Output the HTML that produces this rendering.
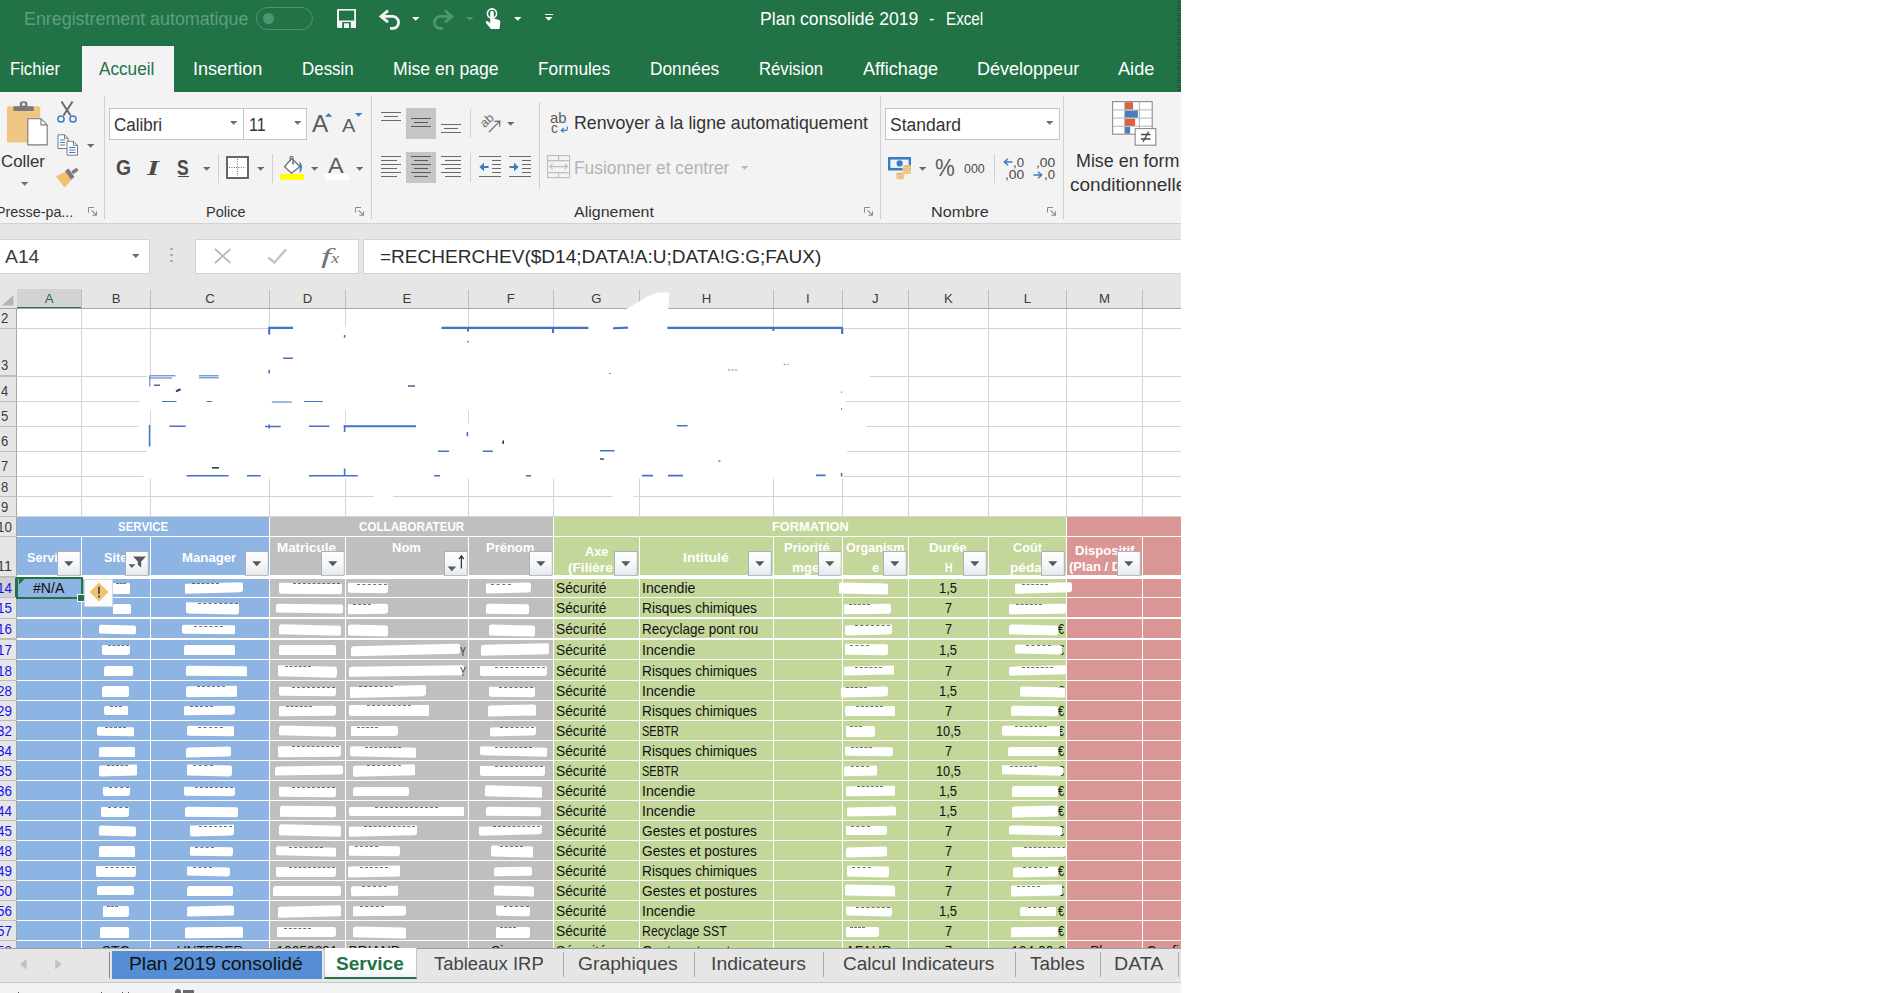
<!DOCTYPE html>
<html><head><meta charset="utf-8"><title>Plan consolidé 2019 - Excel</title>
<style>
html,body{margin:0;padding:0;background:#fff;}
body{width:1886px;height:993px;overflow:hidden;position:relative;font-family:"Liberation Sans", sans-serif;}
#app{position:absolute;left:0;top:0;width:1181px;height:993px;overflow:hidden;background:#e6e6e6;}
#app div,#app span,#app svg{box-sizing:border-box;}
</style></head><body><div id="app">
<div style="position:absolute;left:0px;top:0px;width:1181px;height:92px;background:#217346;"></div>
<svg style="position:absolute;left:1176.5px;top:0" width="4" height="92"><defs><pattern id="dp" width="4" height="12" patternUnits="userSpaceOnUse"><rect x="0.4" y="1" width="1" height="1" fill="#14306e"/><rect x="2.4" y="1" width="1" height="1" fill="#5a2a2a"/><rect x="1.4" y="2" width="1" height="1" fill="#0a8a0a"/><rect x="0.4" y="3" width="1" height="1" fill="#5a2a2a"/><rect x="2.4" y="3" width="1" height="1" fill="#14306e"/><rect x="2.4" y="5" width="1" height="1" fill="#5a2a2a"/><rect x="1.4" y="6" width="1" height="1" fill="#111"/><rect x="0.4" y="8" width="1" height="1" fill="#14306e"/><rect x="2.4" y="8" width="1" height="1" fill="#14306e"/><rect x="0.4" y="10" width="1" height="1" fill="#5a2a2a"/><rect x="2.4" y="10" width="1" height="1" fill="#5a2a2a"/></pattern></defs><rect width="4" height="92" fill="url(#dp)"/></svg>
<div style="position:absolute;left:82px;top:46px;width:92px;height:47px;background:#f3f3f3;"></div>
<span style="position:absolute;left:24.48px;top:11.09px;white-space:nowrap;line-height:1;font-family:'Liberation Sans', sans-serif;font-size:17.5px;font-weight:normal;font-style:normal;color:#5e9e7f;transform-origin:0 0;transform:scaleX(1.0205);">Enregistrement automatique</span>
<div style="position:absolute;left:256px;top:6.5px;width:57px;height:23.5px;border:1px solid #4f9470;border-radius:12px"></div>
<div style="position:absolute;left:262.5px;top:13px;width:11px;height:11px;border-radius:6px;background:#4f9470"></div>
<svg style="position:absolute;left:337px;top:8.8px;" width="19.4" height="19" viewBox="0 0 19.4 19"><rect x="0" y="0" width="19.4" height="19" rx="1.2" fill="#f4f4f4"/><rect x="2" y="1.6" width="15.2" height="9.9" fill="#217346"/><rect x="5.2" y="13" width="8.6" height="6" fill="#217346"/><rect x="7" y="14.3" width="5" height="4.7" fill="#f4f4f4"/></svg>
<svg style="position:absolute;left:378px;top:9px;" width="24" height="21" viewBox="0 0 24 21"><path d="M10 1.6 L3 7.4 L10 13.2" fill="none" stroke="#f4f4f4" stroke-width="2.8"/><path d="M3.6 7.4 H14.6 a6 6 0 0 1 0 12 H12" fill="none" stroke="#f4f4f4" stroke-width="2.8"/></svg>
<svg style="position:absolute;left:412px;top:17.2px;" width="7.4" height="3.8" viewBox="0 0 7.4 3.8"><path d="M0 0H7.4L3.7 3.8Z" fill="#fff"/></svg>
<svg style="position:absolute;left:431px;top:9px;" width="24" height="21" viewBox="0 0 24 21"><path d="M14 1.6 L21 7.4 L14 13.2" fill="none" stroke="#4e966f" stroke-width="2.8"/><path d="M20.4 7.4 H9.4 a6 6 0 0 0 0 12 H12" fill="none" stroke="#4e966f" stroke-width="2.8"/></svg>
<svg style="position:absolute;left:466px;top:17.2px;" width="7.4" height="3.8" viewBox="0 0 7.4 3.8"><path d="M0 0H7.4L3.7 3.8Z" fill="#4e936f"/></svg>
<svg style="position:absolute;left:484px;top:7px;" width="18" height="23" viewBox="0 0 18 23"><circle cx="8" cy="6.5" r="4.6" fill="none" stroke="#fff" stroke-width="1.6"/><path d="M6.2 5.5 a1.8 1.8 0 0 1 3.6 0 V11.5 L15 13 q1.5 .6 1.3 2.2 L15.5 22 H7 L2 16 q-.8-1.4 .6-2 q1-.3 1.8.5 L6.2 16.5 Z" fill="#fff"/></svg>
<svg style="position:absolute;left:514px;top:17.2px;" width="7.4" height="3.8" viewBox="0 0 7.4 3.8"><path d="M0 0H7.4L3.7 3.8Z" fill="#fff"/></svg>
<div style="position:absolute;left:545px;top:13.8px;width:7.6px;height:1.4px;background:#fff;"></div>
<svg style="position:absolute;left:545px;top:17.2px;" width="7.6" height="3.8" viewBox="0 0 7.6 3.8"><path d="M0 0H7.6L3.8 3.8Z" fill="#fff"/></svg>
<span style="position:absolute;left:759.97px;top:10.63px;white-space:nowrap;line-height:1;font-family:'Liberation Sans', sans-serif;font-size:17.8px;font-weight:normal;font-style:normal;color:#fff;transform-origin:0 0;transform:scaleX(0.9888);">Plan consolidé 2019</span>
<span style="position:absolute;left:929.47px;top:10.63px;white-space:nowrap;line-height:1;font-family:'Liberation Sans', sans-serif;font-size:17.8px;font-weight:normal;font-style:normal;color:#fff;transform-origin:0 0;transform:scaleX(0.9044);">-</span>
<span style="position:absolute;left:946.27px;top:10.63px;white-space:nowrap;line-height:1;font-family:'Liberation Sans', sans-serif;font-size:17.8px;font-weight:normal;font-style:normal;color:#fff;transform-origin:0 0;transform:scaleX(0.8545);">Excel</span>
<span style="position:absolute;left:10.27px;top:60.83px;white-space:nowrap;line-height:1;font-family:'Liberation Sans', sans-serif;font-size:17.8px;font-weight:normal;font-style:normal;color:#fff;transform-origin:0 0;transform:scaleX(0.9362);">Fichier</span>
<span style="position:absolute;left:99.47px;top:60.83px;white-space:nowrap;line-height:1;font-family:'Liberation Sans', sans-serif;font-size:17.8px;font-weight:normal;font-style:normal;color:#217346;transform-origin:0 0;transform:scaleX(0.9656);">Accueil</span>
<span style="position:absolute;left:193.47px;top:60.83px;white-space:nowrap;line-height:1;font-family:'Liberation Sans', sans-serif;font-size:17.8px;font-weight:normal;font-style:normal;color:#fff;transform-origin:0 0;transform:scaleX(1.0169);">Insertion</span>
<span style="position:absolute;left:302.07px;top:60.83px;white-space:nowrap;line-height:1;font-family:'Liberation Sans', sans-serif;font-size:17.8px;font-weight:normal;font-style:normal;color:#fff;transform-origin:0 0;transform:scaleX(0.9521);">Dessin</span>
<span style="position:absolute;left:393.17px;top:60.83px;white-space:nowrap;line-height:1;font-family:'Liberation Sans', sans-serif;font-size:17.8px;font-weight:normal;font-style:normal;color:#fff;transform-origin:0 0;transform:scaleX(0.9896);">Mise en page</span>
<span style="position:absolute;left:538.17px;top:60.83px;white-space:nowrap;line-height:1;font-family:'Liberation Sans', sans-serif;font-size:17.8px;font-weight:normal;font-style:normal;color:#fff;transform-origin:0 0;transform:scaleX(0.9736);">Formules</span>
<span style="position:absolute;left:650.17px;top:60.83px;white-space:nowrap;line-height:1;font-family:'Liberation Sans', sans-serif;font-size:17.8px;font-weight:normal;font-style:normal;color:#fff;transform-origin:0 0;transform:scaleX(0.9715);">Données</span>
<span style="position:absolute;left:759.37px;top:60.83px;white-space:nowrap;line-height:1;font-family:'Liberation Sans', sans-serif;font-size:17.8px;font-weight:normal;font-style:normal;color:#fff;transform-origin:0 0;transform:scaleX(0.9377);">Révision</span>
<span style="position:absolute;left:862.77px;top:60.83px;white-space:nowrap;line-height:1;font-family:'Liberation Sans', sans-serif;font-size:17.8px;font-weight:normal;font-style:normal;color:#fff;transform-origin:0 0;transform:scaleX(1.0166);">Affichage</span>
<span style="position:absolute;left:976.97px;top:60.83px;white-space:nowrap;line-height:1;font-family:'Liberation Sans', sans-serif;font-size:17.8px;font-weight:normal;font-style:normal;color:#fff;transform-origin:0 0;transform:scaleX(1.0132);">Développeur</span>
<span style="position:absolute;left:1117.67px;top:60.83px;white-space:nowrap;line-height:1;font-family:'Liberation Sans', sans-serif;font-size:17.8px;font-weight:normal;font-style:normal;color:#fff;transform-origin:0 0;transform:scaleX(1.0214);">Aide</span>
<div style="position:absolute;left:0px;top:92px;width:1181px;height:131px;background:#f3f3f3;"></div>
<div style="position:absolute;left:0px;top:222.5px;width:1181px;height:1.2px;background:#d2d2d2;"></div>
<div style="position:absolute;left:103.80000000000001px;top:96.3px;width:1.2px;height:122.5px;background:#d0d0d0;"></div>
<div style="position:absolute;left:370.9px;top:96.3px;width:1.2px;height:122.5px;background:#d0d0d0;"></div>
<div style="position:absolute;left:879.8px;top:96.3px;width:1.2px;height:122.5px;background:#d0d0d0;"></div>
<div style="position:absolute;left:1062.8000000000002px;top:96.3px;width:1.2px;height:122.5px;background:#d0d0d0;"></div>
<div style="position:absolute;left:217.8px;top:154px;width:1.1px;height:29px;background:#d0d0d0;"></div>
<div style="position:absolute;left:271.8px;top:154px;width:1.1px;height:29px;background:#d0d0d0;"></div>
<div style="position:absolute;left:469.9px;top:109px;width:1.1px;height:29px;background:#d0d0d0;"></div>
<div style="position:absolute;left:469.9px;top:153.4px;width:1.1px;height:28.5px;background:#d0d0d0;"></div>
<div style="position:absolute;left:538.8px;top:102.4px;width:1.1px;height:86.5px;background:#d0d0d0;"></div>
<div style="position:absolute;left:993.9px;top:154px;width:1.1px;height:28.5px;background:#d0d0d0;"></div>
<svg style="position:absolute;left:6px;top:100px;" width="43" height="47" viewBox="0 0 43 47"><rect x="1" y="6.2" width="33.2" height="36.2" rx="1.5" fill="#f0c684"/>
<path d="M7.4 10.9V7.2q0-1 1-1H13.8V3.6q0-2.4 3.8-2.4q3.8 0 3.8 2.4V6.2H26.8q1 0 1 1V10.9Z" fill="#7a7a7a"/><circle cx="17.6" cy="4.2" r="1.5" fill="#f3f3f3"/>
<path d="M21.8 18.7H35L41.2 24.9V44.9H21.8Z" fill="#fff" stroke="#7a7a7a" stroke-width="1.1"/><path d="M35 18.7V24.9H41.2" fill="none" stroke="#7a7a7a" stroke-width="1.1"/></svg>
<span style="position:absolute;left:1.38px;top:153.14px;white-space:nowrap;line-height:1;font-family:'Liberation Sans', sans-serif;font-size:17.2px;font-weight:normal;font-style:normal;color:#333;transform-origin:0 0;transform:scaleX(0.9789);">Coller</span>
<svg style="position:absolute;left:20.9px;top:182px;" width="7.3" height="3.8" viewBox="0 0 7.3 3.8"><path d="M0 0H7.3L3.65 3.8Z" fill="#6a6a6a"/></svg>
<svg style="position:absolute;left:56px;top:100px;" width="22" height="24" viewBox="0 0 22 24"><path d="M5.5 1.5 L14.5 15.5 M16.5 1.5 L7.5 15.5" stroke="#6a6a6a" stroke-width="2" fill="none"/>
<circle cx="5" cy="19" r="3.1" fill="none" stroke="#3b7dc4" stroke-width="1.5"/><circle cx="17" cy="19" r="3.1" fill="none" stroke="#3b7dc4" stroke-width="1.5"/></svg>
<svg style="position:absolute;left:57px;top:134px;" width="22" height="22" viewBox="0 0 22 22"><path d="M1 .8H7.5L11 4.3V14.5H1Z" fill="#fff" stroke="#7a7a7a" stroke-width="1"/><path d="M7.5 .8V4.3H11" fill="none" stroke="#7a7a7a"/>
<path d="M3 6H8M3 8.5H8M3 11H8" stroke="#3b7dc4" stroke-width="1"/>
<path d="M10 7.3H16.5L20.5 11.3V21.2H10Z" fill="#fff" stroke="#7a7a7a" stroke-width="1"/><path d="M16.5 7.3V11.3H20.5" fill="none" stroke="#7a7a7a"/>
<path d="M12 13.5H18.5M12 16H18.5M12 18.5H18.5" stroke="#3b7dc4" stroke-width="1"/></svg>
<svg style="position:absolute;left:87px;top:144.2px;" width="7.3" height="3.8" viewBox="0 0 7.3 3.8"><path d="M0 0H7.3L3.65 3.8Z" fill="#6a6a6a"/></svg>
<svg style="position:absolute;left:55px;top:167px;" width="25" height="22" viewBox="0 0 25 22"><path d="M1 9.5 L10.5 4.5 L16.5 13 L9.5 20.5 Z" fill="#f0c070"/>
<path d="M10 4 L13.5 1.5 L19.5 10 L16 12.7 Z" fill="#7a7a7a"/><path d="M16.2 4.2 L21.5 .8 L23.6 3.6 L18.2 7.2 Z" fill="#7a7a7a"/></svg>
<span style="position:absolute;left:-3.96px;top:204.15px;white-space:nowrap;line-height:1;font-family:'Liberation Sans', sans-serif;font-size:15.3px;font-weight:normal;font-style:normal;color:#333;transform-origin:0 0;transform:scaleX(0.9374);">Presse-pa...</span>
<svg style="position:absolute;left:87.7px;top:207.20000000000002px;" width="10" height="9.5" viewBox="0 0 10 9.5"><path d="M.5 5.6V.5H6" fill="none" stroke="#8a8a8a" stroke-width="1"/><path d="M3.6 3.4L8 7.8M8.4 4.2V8.2H4.4" fill="none" stroke="#8a8a8a" stroke-width="1.1"/></svg>
<div style="position:absolute;left:109px;top:108px;width:134.5px;height:31.5px;background:#fff;border:1px solid #c6c6c6"></div>
<div style="position:absolute;left:243px;top:108px;width:64px;height:31.5px;background:#fff;border:1px solid #c6c6c6"></div>
<span style="position:absolute;left:114.07px;top:116.60px;white-space:nowrap;line-height:1;font-family:'Liberation Sans', sans-serif;font-size:17.6px;font-weight:normal;font-style:normal;color:#333;transform-origin:0 0;transform:scaleX(0.9655);">Calibri</span>
<svg style="position:absolute;left:230px;top:121.3px;" width="7.2" height="3.8" viewBox="0 0 7.2 3.8"><path d="M0 0H7.2L3.6 3.8Z" fill="#6a6a6a"/></svg>
<span style="position:absolute;left:249.07px;top:116.60px;white-space:nowrap;line-height:1;font-family:'Liberation Sans', sans-serif;font-size:17.6px;font-weight:normal;font-style:normal;color:#333;transform-origin:0 0;transform:scaleX(0.9117);">11</span>
<svg style="position:absolute;left:294px;top:121.3px;" width="7.2" height="3.8" viewBox="0 0 7.2 3.8"><path d="M0 0H7.2L3.6 3.8Z" fill="#6a6a6a"/></svg>
<span style="position:absolute;left:311.50px;top:112.69px;white-space:nowrap;line-height:1;font-family:'Liberation Sans', sans-serif;font-size:23.4px;font-weight:normal;font-style:normal;color:#5c5c5c;transform-origin:0 0;transform:scaleX(1.0422);">A</span>
<svg style="position:absolute;left:325.2px;top:113.2px;" width="7.2" height="3.8" viewBox="0 0 7.2 3.8"><path d="M0 3.8H7.2L3.6 0Z" fill="#3b7dc4"/></svg>
<span style="position:absolute;left:342.25px;top:117.09px;white-space:nowrap;line-height:1;font-family:'Liberation Sans', sans-serif;font-size:18.2px;font-weight:normal;font-style:normal;color:#5c5c5c;transform-origin:0 0;transform:scaleX(1.1008);">A</span>
<svg style="position:absolute;left:354.8px;top:113.2px;" width="7.2" height="3.8" viewBox="0 0 7.2 3.8"><path d="M0 0H7.2L3.6 3.8Z" fill="#3b7dc4"/></svg>
<span style="position:absolute;left:116.15px;top:157.42px;white-space:nowrap;line-height:1;font-family:'Liberation Sans', sans-serif;font-size:21.6px;font-weight:bold;font-style:normal;color:#4a4a4a;transform-origin:0 0;transform:scaleX(0.8949);">G</span>
<span style="position:absolute;left:146.94px;top:157.08px;white-space:nowrap;line-height:1;font-family:'Liberation Serif', serif;font-size:22px;font-weight:bold;font-style:italic;color:#4a4a4a;transform-origin:0 0;transform:scaleX(1.4061);">I</span>
<span style="position:absolute;left:177.35px;top:157.42px;white-space:nowrap;line-height:1;font-family:'Liberation Sans', sans-serif;font-size:21.6px;font-weight:bold;font-style:normal;color:#4a4a4a;transform-origin:0 0;transform:scaleX(0.8074);">S</span>
<div style="position:absolute;left:177.6px;top:176.1px;width:11.8px;height:1.4px;background:#4a4a4a;"></div>
<svg style="position:absolute;left:202.8px;top:167px;" width="7.2" height="3.8" viewBox="0 0 7.2 3.8"><path d="M0 0H7.2L3.6 3.8Z" fill="#6a6a6a"/></svg>
<svg style="position:absolute;left:226px;top:156px;" width="23" height="23" viewBox="0 0 23 23"><rect x="1" y="1" width="21" height="21" fill="#fff" stroke="#5f5f5f" stroke-width="1.9"/><path d="M11.5 3V20M3 11.5H20" stroke="#6a6a6a" stroke-width="1" stroke-dasharray="1 1.4"/></svg>
<svg style="position:absolute;left:256.8px;top:167px;" width="7.2" height="3.8" viewBox="0 0 7.2 3.8"><path d="M0 0H7.2L3.6 3.8Z" fill="#6a6a6a"/></svg>
<svg style="position:absolute;left:280px;top:155px;" width="25" height="25" viewBox="0 0 25 25"><rect x="0" y="19.1" width="24" height="5.8" fill="#ffff00"/>
<path d="M11.5 3.5 L20 11.5 L11.5 18.3 L4.5 11.8 Z" fill="#fff" stroke="#6a6a6a" stroke-width="1.2"/>
<path d="M10.2 6.5V2.6q0-1.4 1.4-1.4q1.4 0 1.4 1.4V8" fill="none" stroke="#6a6a6a" stroke-width="1.1"/><circle cx="13" cy="8.3" r="1.1" fill="#6a6a6a"/>
<path d="M19.5 6.8q3.2 2.6 2.2 7.2q-.2 2.5-2 4.2q.2-3.8-.2-6.5Z" fill="#3b7dc4"/></svg>
<svg style="position:absolute;left:310.8px;top:167px;" width="7.2" height="3.8" viewBox="0 0 7.2 3.8"><path d="M0 0H7.2L3.6 3.8Z" fill="#6a6a6a"/></svg>
<span style="position:absolute;left:328.33px;top:154.71px;white-space:nowrap;line-height:1;font-family:'Liberation Sans', sans-serif;font-size:22.2px;font-weight:normal;font-style:normal;color:#5c5c5c;transform-origin:0 0;transform:scaleX(1.0561);">A</span>
<div style="position:absolute;left:324.9px;top:174.1px;width:24px;height:5.8px;background:#fff;"></div>
<svg style="position:absolute;left:355.8px;top:167px;" width="7.2" height="3.8" viewBox="0 0 7.2 3.8"><path d="M0 0H7.2L3.6 3.8Z" fill="#6a6a6a"/></svg>
<span style="position:absolute;left:206.34px;top:204.15px;white-space:nowrap;line-height:1;font-family:'Liberation Sans', sans-serif;font-size:15.3px;font-weight:normal;font-style:normal;color:#333;transform-origin:0 0;transform:scaleX(0.9480);">Police</span>
<svg style="position:absolute;left:354.8px;top:207.20000000000002px;" width="10" height="9.5" viewBox="0 0 10 9.5"><path d="M.5 5.6V.5H6" fill="none" stroke="#8a8a8a" stroke-width="1"/><path d="M3.6 3.4L8 7.8M8.4 4.2V8.2H4.4" fill="none" stroke="#8a8a8a" stroke-width="1.1"/></svg>
<div style="position:absolute;left:381px;top:111.725px;width:20px;height:1.15px;background:#6a6a6a;"></div>
<div style="position:absolute;left:383.8px;top:115.77499999999999px;width:14.399999999999999px;height:1.15px;background:#6a6a6a;"></div>
<div style="position:absolute;left:381px;top:119.82499999999999px;width:20px;height:1.15px;background:#6a6a6a;"></div>
<div style="position:absolute;left:406px;top:108px;width:30px;height:31px;background:#c6c6c6;"></div>
<div style="position:absolute;left:411px;top:117.925px;width:20px;height:1.15px;background:#5a5a5a;"></div>
<div style="position:absolute;left:414.2px;top:121.875px;width:14.0px;height:1.15px;background:#5a5a5a;"></div>
<div style="position:absolute;left:411px;top:125.825px;width:20px;height:1.15px;background:#5a5a5a;"></div>
<div style="position:absolute;left:441px;top:123.625px;width:20px;height:1.15px;background:#6a6a6a;"></div>
<div style="position:absolute;left:443.8px;top:127.675px;width:14.399999999999999px;height:1.15px;background:#6a6a6a;"></div>
<div style="position:absolute;left:441px;top:131.72500000000002px;width:20px;height:1.15px;background:#6a6a6a;"></div>
<svg style="position:absolute;left:479px;top:112px;" width="23" height="22" viewBox="0 0 23 22"><text x="0" y="0" font-family="Liberation Sans, sans-serif" font-size="12.5" fill="#6a6a6a" transform="translate(5.4,16.2) rotate(-42)">ab</text>
<path d="M10 20 L20.6 9.4 M15.4 9.4 L20.9 9.1 L20.6 14.6" fill="none" stroke="#6a6a6a" stroke-width="1.2"/></svg>
<svg style="position:absolute;left:506.7px;top:122.2px;" width="7.3" height="3.8" viewBox="0 0 7.3 3.8"><path d="M0 0H7.3L3.65 3.8Z" fill="#6a6a6a"/></svg>
<div style="position:absolute;left:381px;top:155.625px;width:20px;height:1.15px;background:#6a6a6a;"></div>
<div style="position:absolute;left:381px;top:159.655px;width:16.0px;height:1.15px;background:#6a6a6a;"></div>
<div style="position:absolute;left:381px;top:163.685px;width:20px;height:1.15px;background:#6a6a6a;"></div>
<div style="position:absolute;left:381px;top:167.715px;width:16.0px;height:1.15px;background:#6a6a6a;"></div>
<div style="position:absolute;left:381px;top:171.745px;width:20px;height:1.15px;background:#6a6a6a;"></div>
<div style="position:absolute;left:381px;top:175.775px;width:16.0px;height:1.15px;background:#6a6a6a;"></div>
<div style="position:absolute;left:406px;top:152px;width:30px;height:31px;background:#c6c6c6;"></div>
<div style="position:absolute;left:411px;top:155.625px;width:20px;height:1.15px;background:#5a5a5a;"></div>
<div style="position:absolute;left:414.2px;top:159.655px;width:14.0px;height:1.15px;background:#5a5a5a;"></div>
<div style="position:absolute;left:411px;top:163.685px;width:20px;height:1.15px;background:#5a5a5a;"></div>
<div style="position:absolute;left:414.2px;top:167.715px;width:14.0px;height:1.15px;background:#5a5a5a;"></div>
<div style="position:absolute;left:411px;top:171.745px;width:20px;height:1.15px;background:#5a5a5a;"></div>
<div style="position:absolute;left:414.2px;top:175.775px;width:14.0px;height:1.15px;background:#5a5a5a;"></div>
<div style="position:absolute;left:441px;top:155.625px;width:20px;height:1.15px;background:#6a6a6a;"></div>
<div style="position:absolute;left:445.0px;top:159.655px;width:16.0px;height:1.15px;background:#6a6a6a;"></div>
<div style="position:absolute;left:441px;top:163.685px;width:20px;height:1.15px;background:#6a6a6a;"></div>
<div style="position:absolute;left:445.0px;top:167.715px;width:16.0px;height:1.15px;background:#6a6a6a;"></div>
<div style="position:absolute;left:441px;top:171.745px;width:20px;height:1.15px;background:#6a6a6a;"></div>
<div style="position:absolute;left:445.0px;top:175.775px;width:16.0px;height:1.15px;background:#6a6a6a;"></div>
<div style="position:absolute;left:479px;top:155.625px;width:22px;height:1.15px;background:#6a6a6a;"></div>
<div style="position:absolute;left:491.76px;top:159.655px;width:9.24px;height:1.15px;background:#6a6a6a;"></div>
<div style="position:absolute;left:491.76px;top:163.685px;width:9.24px;height:1.15px;background:#6a6a6a;"></div>
<div style="position:absolute;left:491.76px;top:167.715px;width:9.24px;height:1.15px;background:#6a6a6a;"></div>
<div style="position:absolute;left:491.76px;top:171.745px;width:9.24px;height:1.15px;background:#6a6a6a;"></div>
<div style="position:absolute;left:479px;top:175.775px;width:22px;height:1.15px;background:#6a6a6a;"></div>
<svg style="position:absolute;left:478.5px;top:161.5px;" width="10" height="10" viewBox="0 0 10 10"><path d="M9.5 3.9H5V.8L.4 5L5 9.2V6.1H9.5Z" fill="#3b7dc4"/></svg>
<div style="position:absolute;left:509px;top:155.625px;width:22px;height:1.15px;background:#6a6a6a;"></div>
<div style="position:absolute;left:521.76px;top:159.655px;width:9.24px;height:1.15px;background:#6a6a6a;"></div>
<div style="position:absolute;left:521.76px;top:163.685px;width:9.24px;height:1.15px;background:#6a6a6a;"></div>
<div style="position:absolute;left:521.76px;top:167.715px;width:9.24px;height:1.15px;background:#6a6a6a;"></div>
<div style="position:absolute;left:521.76px;top:171.745px;width:9.24px;height:1.15px;background:#6a6a6a;"></div>
<div style="position:absolute;left:509px;top:175.775px;width:22px;height:1.15px;background:#6a6a6a;"></div>
<svg style="position:absolute;left:508.5px;top:161.5px;" width="10" height="10" viewBox="0 0 10 10"><path d="M.5 3.9H5V.8L9.6 5L5 9.2V6.1H.5Z" fill="#3b7dc4"/></svg>
<span style="position:absolute;left:550.35px;top:109.80px;white-space:nowrap;line-height:1;font-family:'Liberation Sans', sans-serif;font-size:15px;font-weight:normal;font-style:normal;color:#5c5c5c;transform-origin:0 0;transform:scaleX(0.9888);">ab</span>
<span style="position:absolute;left:550.55px;top:120.00px;white-space:nowrap;line-height:1;font-family:'Liberation Sans', sans-serif;font-size:15px;font-weight:normal;font-style:normal;color:#5c5c5c;transform-origin:0 0;transform:scaleX(0.9200);">c</span>
<svg style="position:absolute;left:559.5px;top:125.5px;" width="8.5" height="7" viewBox="0 0 8.5 7"><path d="M7.3 .5V3.2q0 1.2-1.2 1.2H1.5M3.8 2L1.2 4.4L3.8 6.6" fill="none" stroke="#3b7dc4" stroke-width="1.1"/></svg>
<span style="position:absolute;left:574.47px;top:115.43px;white-space:nowrap;line-height:1;font-family:'Liberation Sans', sans-serif;font-size:17.8px;font-weight:normal;font-style:normal;color:#333;transform-origin:0 0;transform:scaleX(0.9979);">Renvoyer à la ligne automatiquement</span>
<svg style="position:absolute;left:547px;top:155px;" width="23.5" height="23.5" viewBox="0 0 23.5 23.5"><rect x=".6" y=".6" width="22" height="22" fill="#f3f3f3" stroke="#bdbdbd" stroke-width="1.1"/>
<path d="M.6 5.6H22.6M.6 17.6H22.6M11.6 .6V5.6M11.6 17.6V22.6" stroke="#bdbdbd" stroke-width="1.1"/>
<path d="M3 11.6H20.4M5.6 9L3 11.6L5.6 14.2M17.8 9L20.4 11.6L17.8 14.2" fill="none" stroke="#bdbdbd" stroke-width="1.1"/></svg>
<span style="position:absolute;left:574.47px;top:159.83px;white-space:nowrap;line-height:1;font-family:'Liberation Sans', sans-serif;font-size:17.8px;font-weight:normal;font-style:normal;color:#b3b3b3;transform-origin:0 0;transform:scaleX(0.9763);">Fusionner et centrer</span>
<svg style="position:absolute;left:741px;top:166.2px;" width="7.2" height="3.8" viewBox="0 0 7.2 3.8"><path d="M0 0H7.2L3.6 3.8Z" fill="#b8b8b8"/></svg>
<span style="position:absolute;left:574.14px;top:204.15px;white-space:nowrap;line-height:1;font-family:'Liberation Sans', sans-serif;font-size:15.3px;font-weight:normal;font-style:normal;color:#333;transform-origin:0 0;transform:scaleX(1.0441);">Alignement</span>
<svg style="position:absolute;left:863.8px;top:207.20000000000002px;" width="10" height="9.5" viewBox="0 0 10 9.5"><path d="M.5 5.6V.5H6" fill="none" stroke="#8a8a8a" stroke-width="1"/><path d="M3.6 3.4L8 7.8M8.4 4.2V8.2H4.4" fill="none" stroke="#8a8a8a" stroke-width="1.1"/></svg>
<div style="position:absolute;left:885px;top:108px;width:174.5px;height:31.5px;background:#fff;border:1px solid #c6c6c6"></div>
<span style="position:absolute;left:890.27px;top:116.60px;white-space:nowrap;line-height:1;font-family:'Liberation Sans', sans-serif;font-size:17.6px;font-weight:normal;font-style:normal;color:#333;transform-origin:0 0;transform:scaleX(0.9936);">Standard</span>
<svg style="position:absolute;left:1045.7px;top:121.3px;" width="7.2" height="3.8" viewBox="0 0 7.2 3.8"><path d="M0 0H7.2L3.6 3.8Z" fill="#6a6a6a"/></svg>
<svg style="position:absolute;left:888px;top:157px;" width="24" height="23" viewBox="0 0 24 23"><rect x="0" y="0" width="23" height="13.5" fill="#3b7dc4"/><rect x="2.4" y="2.6" width="18.2" height="8.3" fill="#f3f3f3"/>
<circle cx="11.6" cy="6.4" r="3.1" fill="#3b7dc4"/>
<g fill="#eab765" stroke="#f3f3f3" stroke-width=".5"><ellipse cx="12.2" cy="20.8" rx="4.3" ry="1.6"/><ellipse cx="12.2" cy="18.8" rx="4.3" ry="1.6"/><ellipse cx="12.2" cy="16.8" rx="4.3" ry="1.6"/>
<ellipse cx="18.8" cy="15.4" rx="4.3" ry="1.6"/><ellipse cx="18.8" cy="13.4" rx="4.3" ry="1.6"/><ellipse cx="18.8" cy="11.4" rx="4.3" ry="1.6"/><ellipse cx="18.8" cy="9.4" rx="4.3" ry="1.6"/></g></svg>
<svg style="position:absolute;left:918.8px;top:167px;" width="7.2" height="3.8" viewBox="0 0 7.2 3.8"><path d="M0 0H7.2L3.6 3.8Z" fill="#6a6a6a"/></svg>
<span style="position:absolute;left:934.50px;top:157.41px;white-space:nowrap;line-height:1;font-family:'Liberation Sans', sans-serif;font-size:23.5px;font-weight:normal;font-style:normal;color:#5c5c5c;transform-origin:0 0;transform:scaleX(0.9504);">%</span>
<span style="position:absolute;left:964.40px;top:162.46px;white-space:nowrap;line-height:1;font-family:'Liberation Sans', sans-serif;font-size:13.4px;font-weight:normal;font-style:normal;color:#4a4a4a;transform-origin:0 0;transform:scaleX(0.9250);">000</span>
<svg style="position:absolute;left:1003px;top:157.5px;" width="10" height="8" viewBox="0 0 10 8"><path d="M9.5 4H1.5M5 .8L1.4 4L5 7.2" fill="none" stroke="#3b7dc4" stroke-width="1.5"/></svg>
<span style="position:absolute;left:1013.12px;top:156.73px;white-space:nowrap;line-height:1;font-family:'Liberation Sans', sans-serif;font-size:12.6px;font-weight:normal;font-style:normal;color:#4a4a4a;transform-origin:0 0;transform:scaleX(1.0510);">,0</span>
<span style="position:absolute;left:1005.22px;top:168.83px;white-space:nowrap;line-height:1;font-family:'Liberation Sans', sans-serif;font-size:12.6px;font-weight:normal;font-style:normal;color:#4a4a4a;transform-origin:0 0;transform:scaleX(1.0991);">,00</span>
<span style="position:absolute;left:1035.82px;top:156.73px;white-space:nowrap;line-height:1;font-family:'Liberation Sans', sans-serif;font-size:12.6px;font-weight:normal;font-style:normal;color:#4a4a4a;transform-origin:0 0;transform:scaleX(1.0991);">,00</span>
<svg style="position:absolute;left:1033px;top:170.5px;" width="10" height="8" viewBox="0 0 10 8"><path d="M.5 4H8.5M5 .8L8.6 4L5 7.2" fill="none" stroke="#3b7dc4" stroke-width="1.5"/></svg>
<span style="position:absolute;left:1043.62px;top:168.83px;white-space:nowrap;line-height:1;font-family:'Liberation Sans', sans-serif;font-size:12.6px;font-weight:normal;font-style:normal;color:#4a4a4a;transform-origin:0 0;transform:scaleX(1.0510);">,0</span>
<span style="position:absolute;left:931.34px;top:204.15px;white-space:nowrap;line-height:1;font-family:'Liberation Sans', sans-serif;font-size:15.3px;font-weight:normal;font-style:normal;color:#333;transform-origin:0 0;transform:scaleX(1.0607);">Nombre</span>
<svg style="position:absolute;left:1046.7px;top:207.20000000000002px;" width="10" height="9.5" viewBox="0 0 10 9.5"><path d="M.5 5.6V.5H6" fill="none" stroke="#8a8a8a" stroke-width="1"/><path d="M3.6 3.4L8 7.8M8.4 4.2V8.2H4.4" fill="none" stroke="#8a8a8a" stroke-width="1.1"/></svg>
<svg style="position:absolute;left:1112px;top:100.5px;" width="45" height="45" viewBox="0 0 45 45"><rect x=".6" y=".6" width="39.6" height="32.6" fill="#fff" stroke="#8a8a8a" stroke-width="1.1"/>
<rect x="12.9" y="1.2" width="8.2" height="7.4" fill="#dc6141"/><rect x="12.9" y="9.4" width="13" height="7.4" fill="#4a7ebb"/>
<rect x="12.9" y="17.6" width="10.2" height="7.4" fill="#dc6141"/><rect x="12.9" y="25.8" width="5.2" height="6.8" fill="#4a7ebb"/>
<path d="M.6 8.9H40.2M.6 17.1H40.2M.6 25.2H40.2M12.6 .6V33.2M27.4 .6V33.2" stroke="#b4b4b4" stroke-width="1" fill="none"/>
<rect x="23.2" y="27.6" width="20.6" height="16.6" fill="#fff" stroke="#8a8a8a" stroke-width="1.1"/>
<path d="M29 33.5H38.5M29 38H38.5M36.6 30.6L31 41" stroke="#4a4a4a" stroke-width="1.3" fill="none"/></svg>
<div style="position:absolute;left:1060px;top:148px;width:121px;height:24px;overflow:hidden"><span style="position:absolute;left:15.67px;top:4.80px;white-space:nowrap;line-height:1;font-family:'Liberation Sans', sans-serif;font-size:17.6px;font-weight:normal;font-style:normal;color:#333;transform-origin:0 0;transform:scaleX(1.0164);">Mise en form</span></div>
<div style="position:absolute;left:1060px;top:172px;width:121px;height:26px;overflow:hidden"><span style="position:absolute;left:10.27px;top:4.80px;white-space:nowrap;line-height:1;font-family:'Liberation Sans', sans-serif;font-size:17.6px;font-weight:normal;font-style:normal;color:#333;transform-origin:0 0;transform:scaleX(1.0812);">conditionnelle</span></div>
<div style="position:absolute;left:-1px;top:238.8px;width:150.5px;height:35.3px;background:#fff;border:1px solid #d4d4d4"></div>
<span style="position:absolute;left:5.05px;top:247.91px;white-space:nowrap;line-height:1;font-family:'Liberation Sans', sans-serif;font-size:18.3px;font-weight:normal;font-style:normal;color:#3b3b3b;transform-origin:0 0;transform:scaleX(1.0564);">A14</span>
<svg style="position:absolute;left:131.6px;top:253.9px;" width="7.6" height="3.9" viewBox="0 0 7.6 3.9"><path d="M0 0H7.6L3.8 3.9Z" fill="#6a6a6a"/></svg>
<div style="position:absolute;left:170.4px;top:248.2px;width:2.2px;height:2.2px;background:#b0b0b0;"></div>
<div style="position:absolute;left:170.4px;top:253.8px;width:2.2px;height:2.2px;background:#b0b0b0;"></div>
<div style="position:absolute;left:170.4px;top:259.6px;width:2.2px;height:2.2px;background:#b0b0b0;"></div>
<div style="position:absolute;left:195px;top:238.8px;width:164px;height:35.3px;background:#fff;border:1px solid #d4d4d4"></div>
<svg style="position:absolute;left:214px;top:248px;" width="18" height="16" viewBox="0 0 18 16"><path d="M1 1L16.5 15M16.5 1L1 15" stroke="#b8b8b8" stroke-width="1.7" fill="none"/></svg>
<svg style="position:absolute;left:267px;top:248px;" width="21" height="16" viewBox="0 0 21 16"><path d="M1.2 9.5L7.5 14.5L19.2 1.2" stroke="#c4c4c4" stroke-width="2.4" fill="none"/></svg>
<span style="position:absolute;left:320.94px;top:245.28px;white-space:nowrap;line-height:1;font-family:'Liberation Serif', serif;font-size:22px;font-weight:normal;font-style:italic;color:#747474;transform-origin:0 0;transform:scaleX(1.7045);">f</span>
<span style="position:absolute;left:330.95px;top:251.20px;white-space:nowrap;line-height:1;font-family:'Liberation Serif', serif;font-size:15px;font-weight:normal;font-style:italic;color:#747474;transform-origin:0 0;transform:scaleX(1.2440);">x</span>
<div style="position:absolute;left:363px;top:238.8px;width:830px;height:35.3px;background:#fff;border:1px solid #d4d4d4"></div>
<span style="position:absolute;left:380.25px;top:247.91px;white-space:nowrap;line-height:1;font-family:'Liberation Sans', sans-serif;font-size:18.3px;font-weight:normal;font-style:normal;color:#2b2b2b;transform-origin:0 0;transform:scaleX(1.0415);">=RECHERCHEV($D14;DATA!A:U;DATA!G:G;FAUX)</span>
<div style="position:absolute;left:0px;top:289.5px;width:1181px;height:659px;background:#fff;"></div>
<div style="position:absolute;left:0px;top:289.5px;width:1181px;height:19.2px;background:#e6e6e6;"></div>
<div style="position:absolute;left:17.1px;top:289.3px;width:64.6px;height:19px;background:#d2d2d2;"></div>
<div style="position:absolute;left:17.1px;top:306.8px;width:65.1px;height:2px;background:#217346;"></div>
<svg style="position:absolute;left:1.5px;top:294.5px;" width="12" height="11" viewBox="0 0 12 11"><path d="M11.5 0V10.5H0Z" fill="#b4b4b4"/></svg>
<div style="position:absolute;left:81.10000000000001px;top:289.6px;width:1.2px;height:18.6px;background:#bdbdbd;"></div>
<div style="position:absolute;left:149.8px;top:289.6px;width:1.2px;height:18.6px;background:#bdbdbd;"></div>
<div style="position:absolute;left:268.79999999999995px;top:289.6px;width:1.2px;height:18.6px;background:#bdbdbd;"></div>
<div style="position:absolute;left:344.79999999999995px;top:289.6px;width:1.2px;height:18.6px;background:#bdbdbd;"></div>
<div style="position:absolute;left:467.59999999999997px;top:289.6px;width:1.2px;height:18.6px;background:#bdbdbd;"></div>
<div style="position:absolute;left:552.8px;top:289.6px;width:1.2px;height:18.6px;background:#bdbdbd;"></div>
<div style="position:absolute;left:639.0px;top:289.6px;width:1.2px;height:18.6px;background:#bdbdbd;"></div>
<div style="position:absolute;left:772.8px;top:289.6px;width:1.2px;height:18.6px;background:#bdbdbd;"></div>
<div style="position:absolute;left:841.6999999999999px;top:289.6px;width:1.2px;height:18.6px;background:#bdbdbd;"></div>
<div style="position:absolute;left:907.8px;top:289.6px;width:1.2px;height:18.6px;background:#bdbdbd;"></div>
<div style="position:absolute;left:987.6999999999999px;top:289.6px;width:1.2px;height:18.6px;background:#bdbdbd;"></div>
<div style="position:absolute;left:1065.8000000000002px;top:289.6px;width:1.2px;height:18.6px;background:#bdbdbd;"></div>
<div style="position:absolute;left:1141.8000000000002px;top:289.6px;width:1.2px;height:18.6px;background:#bdbdbd;"></div>
<span style="position:absolute;left:44.75px;top:291.93px;white-space:nowrap;line-height:1;font-family:'Liberation Sans', sans-serif;font-size:13.2px;font-weight:normal;font-style:normal;color:#217346;transform-origin:0 0;transform:scaleX(1.0000);">A</span>
<span style="position:absolute;left:111.65px;top:291.93px;white-space:nowrap;line-height:1;font-family:'Liberation Sans', sans-serif;font-size:13.2px;font-weight:normal;font-style:normal;color:#3b3b3b;transform-origin:0 0;transform:scaleX(1.0000);">B</span>
<span style="position:absolute;left:205.13px;top:291.93px;white-space:nowrap;line-height:1;font-family:'Liberation Sans', sans-serif;font-size:13.2px;font-weight:normal;font-style:normal;color:#3b3b3b;transform-origin:0 0;transform:scaleX(1.0000);">C</span>
<span style="position:absolute;left:302.63px;top:291.93px;white-space:nowrap;line-height:1;font-family:'Liberation Sans', sans-serif;font-size:13.2px;font-weight:normal;font-style:normal;color:#3b3b3b;transform-origin:0 0;transform:scaleX(1.0000);">D</span>
<span style="position:absolute;left:402.40px;top:291.93px;white-space:nowrap;line-height:1;font-family:'Liberation Sans', sans-serif;font-size:13.2px;font-weight:normal;font-style:normal;color:#3b3b3b;transform-origin:0 0;transform:scaleX(1.0000);">E</span>
<span style="position:absolute;left:506.77px;top:291.93px;white-space:nowrap;line-height:1;font-family:'Liberation Sans', sans-serif;font-size:13.2px;font-weight:normal;font-style:normal;color:#3b3b3b;transform-origin:0 0;transform:scaleX(1.0000);">F</span>
<span style="position:absolute;left:591.37px;top:291.93px;white-space:nowrap;line-height:1;font-family:'Liberation Sans', sans-serif;font-size:13.2px;font-weight:normal;font-style:normal;color:#3b3b3b;transform-origin:0 0;transform:scaleX(1.0000);">G</span>
<span style="position:absolute;left:701.73px;top:291.93px;white-space:nowrap;line-height:1;font-family:'Liberation Sans', sans-serif;font-size:13.2px;font-weight:normal;font-style:normal;color:#3b3b3b;transform-origin:0 0;transform:scaleX(1.0000);">H</span>
<span style="position:absolute;left:806.01px;top:291.93px;white-space:nowrap;line-height:1;font-family:'Liberation Sans', sans-serif;font-size:13.2px;font-weight:normal;font-style:normal;color:#3b3b3b;transform-origin:0 0;transform:scaleX(1.0000);">I</span>
<span style="position:absolute;left:872.05px;top:291.93px;white-space:nowrap;line-height:1;font-family:'Liberation Sans', sans-serif;font-size:13.2px;font-weight:normal;font-style:normal;color:#3b3b3b;transform-origin:0 0;transform:scaleX(1.0000);">J</span>
<span style="position:absolute;left:943.95px;top:291.93px;white-space:nowrap;line-height:1;font-family:'Liberation Sans', sans-serif;font-size:13.2px;font-weight:normal;font-style:normal;color:#3b3b3b;transform-origin:0 0;transform:scaleX(1.0000);">K</span>
<span style="position:absolute;left:1023.68px;top:291.93px;white-space:nowrap;line-height:1;font-family:'Liberation Sans', sans-serif;font-size:13.2px;font-weight:normal;font-style:normal;color:#3b3b3b;transform-origin:0 0;transform:scaleX(1.0000);">L</span>
<span style="position:absolute;left:1098.90px;top:291.93px;white-space:nowrap;line-height:1;font-family:'Liberation Sans', sans-serif;font-size:13.2px;font-weight:normal;font-style:normal;color:#3b3b3b;transform-origin:0 0;transform:scaleX(1.0000);">M</span>
<div style="position:absolute;left:0px;top:308px;width:1181px;height:1.1px;background:#a6a6a6;"></div>
<div style="position:absolute;left:0px;top:309px;width:16.6px;height:640px;background:#e6e6e6;"></div>
<div style="position:absolute;left:16.1px;top:309px;width:1.1px;height:640px;background:#a6a6a6;"></div>
<div style="position:absolute;left:16.6px;top:328px;width:1181px;height:1px;background:#d4d4d4;"></div>
<div style="position:absolute;left:16.6px;top:376px;width:1181px;height:1px;background:#d4d4d4;"></div>
<div style="position:absolute;left:16.6px;top:401px;width:1181px;height:1px;background:#d4d4d4;"></div>
<div style="position:absolute;left:16.6px;top:426px;width:1181px;height:1px;background:#d4d4d4;"></div>
<div style="position:absolute;left:16.6px;top:451px;width:1181px;height:1px;background:#d4d4d4;"></div>
<div style="position:absolute;left:16.6px;top:476px;width:1181px;height:1px;background:#d4d4d4;"></div>
<div style="position:absolute;left:16.6px;top:496px;width:1181px;height:1px;background:#d4d4d4;"></div>
<div style="position:absolute;left:16.6px;top:516px;width:1181px;height:1px;background:#d4d4d4;"></div>
<div style="position:absolute;left:81px;top:309px;width:1px;height:207.5px;background:#d4d4d4;"></div>
<div style="position:absolute;left:150px;top:309px;width:1px;height:207.5px;background:#d4d4d4;"></div>
<div style="position:absolute;left:269px;top:309px;width:1px;height:207.5px;background:#d4d4d4;"></div>
<div style="position:absolute;left:345px;top:309px;width:1px;height:207.5px;background:#d4d4d4;"></div>
<div style="position:absolute;left:468px;top:309px;width:1px;height:207.5px;background:#d4d4d4;"></div>
<div style="position:absolute;left:553px;top:309px;width:1px;height:207.5px;background:#d4d4d4;"></div>
<div style="position:absolute;left:639px;top:309px;width:1px;height:207.5px;background:#d4d4d4;"></div>
<div style="position:absolute;left:773px;top:309px;width:1px;height:207.5px;background:#d4d4d4;"></div>
<div style="position:absolute;left:842px;top:309px;width:1px;height:207.5px;background:#d4d4d4;"></div>
<div style="position:absolute;left:908px;top:309px;width:1px;height:207.5px;background:#d4d4d4;"></div>
<div style="position:absolute;left:988px;top:309px;width:1px;height:207.5px;background:#d4d4d4;"></div>
<div style="position:absolute;left:1066px;top:309px;width:1px;height:207.5px;background:#d4d4d4;"></div>
<div style="position:absolute;left:1142px;top:309px;width:1px;height:207.5px;background:#d4d4d4;"></div>
<div style="position:absolute;left:0px;top:327.7px;width:16.6px;height:1.2px;background:#bdbdbd;"></div>
<div style="position:absolute;left:0px;top:309px;width:15.600000000000001px;height:19.30000000000001px;overflow:hidden"><span style="position:absolute;left:0.66px;top:1.75px;white-space:nowrap;line-height:1;font-family:'Liberation Sans', sans-serif;font-size:14px;font-weight:normal;font-style:normal;color:#3b3b3b;transform-origin:0 0;transform:scaleX(0.9337);">2</span></div>
<div style="position:absolute;left:0px;top:375.4px;width:16.6px;height:1.2px;background:#bdbdbd;"></div>
<div style="position:absolute;left:0px;top:328.3px;width:15.600000000000001px;height:47.69999999999999px;overflow:hidden"><span style="position:absolute;left:0.66px;top:30.15px;white-space:nowrap;line-height:1;font-family:'Liberation Sans', sans-serif;font-size:14px;font-weight:normal;font-style:normal;color:#3b3b3b;transform-origin:0 0;transform:scaleX(0.9337);">3</span></div>
<div style="position:absolute;left:0px;top:400.9px;width:16.6px;height:1.2px;background:#bdbdbd;"></div>
<div style="position:absolute;left:0px;top:376px;width:15.600000000000001px;height:25.5px;overflow:hidden"><span style="position:absolute;left:0.66px;top:7.95px;white-space:nowrap;line-height:1;font-family:'Liberation Sans', sans-serif;font-size:14px;font-weight:normal;font-style:normal;color:#3b3b3b;transform-origin:0 0;transform:scaleX(0.9337);">4</span></div>
<div style="position:absolute;left:0px;top:426.0px;width:16.6px;height:1.2px;background:#bdbdbd;"></div>
<div style="position:absolute;left:0px;top:401.5px;width:15.600000000000001px;height:25.100000000000023px;overflow:hidden"><span style="position:absolute;left:0.66px;top:7.55px;white-space:nowrap;line-height:1;font-family:'Liberation Sans', sans-serif;font-size:14px;font-weight:normal;font-style:normal;color:#3b3b3b;transform-origin:0 0;transform:scaleX(0.9337);">5</span></div>
<div style="position:absolute;left:0px;top:450.9px;width:16.6px;height:1.2px;background:#bdbdbd;"></div>
<div style="position:absolute;left:0px;top:426.6px;width:15.600000000000001px;height:24.899999999999977px;overflow:hidden"><span style="position:absolute;left:0.66px;top:7.35px;white-space:nowrap;line-height:1;font-family:'Liberation Sans', sans-serif;font-size:14px;font-weight:normal;font-style:normal;color:#3b3b3b;transform-origin:0 0;transform:scaleX(0.9337);">6</span></div>
<div style="position:absolute;left:0px;top:476.0px;width:16.6px;height:1.2px;background:#bdbdbd;"></div>
<div style="position:absolute;left:0px;top:451.5px;width:15.600000000000001px;height:25.100000000000023px;overflow:hidden"><span style="position:absolute;left:0.66px;top:7.55px;white-space:nowrap;line-height:1;font-family:'Liberation Sans', sans-serif;font-size:14px;font-weight:normal;font-style:normal;color:#3b3b3b;transform-origin:0 0;transform:scaleX(0.9337);">7</span></div>
<div style="position:absolute;left:0px;top:495.9px;width:16.6px;height:1.2px;background:#bdbdbd;"></div>
<div style="position:absolute;left:0px;top:476.6px;width:15.600000000000001px;height:19.899999999999977px;overflow:hidden"><span style="position:absolute;left:0.66px;top:3.35px;white-space:nowrap;line-height:1;font-family:'Liberation Sans', sans-serif;font-size:14px;font-weight:normal;font-style:normal;color:#3b3b3b;transform-origin:0 0;transform:scaleX(0.9337);">8</span></div>
<div style="position:absolute;left:0px;top:515.9px;width:16.6px;height:1.2px;background:#bdbdbd;"></div>
<div style="position:absolute;left:0px;top:496.5px;width:15.600000000000001px;height:20.0px;overflow:hidden"><span style="position:absolute;left:0.66px;top:3.45px;white-space:nowrap;line-height:1;font-family:'Liberation Sans', sans-serif;font-size:14px;font-weight:normal;font-style:normal;color:#3b3b3b;transform-origin:0 0;transform:scaleX(0.9337);">9</span></div>
<div style="position:absolute;left:0px;top:535.9px;width:16.6px;height:1.2px;background:#bdbdbd;"></div>
<div style="position:absolute;left:0px;top:516.5px;width:15.600000000000001px;height:20.0px;overflow:hidden"><span style="position:absolute;left:-3.14px;top:3.45px;white-space:nowrap;line-height:1;font-family:'Liberation Sans', sans-serif;font-size:14px;font-weight:normal;font-style:normal;color:#3b3b3b;transform-origin:0 0;transform:scaleX(0.9552);">10</span></div>
<div style="position:absolute;left:0px;top:576.4px;width:16.6px;height:1.2px;background:#bdbdbd;"></div>
<div style="position:absolute;left:0px;top:536.5px;width:15.600000000000001px;height:40.5px;overflow:hidden"><span style="position:absolute;left:-3.14px;top:22.95px;white-space:nowrap;line-height:1;font-family:'Liberation Sans', sans-serif;font-size:14px;font-weight:normal;font-style:normal;color:#3b3b3b;transform-origin:0 0;transform:scaleX(1.0229);">11</span></div>
<div style="position:absolute;left:0px;top:578.0px;width:16.1px;height:19.5px;background:#d2d2d2;"></div>
<div style="position:absolute;left:14.600000000000001px;top:578.0px;width:2px;height:19.5px;background:#217346;"></div>
<div style="position:absolute;left:0px;top:596.9px;width:16.6px;height:1.2px;background:#bdbdbd;"></div>
<div style="position:absolute;left:0px;top:578.0px;width:15.600000000000001px;height:19.5px;overflow:hidden"><span style="position:absolute;left:-3.14px;top:2.85px;white-space:nowrap;line-height:1;font-family:'Liberation Sans', sans-serif;font-size:14px;font-weight:normal;font-style:normal;color:#1212f0;transform-origin:0 0;transform:scaleX(0.9552);">14</span></div>
<div style="position:absolute;left:0px;top:617.5px;width:16.6px;height:1.2px;background:#bdbdbd;"></div>
<div style="position:absolute;left:0px;top:597.5px;width:15.600000000000001px;height:20.600000000000023px;overflow:hidden"><span style="position:absolute;left:-3.14px;top:3.95px;white-space:nowrap;line-height:1;font-family:'Liberation Sans', sans-serif;font-size:14px;font-weight:normal;font-style:normal;color:#1212f0;transform-origin:0 0;transform:scaleX(0.9552);">15</span></div>
<div style="position:absolute;left:0px;top:638.4px;width:16.6px;height:1.2px;background:#bdbdbd;"></div>
<div style="position:absolute;left:0px;top:618.1px;width:15.600000000000001px;height:20.899999999999977px;overflow:hidden"><span style="position:absolute;left:-3.14px;top:4.25px;white-space:nowrap;line-height:1;font-family:'Liberation Sans', sans-serif;font-size:14px;font-weight:normal;font-style:normal;color:#1212f0;transform-origin:0 0;transform:scaleX(0.9552);">16</span></div>
<div style="position:absolute;left:0px;top:659.1px;width:16.6px;height:1.2px;background:#bdbdbd;"></div>
<div style="position:absolute;left:0px;top:639.0px;width:15.600000000000001px;height:20.700000000000045px;overflow:hidden"><span style="position:absolute;left:-3.14px;top:4.05px;white-space:nowrap;line-height:1;font-family:'Liberation Sans', sans-serif;font-size:14px;font-weight:normal;font-style:normal;color:#1212f0;transform-origin:0 0;transform:scaleX(0.9552);">17</span></div>
<div style="position:absolute;left:0px;top:679.6999999999999px;width:16.6px;height:1.2px;background:#bdbdbd;"></div>
<div style="position:absolute;left:0px;top:659.7px;width:15.600000000000001px;height:20.59999999999991px;overflow:hidden"><span style="position:absolute;left:-3.14px;top:3.95px;white-space:nowrap;line-height:1;font-family:'Liberation Sans', sans-serif;font-size:14px;font-weight:normal;font-style:normal;color:#1212f0;transform-origin:0 0;transform:scaleX(0.9552);">18</span></div>
<div style="position:absolute;left:0px;top:699.8px;width:16.6px;height:1.2px;background:#bdbdbd;"></div>
<div style="position:absolute;left:0px;top:680.3px;width:15.600000000000001px;height:20.100000000000023px;overflow:hidden"><span style="position:absolute;left:-3.14px;top:3.45px;white-space:nowrap;line-height:1;font-family:'Liberation Sans', sans-serif;font-size:14px;font-weight:normal;font-style:normal;color:#1212f0;transform-origin:0 0;transform:scaleX(0.9552);">28</span></div>
<div style="position:absolute;left:0px;top:719.6999999999999px;width:16.6px;height:1.2px;background:#bdbdbd;"></div>
<div style="position:absolute;left:0px;top:700.4px;width:15.600000000000001px;height:19.899999999999977px;overflow:hidden"><span style="position:absolute;left:-3.14px;top:3.25px;white-space:nowrap;line-height:1;font-family:'Liberation Sans', sans-serif;font-size:14px;font-weight:normal;font-style:normal;color:#1212f0;transform-origin:0 0;transform:scaleX(0.9552);">29</span></div>
<div style="position:absolute;left:0px;top:739.6px;width:16.6px;height:1.2px;background:#bdbdbd;"></div>
<div style="position:absolute;left:0px;top:720.3px;width:15.600000000000001px;height:19.90000000000009px;overflow:hidden"><span style="position:absolute;left:-3.14px;top:3.25px;white-space:nowrap;line-height:1;font-family:'Liberation Sans', sans-serif;font-size:14px;font-weight:normal;font-style:normal;color:#1212f0;transform-origin:0 0;transform:scaleX(0.9552);">32</span></div>
<div style="position:absolute;left:0px;top:759.6px;width:16.6px;height:1.2px;background:#bdbdbd;"></div>
<div style="position:absolute;left:0px;top:740.2px;width:15.600000000000001px;height:20.0px;overflow:hidden"><span style="position:absolute;left:-3.14px;top:3.35px;white-space:nowrap;line-height:1;font-family:'Liberation Sans', sans-serif;font-size:14px;font-weight:normal;font-style:normal;color:#1212f0;transform-origin:0 0;transform:scaleX(0.9552);">34</span></div>
<div style="position:absolute;left:0px;top:779.8px;width:16.6px;height:1.2px;background:#bdbdbd;"></div>
<div style="position:absolute;left:0px;top:760.2px;width:15.600000000000001px;height:20.199999999999932px;overflow:hidden"><span style="position:absolute;left:-3.14px;top:3.55px;white-space:nowrap;line-height:1;font-family:'Liberation Sans', sans-serif;font-size:14px;font-weight:normal;font-style:normal;color:#1212f0;transform-origin:0 0;transform:scaleX(0.9552);">35</span></div>
<div style="position:absolute;left:0px;top:799.8px;width:16.6px;height:1.2px;background:#bdbdbd;"></div>
<div style="position:absolute;left:0px;top:780.4px;width:15.600000000000001px;height:20.0px;overflow:hidden"><span style="position:absolute;left:-3.14px;top:3.35px;white-space:nowrap;line-height:1;font-family:'Liberation Sans', sans-serif;font-size:14px;font-weight:normal;font-style:normal;color:#1212f0;transform-origin:0 0;transform:scaleX(0.9552);">36</span></div>
<div style="position:absolute;left:0px;top:819.8px;width:16.6px;height:1.2px;background:#bdbdbd;"></div>
<div style="position:absolute;left:0px;top:800.4px;width:15.600000000000001px;height:20.0px;overflow:hidden"><span style="position:absolute;left:-3.14px;top:3.35px;white-space:nowrap;line-height:1;font-family:'Liberation Sans', sans-serif;font-size:14px;font-weight:normal;font-style:normal;color:#1212f0;transform-origin:0 0;transform:scaleX(0.9552);">44</span></div>
<div style="position:absolute;left:0px;top:839.8px;width:16.6px;height:1.2px;background:#bdbdbd;"></div>
<div style="position:absolute;left:0px;top:820.4px;width:15.600000000000001px;height:20.0px;overflow:hidden"><span style="position:absolute;left:-3.14px;top:3.35px;white-space:nowrap;line-height:1;font-family:'Liberation Sans', sans-serif;font-size:14px;font-weight:normal;font-style:normal;color:#1212f0;transform-origin:0 0;transform:scaleX(0.9552);">45</span></div>
<div style="position:absolute;left:0px;top:859.8px;width:16.6px;height:1.2px;background:#bdbdbd;"></div>
<div style="position:absolute;left:0px;top:840.4px;width:15.600000000000001px;height:20.0px;overflow:hidden"><span style="position:absolute;left:-3.14px;top:3.35px;white-space:nowrap;line-height:1;font-family:'Liberation Sans', sans-serif;font-size:14px;font-weight:normal;font-style:normal;color:#1212f0;transform-origin:0 0;transform:scaleX(0.9552);">48</span></div>
<div style="position:absolute;left:0px;top:879.8px;width:16.6px;height:1.2px;background:#bdbdbd;"></div>
<div style="position:absolute;left:0px;top:860.4px;width:15.600000000000001px;height:20.0px;overflow:hidden"><span style="position:absolute;left:-3.14px;top:3.35px;white-space:nowrap;line-height:1;font-family:'Liberation Sans', sans-serif;font-size:14px;font-weight:normal;font-style:normal;color:#1212f0;transform-origin:0 0;transform:scaleX(0.9552);">49</span></div>
<div style="position:absolute;left:0px;top:899.8px;width:16.6px;height:1.2px;background:#bdbdbd;"></div>
<div style="position:absolute;left:0px;top:880.4px;width:15.600000000000001px;height:20.0px;overflow:hidden"><span style="position:absolute;left:-3.14px;top:3.35px;white-space:nowrap;line-height:1;font-family:'Liberation Sans', sans-serif;font-size:14px;font-weight:normal;font-style:normal;color:#1212f0;transform-origin:0 0;transform:scaleX(0.9552);">50</span></div>
<div style="position:absolute;left:0px;top:919.9px;width:16.6px;height:1.2px;background:#bdbdbd;"></div>
<div style="position:absolute;left:0px;top:900.4px;width:15.600000000000001px;height:20.100000000000023px;overflow:hidden"><span style="position:absolute;left:-3.14px;top:3.45px;white-space:nowrap;line-height:1;font-family:'Liberation Sans', sans-serif;font-size:14px;font-weight:normal;font-style:normal;color:#1212f0;transform-origin:0 0;transform:scaleX(0.9552);">56</span></div>
<div style="position:absolute;left:0px;top:940.0px;width:16.6px;height:1.2px;background:#bdbdbd;"></div>
<div style="position:absolute;left:0px;top:920.5px;width:15.600000000000001px;height:20.100000000000023px;overflow:hidden"><span style="position:absolute;left:-3.14px;top:3.45px;white-space:nowrap;line-height:1;font-family:'Liberation Sans', sans-serif;font-size:14px;font-weight:normal;font-style:normal;color:#1212f0;transform-origin:0 0;transform:scaleX(0.9552);">57</span></div>
<div style="position:absolute;left:0px;top:960.0px;width:16.6px;height:1.2px;background:#bdbdbd;"></div>
<div style="position:absolute;left:0px;top:940.6px;width:15.600000000000001px;height:7.600000000000023px;overflow:hidden"><span style="position:absolute;left:-3.14px;top:3.35px;white-space:nowrap;line-height:1;font-family:'Liberation Sans', sans-serif;font-size:14px;font-weight:normal;font-style:normal;color:#1212f0;transform-origin:0 0;transform:scaleX(0.9552);">58</span></div>
<svg style="position:absolute;left:0;top:280px" width="1181" height="240" viewBox="0 280 1181 240"><path d="M268.2 326.8 L843.4 326.8 L843.6 336 L852 352 L871 375 L858 388 L845.5 401 L856 414 L866.5 426.5 L855 440 L847 451.5 L844 465 L843.4 478.6 L637 478.8 L637.4 489 L632 499.6 L613 499 L608 478.8 L394 478.8 L393 497.5 L384 499.5 L374 497.5 L372 478.8 L143.4 478.6 L145 465 L146.8 451.5 L141 440 L138.6 427 L138 414 L139.2 401.5 L144 388 L148.2 374.9 L268.2 374.9 Z" fill="#fff"/><path d="M587 330 L628 308 L648.6 296 L658.8 292.6 L669.2 292.6 L667.4 330 Z" fill="#fff"/><path d="M150.5 410.5V426M345.5 410.5V423.5M468.5 410.5V423.5" stroke="#d8d8d8" stroke-width="1"/><g stroke="#4472c4" stroke-width="1.6" fill="none"><path d="M344.6 335V337.8M468 341V342.5"/><path d="M268.2 327.9H293M269.2 327.9V334.5M441.5 327.9H588.4M613 328.3L628 327.6M667.3 327.9H843M842.2 328V334M468 328V331.5M553 328V333M773.4 328V331" stroke-width="2.1"/><path d="M283 358.3H293M269.2 370V373.5"/><path d="M609 373.5H611M728 370H738.6M783.7 364.4H788.5M841.6 391.5V393M841.6 408V410" stroke-width="1" stroke-dasharray="2 1.5" opacity=".8"/><path d="M149.5 375.8H175.4M149.5 378H172M149.8 375.8V386.5M199 375.8H218.6M199 377.8H218.6" stroke-width="1"/><path d="M162 401.5H176.5M206.5 401.5H212M271.8 402H291.8M304 401.5H322.8" stroke-width="1.1"/><path d="M149.6 425V446.5M169.4 426.2H185.8M265 426.5H280.7M309 426.2H329.4M269.2 424.5V428.5M677 425.7H687.6"/><path d="M343.8 426.2H416" stroke-width="2"/><path d="M344.6 425V432M467.4 432V436.2"/><path d="M438 451.2H449M482.8 451.2H492.8M600 450.8H614.5" /><path d="M186.5 475.8H228.6M247 475.8H260.7M309 475.8H357.8M344.6 468.4V476M434 475.8H440M526 475.8H531M642 475.6H653M668 475.6H683M816 475.4H825.6M841.6 473V476.6"/></g><g fill="#1f3c6e"><rect x="154" y="384.6" width="6" height="1.2"/><rect x="176" y="389.5" width="5" height="2" transform="rotate(-25 178 391)"/><rect x="212" y="467" width="7" height="1.6"/><rect x="408" y="385.4" width="7" height="1.2"/><rect x="502.4" y="440.5" width="1.6" height="3.4" fill="#333"/><rect x="600" y="458.4" width="4" height="1.3" fill="#333"/><rect x="718.4" y="460.6" width="2" height="1" fill="#333"/></g></svg>
<div style="position:absolute;left:17.0px;top:516.9px;width:251.89999999999998px;height:18.800000000000068px;background:#8db4e2;"></div>
<div style="position:absolute;left:270.0px;top:516.9px;width:282.8px;height:18.800000000000068px;background:#bfbfbf;"></div>
<div style="position:absolute;left:554.0px;top:516.9px;width:511.8000000000001px;height:18.800000000000068px;background:#c4d79b;"></div>
<div style="position:absolute;left:1067.0px;top:516.9px;width:114.59999999999991px;height:18.800000000000068px;background:#da9694;"></div>
<span style="position:absolute;left:117.87px;top:519.90px;white-space:nowrap;line-height:1;font-family:'Liberation Sans', sans-serif;font-size:13px;font-weight:bold;font-style:normal;color:#fff;transform-origin:0 0;transform:scaleX(0.8842);">SERVICE</span>
<span style="position:absolute;left:359.37px;top:519.90px;white-space:nowrap;line-height:1;font-family:'Liberation Sans', sans-serif;font-size:13px;font-weight:bold;font-style:normal;color:#fff;transform-origin:0 0;transform:scaleX(0.8959);">COLLABORATEUR</span>
<span style="position:absolute;left:771.62px;top:519.90px;white-space:nowrap;line-height:1;font-family:'Liberation Sans', sans-serif;font-size:13px;font-weight:bold;font-style:normal;color:#fff;transform-origin:0 0;transform:scaleX(0.9873);">FORMATION</span>
<div style="position:absolute;left:17.150000000000002px;top:537.3px;width:64.0px;height:38.200000000000045px;background:#8db4e2;"></div>
<div style="position:absolute;left:82.25px;top:537.3px;width:67.6px;height:38.200000000000045px;background:#8db4e2;"></div>
<div style="position:absolute;left:150.95000000000002px;top:537.3px;width:117.89999999999995px;height:38.200000000000045px;background:#8db4e2;"></div>
<div style="position:absolute;left:269.95px;top:537.3px;width:74.89999999999998px;height:38.200000000000045px;background:#bfbfbf;"></div>
<div style="position:absolute;left:345.95px;top:537.3px;width:121.69999999999999px;height:38.200000000000045px;background:#bfbfbf;"></div>
<div style="position:absolute;left:468.75px;top:537.3px;width:84.10000000000002px;height:38.200000000000045px;background:#bfbfbf;"></div>
<div style="position:absolute;left:553.9499999999999px;top:537.3px;width:85.10000000000014px;height:38.200000000000045px;background:#c4d79b;"></div>
<div style="position:absolute;left:640.15px;top:537.3px;width:132.70000000000005px;height:38.200000000000045px;background:#c4d79b;"></div>
<div style="position:absolute;left:773.9499999999999px;top:537.3px;width:67.80000000000007px;height:38.200000000000045px;background:#c4d79b;"></div>
<div style="position:absolute;left:842.8499999999999px;top:537.3px;width:65.00000000000011px;height:38.200000000000045px;background:#c4d79b;"></div>
<div style="position:absolute;left:908.9499999999999px;top:537.3px;width:78.80000000000007px;height:38.200000000000045px;background:#c4d79b;"></div>
<div style="position:absolute;left:988.8499999999999px;top:537.3px;width:77.00000000000023px;height:38.200000000000045px;background:#c4d79b;"></div>
<div style="position:absolute;left:1066.95px;top:537.3px;width:74.90000000000009px;height:38.200000000000045px;background:#da9694;"></div>
<div style="position:absolute;left:1142.95px;top:537.3px;width:38.09999999999991px;height:38.200000000000045px;background:#da9694;"></div>
<div style="position:absolute;left:17px;top:537px;width:40.3px;height:39px;overflow:hidden"><span style="position:absolute;left:9.80px;top:14.36px;white-space:nowrap;line-height:1;font-family:'Liberation Sans', sans-serif;font-size:13.4px;font-weight:bold;font-style:normal;color:#fff;transform-origin:0 0;transform:scaleX(0.9390);">Servi</span></div>
<div style="position:absolute;left:82px;top:537px;width:43.5px;height:39px;overflow:hidden"><span style="position:absolute;left:21.60px;top:14.36px;white-space:nowrap;line-height:1;font-family:'Liberation Sans', sans-serif;font-size:13.4px;font-weight:bold;font-style:normal;color:#fff;transform-origin:0 0;transform:scaleX(0.9473);">Site</span></div>
<span style="position:absolute;left:182.40px;top:551.36px;white-space:nowrap;line-height:1;font-family:'Liberation Sans', sans-serif;font-size:13.4px;font-weight:bold;font-style:normal;color:#fff;transform-origin:0 0;transform:scaleX(0.9853);">Manager</span>
<span style="position:absolute;left:277.40px;top:541.16px;white-space:nowrap;line-height:1;font-family:'Liberation Sans', sans-serif;font-size:13.4px;font-weight:bold;font-style:normal;color:#fff;transform-origin:0 0;transform:scaleX(1.0012);">Matricule</span>
<span style="position:absolute;left:392.40px;top:541.16px;white-space:nowrap;line-height:1;font-family:'Liberation Sans', sans-serif;font-size:13.4px;font-weight:bold;font-style:normal;color:#fff;transform-origin:0 0;transform:scaleX(0.9698);">Nom</span>
<span style="position:absolute;left:486.10px;top:541.16px;white-space:nowrap;line-height:1;font-family:'Liberation Sans', sans-serif;font-size:13.4px;font-weight:bold;font-style:normal;color:#fff;transform-origin:0 0;transform:scaleX(0.9681);">Prénom</span>
<span style="position:absolute;left:585.00px;top:544.76px;white-space:nowrap;line-height:1;font-family:'Liberation Sans', sans-serif;font-size:13.4px;font-weight:bold;font-style:normal;color:#fff;transform-origin:0 0;transform:scaleX(0.9548);">Axe</span>
<div style="position:absolute;left:554px;top:556px;width:60.2px;height:20px;overflow:hidden"><span style="position:absolute;left:14.40px;top:4.76px;white-space:nowrap;line-height:1;font-family:'Liberation Sans', sans-serif;font-size:13.4px;font-weight:bold;font-style:normal;color:#fff;transform-origin:0 0;transform:scaleX(1.0185);">(Filière:</span></div>
<span style="position:absolute;left:682.90px;top:551.36px;white-space:nowrap;line-height:1;font-family:'Liberation Sans', sans-serif;font-size:13.4px;font-weight:bold;font-style:normal;color:#fff;transform-origin:0 0;transform:scaleX(1.0428);">Intitulé</span>
<span style="position:absolute;left:784.20px;top:541.16px;white-space:nowrap;line-height:1;font-family:'Liberation Sans', sans-serif;font-size:13.4px;font-weight:bold;font-style:normal;color:#fff;transform-origin:0 0;transform:scaleX(0.9761);">Priorité</span>
<div style="position:absolute;left:774px;top:556px;width:43.7px;height:20px;overflow:hidden"><span style="position:absolute;left:18.40px;top:4.76px;white-space:nowrap;line-height:1;font-family:'Liberation Sans', sans-serif;font-size:13.4px;font-weight:bold;font-style:normal;color:#fff;transform-origin:0 0;transform:scaleX(0.9899);">mge</span></div>
<span style="position:absolute;left:846.10px;top:541.16px;white-space:nowrap;line-height:1;font-family:'Liberation Sans', sans-serif;font-size:13.4px;font-weight:bold;font-style:normal;color:#fff;transform-origin:0 0;transform:scaleX(0.9353);">Organism</span>
<span style="position:absolute;left:872.10px;top:560.76px;white-space:nowrap;line-height:1;font-family:'Liberation Sans', sans-serif;font-size:13.4px;font-weight:bold;font-style:normal;color:#fff;transform-origin:0 0;transform:scaleX(0.9483);">e</span>
<span style="position:absolute;left:928.90px;top:541.16px;white-space:nowrap;line-height:1;font-family:'Liberation Sans', sans-serif;font-size:13.4px;font-weight:bold;font-style:normal;color:#fff;transform-origin:0 0;transform:scaleX(0.9921);">Durée</span>
<span style="position:absolute;left:944.60px;top:560.76px;white-space:nowrap;line-height:1;font-family:'Liberation Sans', sans-serif;font-size:13.4px;font-weight:bold;font-style:normal;color:#fff;transform-origin:0 0;transform:scaleX(0.7825);">H</span>
<span style="position:absolute;left:1012.80px;top:541.16px;white-space:nowrap;line-height:1;font-family:'Liberation Sans', sans-serif;font-size:13.4px;font-weight:bold;font-style:normal;color:#fff;transform-origin:0 0;transform:scaleX(0.9530);">Coût</span>
<div style="position:absolute;left:989px;top:556px;width:52.3px;height:20px;overflow:hidden"><span style="position:absolute;left:21.40px;top:4.76px;white-space:nowrap;line-height:1;font-family:'Liberation Sans', sans-serif;font-size:13.4px;font-weight:bold;font-style:normal;color:#fff;transform-origin:0 0;transform:scaleX(1.0161);">péda</span></div>
<span style="position:absolute;left:1075.02px;top:545.43px;white-space:nowrap;line-height:1;font-family:'Liberation Sans', sans-serif;font-size:12.6px;font-weight:bold;font-style:normal;color:#fff;transform-origin:0 0;transform:scaleX(1.0362);">Dispositif</span>
<div style="position:absolute;left:1067px;top:556px;width:50.5px;height:20px;overflow:hidden"><span style="position:absolute;left:2.12px;top:5.23px;white-space:nowrap;line-height:1;font-family:'Liberation Sans', sans-serif;font-size:12.6px;font-weight:bold;font-style:normal;color:#fff;transform-origin:0 0;transform:scaleX(1.0369);">(Plan / D</span></div>
<svg style="position:absolute;left:56.8px;top:551.0px;" width="23.8" height="25.2" viewBox="0 0 23.8 25.2"><defs><linearGradient id="fg" x1="0" y1="0" x2="0" y2="1"><stop offset="0" stop-color="#fdfdfe"/><stop offset=".55" stop-color="#f5f6f8"/><stop offset="1" stop-color="#e4e7ec"/></linearGradient></defs><rect x=".5" y=".5" width="22.8" height="24.2" fill="url(#fg)" stroke="#a9b0b8" stroke-width="1"/><path d="M7.2 10.2H16.4L11.8 15.2Z" fill="#595959"/></svg>
<svg style="position:absolute;left:125.4px;top:551.0px;" width="23.8" height="25.2" viewBox="0 0 23.8 25.2"><defs><linearGradient id="fg" x1="0" y1="0" x2="0" y2="1"><stop offset="0" stop-color="#fdfdfe"/><stop offset=".55" stop-color="#f5f6f8"/><stop offset="1" stop-color="#e4e7ec"/></linearGradient></defs><rect x=".5" y=".5" width="22.8" height="24.2" fill="url(#fg)" stroke="#a9b0b8" stroke-width="1"/><path d="M8 5.5H21L16.2 10.6V16.5L12.8 13.8V10.6Z" fill="#595959"/><path d="M3.5 13.2H10.3L6.9 16.9Z" fill="#595959"/></svg>
<svg style="position:absolute;left:244.6px;top:551.0px;" width="23.8" height="25.2" viewBox="0 0 23.8 25.2"><defs><linearGradient id="fg" x1="0" y1="0" x2="0" y2="1"><stop offset="0" stop-color="#fdfdfe"/><stop offset=".55" stop-color="#f5f6f8"/><stop offset="1" stop-color="#e4e7ec"/></linearGradient></defs><rect x=".5" y=".5" width="22.8" height="24.2" fill="url(#fg)" stroke="#a9b0b8" stroke-width="1"/><path d="M7.2 10.2H16.4L11.8 15.2Z" fill="#595959"/></svg>
<svg style="position:absolute;left:320.6px;top:551.0px;" width="23.8" height="25.2" viewBox="0 0 23.8 25.2"><defs><linearGradient id="fg" x1="0" y1="0" x2="0" y2="1"><stop offset="0" stop-color="#fdfdfe"/><stop offset=".55" stop-color="#f5f6f8"/><stop offset="1" stop-color="#e4e7ec"/></linearGradient></defs><rect x=".5" y=".5" width="22.8" height="24.2" fill="url(#fg)" stroke="#a9b0b8" stroke-width="1"/><path d="M7.2 10.2H16.4L11.8 15.2Z" fill="#595959"/></svg>
<svg style="position:absolute;left:443.5px;top:551.0px;" width="23.8" height="25.2" viewBox="0 0 23.8 25.2"><defs><linearGradient id="fg" x1="0" y1="0" x2="0" y2="1"><stop offset="0" stop-color="#fdfdfe"/><stop offset=".55" stop-color="#f5f6f8"/><stop offset="1" stop-color="#e4e7ec"/></linearGradient></defs><rect x=".5" y=".5" width="22.8" height="24.2" fill="url(#fg)" stroke="#a9b0b8" stroke-width="1"/><path d="M3.6 15.6H12.2L7.9 20.2Z" fill="#595959"/><path d="M17.4 17.5V5.5M15 8L17.4 4.8L19.8 8" fill="none" stroke="#3b3b3b" stroke-width="1.3"/></svg>
<svg style="position:absolute;left:528.5px;top:551.0px;" width="23.8" height="25.2" viewBox="0 0 23.8 25.2"><defs><linearGradient id="fg" x1="0" y1="0" x2="0" y2="1"><stop offset="0" stop-color="#fdfdfe"/><stop offset=".55" stop-color="#f5f6f8"/><stop offset="1" stop-color="#e4e7ec"/></linearGradient></defs><rect x=".5" y=".5" width="22.8" height="24.2" fill="url(#fg)" stroke="#a9b0b8" stroke-width="1"/><path d="M7.2 10.2H16.4L11.8 15.2Z" fill="#595959"/></svg>
<svg style="position:absolute;left:614.2px;top:551.0px;" width="23.8" height="25.2" viewBox="0 0 23.8 25.2"><defs><linearGradient id="fg" x1="0" y1="0" x2="0" y2="1"><stop offset="0" stop-color="#fdfdfe"/><stop offset=".55" stop-color="#f5f6f8"/><stop offset="1" stop-color="#e4e7ec"/></linearGradient></defs><rect x=".5" y=".5" width="22.8" height="24.2" fill="url(#fg)" stroke="#a9b0b8" stroke-width="1"/><path d="M7.2 10.2H16.4L11.8 15.2Z" fill="#595959"/></svg>
<svg style="position:absolute;left:748.3px;top:551.0px;" width="23.8" height="25.2" viewBox="0 0 23.8 25.2"><defs><linearGradient id="fg" x1="0" y1="0" x2="0" y2="1"><stop offset="0" stop-color="#fdfdfe"/><stop offset=".55" stop-color="#f5f6f8"/><stop offset="1" stop-color="#e4e7ec"/></linearGradient></defs><rect x=".5" y=".5" width="22.8" height="24.2" fill="url(#fg)" stroke="#a9b0b8" stroke-width="1"/><path d="M7.2 10.2H16.4L11.8 15.2Z" fill="#595959"/></svg>
<svg style="position:absolute;left:817.5px;top:551.0px;" width="23.8" height="25.2" viewBox="0 0 23.8 25.2"><defs><linearGradient id="fg" x1="0" y1="0" x2="0" y2="1"><stop offset="0" stop-color="#fdfdfe"/><stop offset=".55" stop-color="#f5f6f8"/><stop offset="1" stop-color="#e4e7ec"/></linearGradient></defs><rect x=".5" y=".5" width="22.8" height="24.2" fill="url(#fg)" stroke="#a9b0b8" stroke-width="1"/><path d="M7.2 10.2H16.4L11.8 15.2Z" fill="#595959"/></svg>
<svg style="position:absolute;left:883.4px;top:551.0px;" width="23.8" height="25.2" viewBox="0 0 23.8 25.2"><defs><linearGradient id="fg" x1="0" y1="0" x2="0" y2="1"><stop offset="0" stop-color="#fdfdfe"/><stop offset=".55" stop-color="#f5f6f8"/><stop offset="1" stop-color="#e4e7ec"/></linearGradient></defs><rect x=".5" y=".5" width="22.8" height="24.2" fill="url(#fg)" stroke="#a9b0b8" stroke-width="1"/><path d="M7.2 10.2H16.4L11.8 15.2Z" fill="#595959"/></svg>
<svg style="position:absolute;left:963.3px;top:551.0px;" width="23.8" height="25.2" viewBox="0 0 23.8 25.2"><defs><linearGradient id="fg" x1="0" y1="0" x2="0" y2="1"><stop offset="0" stop-color="#fdfdfe"/><stop offset=".55" stop-color="#f5f6f8"/><stop offset="1" stop-color="#e4e7ec"/></linearGradient></defs><rect x=".5" y=".5" width="22.8" height="24.2" fill="url(#fg)" stroke="#a9b0b8" stroke-width="1"/><path d="M7.2 10.2H16.4L11.8 15.2Z" fill="#595959"/></svg>
<svg style="position:absolute;left:1041.2px;top:551.0px;" width="23.8" height="25.2" viewBox="0 0 23.8 25.2"><defs><linearGradient id="fg" x1="0" y1="0" x2="0" y2="1"><stop offset="0" stop-color="#fdfdfe"/><stop offset=".55" stop-color="#f5f6f8"/><stop offset="1" stop-color="#e4e7ec"/></linearGradient></defs><rect x=".5" y=".5" width="22.8" height="24.2" fill="url(#fg)" stroke="#a9b0b8" stroke-width="1"/><path d="M7.2 10.2H16.4L11.8 15.2Z" fill="#595959"/></svg>
<svg style="position:absolute;left:1117.4px;top:551.0px;" width="23.8" height="25.2" viewBox="0 0 23.8 25.2"><defs><linearGradient id="fg" x1="0" y1="0" x2="0" y2="1"><stop offset="0" stop-color="#fdfdfe"/><stop offset=".55" stop-color="#f5f6f8"/><stop offset="1" stop-color="#e4e7ec"/></linearGradient></defs><rect x=".5" y=".5" width="22.8" height="24.2" fill="url(#fg)" stroke="#a9b0b8" stroke-width="1"/><path d="M7.2 10.2H16.4L11.8 15.2Z" fill="#595959"/></svg>
<div style="position:absolute;left:17.150000000000002px;top:578.6px;width:64.0px;height:18.299999999999955px;background:#8db4e2;"></div>
<div style="position:absolute;left:82.25px;top:578.6px;width:67.6px;height:18.299999999999955px;background:#8db4e2;"></div>
<div style="position:absolute;left:150.95000000000002px;top:578.6px;width:117.89999999999995px;height:18.299999999999955px;background:#8db4e2;"></div>
<div style="position:absolute;left:269.95px;top:578.6px;width:74.89999999999998px;height:18.299999999999955px;background:#bfbfbf;"></div>
<div style="position:absolute;left:345.95px;top:578.6px;width:121.69999999999999px;height:18.299999999999955px;background:#bfbfbf;"></div>
<div style="position:absolute;left:468.75px;top:578.6px;width:84.10000000000002px;height:18.299999999999955px;background:#bfbfbf;"></div>
<div style="position:absolute;left:553.9499999999999px;top:578.6px;width:85.10000000000014px;height:18.299999999999955px;background:#c4d79b;"></div>
<div style="position:absolute;left:640.15px;top:578.6px;width:132.70000000000005px;height:18.299999999999955px;background:#c4d79b;"></div>
<div style="position:absolute;left:773.9499999999999px;top:578.6px;width:67.80000000000007px;height:18.299999999999955px;background:#c4d79b;"></div>
<div style="position:absolute;left:842.8499999999999px;top:578.6px;width:65.00000000000011px;height:18.299999999999955px;background:#c4d79b;"></div>
<div style="position:absolute;left:908.9499999999999px;top:578.6px;width:78.80000000000007px;height:18.299999999999955px;background:#c4d79b;"></div>
<div style="position:absolute;left:988.8499999999999px;top:578.6px;width:77.00000000000023px;height:18.299999999999955px;background:#c4d79b;"></div>
<div style="position:absolute;left:1066.95px;top:578.6px;width:74.90000000000009px;height:18.299999999999955px;background:#da9694;"></div>
<div style="position:absolute;left:1142.95px;top:578.6px;width:38.09999999999991px;height:18.299999999999955px;background:#da9694;"></div>
<span style="position:absolute;left:32.99px;top:581.82px;white-space:nowrap;line-height:1;font-family:'Liberation Sans', sans-serif;font-size:13.8px;font-weight:normal;font-style:normal;color:#111;transform-origin:0 0;transform:scaleX(1.0192);">#N/A</span>
<div style="position:absolute;left:554px;top:578.6px;width:85px;height:18.299999999999955px;overflow:hidden"><span style="position:absolute;left:1.59px;top:3.22px;white-space:nowrap;line-height:1;font-family:'Liberation Sans', sans-serif;font-size:13.8px;font-weight:normal;font-style:normal;color:#111;transform-origin:0 0;transform:scaleX(0.9971);">Sécurité</span></div>
<div style="position:absolute;left:640.5px;top:578.6px;width:132px;height:18.299999999999955px;overflow:hidden"><span style="position:absolute;left:1.69px;top:3.22px;white-space:nowrap;line-height:1;font-family:'Liberation Sans', sans-serif;font-size:13.8px;font-weight:normal;font-style:normal;color:#111;transform-origin:0 0;transform:scaleX(1.0250);">Incendie</span></div>
<div style="position:absolute;left:909px;top:578.6px;width:79px;height:18.299999999999955px;overflow:hidden"><span style="position:absolute;left:30.16px;top:3.22px;white-space:nowrap;line-height:1;font-family:'Liberation Sans', sans-serif;font-size:13.8px;font-weight:normal;font-style:normal;color:#111;transform-origin:0 0;transform:scaleX(0.9421);">1,5</span></div>
<div style="position:absolute;left:111.58432708688245px;top:582.75px;width:18.31345826235095px;height:11.0px;background:#fff;border-radius:2px 1px 1px 2px;"></div>
<div style="position:absolute;left:115.6px;top:582.9px;width:10.1px;height:0;border-top:1.4px dashed rgba(20,20,20,.6)"></div>
<div style="position:absolute;left:185.26405451448042px;top:583.05px;width:58.34752981260647px;height:10.399999999999999px;background:#fff;border-radius:1px 2px 3px 1px;transform:skewY(-1.4deg);"></div>
<div style="position:absolute;left:192.3px;top:583.1px;width:26.3px;height:0;border-top:1.4px dashed rgba(20,20,20,.6)"></div>
<div style="position:absolute;left:278.96081771720617px;top:582.75px;width:62.60647359454856px;height:11.0px;background:#fff;border-radius:1px 1px 3px 2px;transform:skewY(0.7deg);"></div>
<div style="position:absolute;left:292.7px;top:582.9px;width:47.0px;height:0;border-top:1.4px dashed rgba(20,20,20,.6)"></div>
<div style="position:absolute;left:348.38160136286206px;top:583.35px;width:40.03407155025553px;height:9.799999999999999px;background:#fff;border-radius:1px 1px 3px 2px;transform:skewY(0.7deg);"></div>
<div style="position:absolute;left:357.2px;top:583.5px;width:30.0px;height:0;border-top:1.4px dashed rgba(20,20,20,.6)"></div>
<div style="position:absolute;left:485.519591141397px;top:583.35px;width:44.71890971039181px;height:9.799999999999999px;background:#fff;border-radius:1px 2px 3px 1px;transform:skewY(-1.4deg);"></div>
<div style="position:absolute;left:490.9px;top:583.5px;width:20.1px;height:0;border-top:1.4px dashed rgba(20,20,20,.6)"></div>
<div style="position:absolute;left:839.3526405451448px;top:582.75px;width:49.40374787052815px;height:11.0px;background:#fff;border-radius:2px 2px 1px 1px;transform:skewY(1.4deg);"></div>
<div style="position:absolute;left:1015.2470187393526px;top:583.35px;width:56.64395229982961px;height:9.799999999999999px;background:#fff;border-radius:1px 2px 3px 1px;transform:skewY(-1.4deg);"></div>
<div style="position:absolute;left:1022.0px;top:583.5px;width:25.5px;height:0;border-top:1.4px dashed rgba(20,20,20,.6)"></div>
<div style="position:absolute;left:17.150000000000002px;top:598.1px;width:64.0px;height:19.399999999999977px;background:#8db4e2;"></div>
<div style="position:absolute;left:82.25px;top:598.1px;width:67.6px;height:19.399999999999977px;background:#8db4e2;"></div>
<div style="position:absolute;left:150.95000000000002px;top:598.1px;width:117.89999999999995px;height:19.399999999999977px;background:#8db4e2;"></div>
<div style="position:absolute;left:269.95px;top:598.1px;width:74.89999999999998px;height:19.399999999999977px;background:#bfbfbf;"></div>
<div style="position:absolute;left:345.95px;top:598.1px;width:121.69999999999999px;height:19.399999999999977px;background:#bfbfbf;"></div>
<div style="position:absolute;left:468.75px;top:598.1px;width:84.10000000000002px;height:19.399999999999977px;background:#bfbfbf;"></div>
<div style="position:absolute;left:553.9499999999999px;top:598.1px;width:85.10000000000014px;height:19.399999999999977px;background:#c4d79b;"></div>
<div style="position:absolute;left:640.15px;top:598.1px;width:132.70000000000005px;height:19.399999999999977px;background:#c4d79b;"></div>
<div style="position:absolute;left:773.9499999999999px;top:598.1px;width:67.80000000000007px;height:19.399999999999977px;background:#c4d79b;"></div>
<div style="position:absolute;left:842.8499999999999px;top:598.1px;width:65.00000000000011px;height:19.399999999999977px;background:#c4d79b;"></div>
<div style="position:absolute;left:908.9499999999999px;top:598.1px;width:78.80000000000007px;height:19.399999999999977px;background:#c4d79b;"></div>
<div style="position:absolute;left:988.8499999999999px;top:598.1px;width:77.00000000000023px;height:19.399999999999977px;background:#c4d79b;"></div>
<div style="position:absolute;left:1066.95px;top:598.1px;width:74.90000000000009px;height:19.399999999999977px;background:#da9694;"></div>
<div style="position:absolute;left:1142.95px;top:598.1px;width:38.09999999999991px;height:19.399999999999977px;background:#da9694;"></div>
<div style="position:absolute;left:554px;top:598.1px;width:85px;height:19.399999999999977px;overflow:hidden"><span style="position:absolute;left:1.59px;top:4.32px;white-space:nowrap;line-height:1;font-family:'Liberation Sans', sans-serif;font-size:13.8px;font-weight:normal;font-style:normal;color:#111;transform-origin:0 0;transform:scaleX(0.9971);">Sécurité</span></div>
<div style="position:absolute;left:640.5px;top:598.1px;width:132px;height:19.399999999999977px;overflow:hidden"><span style="position:absolute;left:1.69px;top:4.32px;white-space:nowrap;line-height:1;font-family:'Liberation Sans', sans-serif;font-size:13.8px;font-weight:normal;font-style:normal;color:#111;transform-origin:0 0;transform:scaleX(0.9920);">Risques chimiques</span></div>
<div style="position:absolute;left:909px;top:598.1px;width:79px;height:19.399999999999977px;overflow:hidden"><span style="position:absolute;left:35.66px;top:4.32px;white-space:nowrap;line-height:1;font-family:'Liberation Sans', sans-serif;font-size:13.8px;font-weight:normal;font-style:normal;color:#111;transform-origin:0 0;transform:scaleX(0.9205);">7</span></div>
<div style="position:absolute;left:112.86201022146508px;top:603.9px;width:18.313458262350935px;height:9.799999999999999px;background:#fff;border-radius:2px 2px 1px 1px;"></div>
<div style="position:absolute;left:186.11584327086882px;top:603.3px;width:53.236797274276px;height:11.0px;background:#fff;border-radius:1px 1px 3px 2px;transform:skewY(1.4deg);"></div>
<div style="position:absolute;left:197.8px;top:603.4px;width:39.9px;height:0;border-top:1.4px dashed rgba(20,20,20,.6)"></div>
<div style="position:absolute;left:275.9795570698467px;top:604.1999999999999px;width:66.86541737649065px;height:9.2px;background:#fff;border-radius:3px 2px 2px 1px;transform:skewY(0.7deg);"></div>
<div style="position:absolute;left:348.38160136286206px;top:603.5999999999999px;width:40.03407155025553px;height:10.399999999999999px;background:#fff;border-radius:1px 2px 3px 1px;transform:skewY(-0.7deg);"></div>
<div style="position:absolute;left:353.2px;top:603.7px;width:18.0px;height:0;border-top:1.4px dashed rgba(20,20,20,.6)"></div>
<div style="position:absolute;left:485.519591141397px;top:603.5999999999999px;width:42.58943781942082px;height:10.399999999999999px;background:#fff;border-radius:3px 2px 2px 1px;transform:skewY(0.7deg);"></div>
<div style="position:absolute;left:843.6115843270869px;top:603.9px;width:46.8483816013628px;height:9.799999999999999px;background:#fff;border-radius:1px 2px 3px 1px;transform:skewY(-0.7deg);"></div>
<div style="position:absolute;left:849.2px;top:604.0px;width:21.1px;height:0;border-top:1.4px dashed rgba(20,20,20,.6)"></div>
<div style="position:absolute;left:1008.8586030664396px;top:603.9px;width:57.49574105621787px;height:9.799999999999999px;background:#fff;border-radius:1px 2px 3px 1px;transform:skewY(-0.7deg);"></div>
<div style="position:absolute;left:1015.8px;top:604.0px;width:25.9px;height:0;border-top:1.4px dashed rgba(20,20,20,.6)"></div>
<div style="position:absolute;left:17.150000000000002px;top:618.7px;width:64.0px;height:19.699999999999932px;background:#8db4e2;"></div>
<div style="position:absolute;left:82.25px;top:618.7px;width:67.6px;height:19.699999999999932px;background:#8db4e2;"></div>
<div style="position:absolute;left:150.95000000000002px;top:618.7px;width:117.89999999999995px;height:19.699999999999932px;background:#8db4e2;"></div>
<div style="position:absolute;left:269.95px;top:618.7px;width:74.89999999999998px;height:19.699999999999932px;background:#bfbfbf;"></div>
<div style="position:absolute;left:345.95px;top:618.7px;width:121.69999999999999px;height:19.699999999999932px;background:#bfbfbf;"></div>
<div style="position:absolute;left:468.75px;top:618.7px;width:84.10000000000002px;height:19.699999999999932px;background:#bfbfbf;"></div>
<div style="position:absolute;left:553.9499999999999px;top:618.7px;width:85.10000000000014px;height:19.699999999999932px;background:#c4d79b;"></div>
<div style="position:absolute;left:640.15px;top:618.7px;width:132.70000000000005px;height:19.699999999999932px;background:#c4d79b;"></div>
<div style="position:absolute;left:773.9499999999999px;top:618.7px;width:67.80000000000007px;height:19.699999999999932px;background:#c4d79b;"></div>
<div style="position:absolute;left:842.8499999999999px;top:618.7px;width:65.00000000000011px;height:19.699999999999932px;background:#c4d79b;"></div>
<div style="position:absolute;left:908.9499999999999px;top:618.7px;width:78.80000000000007px;height:19.699999999999932px;background:#c4d79b;"></div>
<div style="position:absolute;left:988.8499999999999px;top:618.7px;width:77.00000000000023px;height:19.699999999999932px;background:#c4d79b;"></div>
<div style="position:absolute;left:1066.95px;top:618.7px;width:74.90000000000009px;height:19.699999999999932px;background:#da9694;"></div>
<div style="position:absolute;left:1142.95px;top:618.7px;width:38.09999999999991px;height:19.699999999999932px;background:#da9694;"></div>
<div style="position:absolute;left:554px;top:618.7px;width:85px;height:19.699999999999932px;overflow:hidden"><span style="position:absolute;left:1.59px;top:4.62px;white-space:nowrap;line-height:1;font-family:'Liberation Sans', sans-serif;font-size:13.8px;font-weight:normal;font-style:normal;color:#111;transform-origin:0 0;transform:scaleX(0.9971);">Sécurité</span></div>
<div style="position:absolute;left:640.5px;top:618.7px;width:132px;height:19.699999999999932px;overflow:hidden"><span style="position:absolute;left:1.69px;top:4.62px;white-space:nowrap;line-height:1;font-family:'Liberation Sans', sans-serif;font-size:13.8px;font-weight:normal;font-style:normal;color:#111;transform-origin:0 0;transform:scaleX(0.9780);">Recyclage pont rou</span></div>
<div style="position:absolute;left:909px;top:618.7px;width:79px;height:19.699999999999932px;overflow:hidden"><span style="position:absolute;left:35.66px;top:4.62px;white-space:nowrap;line-height:1;font-family:'Liberation Sans', sans-serif;font-size:13.8px;font-weight:normal;font-style:normal;color:#111;transform-origin:0 0;transform:scaleX(0.9205);">7</span></div>
<div style="position:absolute;left:989px;top:618.7px;width:77px;height:19.699999999999932px;overflow:hidden"><span style="position:absolute;left:69.19px;top:4.62px;white-space:nowrap;line-height:1;font-family:'Liberation Sans', sans-serif;font-size:13.8px;font-weight:normal;font-style:normal;color:#111;transform-origin:0 0;transform:scaleX(0.8034);">€</span></div>
<div style="position:absolute;left:98.80749574105623px;top:625.4499999999999px;width:36.62691652470188px;height:9.2px;background:#fff;border-radius:3px 2px 2px 1px;transform:skewY(1.4deg);"></div>
<div style="position:absolute;left:182.28279386712097px;top:625.4499999999999px;width:52.81090289608176px;height:9.2px;background:#fff;border-radius:2px 1px 1px 2px;transform:skewY(0.7deg);"></div>
<div style="position:absolute;left:193.9px;top:625.5px;width:29.0px;height:0;border-top:1.4px dashed rgba(20,20,20,.6)"></div>
<div style="position:absolute;left:278.96081771720617px;top:625.15px;width:61.75468483816013px;height:9.799999999999999px;background:#fff;border-radius:3px 2px 2px 1px;transform:skewY(1.4deg);"></div>
<div style="position:absolute;left:348.38160136286206px;top:624.55px;width:40.03407155025553px;height:11.0px;background:#fff;border-radius:3px 2px 2px 1px;transform:skewY(1.4deg);"></div>
<div style="position:absolute;left:488.92674616695064px;top:624.55px;width:45.57069846678024px;height:11.0px;background:#fff;border-radius:3px 2px 2px 1px;transform:skewY(1.4deg);"></div>
<div style="position:absolute;left:844.8892674616695px;top:624.8499999999999px;width:46.84838160136292px;height:10.399999999999999px;background:#fff;border-radius:1px 1px 3px 2px;transform:skewY(-1.4deg);"></div>
<div style="position:absolute;left:855.2px;top:624.9px;width:35.1px;height:0;border-top:1.4px dashed rgba(20,20,20,.6)"></div>
<div style="position:absolute;left:1008.8586030664396px;top:624.8499999999999px;width:48.97785349233391px;height:10.399999999999999px;background:#fff;border-radius:3px 2px 2px 1px;transform:skewY(1.4deg);"></div>
<div style="position:absolute;left:17.150000000000002px;top:639.6px;width:64.0px;height:19.5px;background:#8db4e2;"></div>
<div style="position:absolute;left:82.25px;top:639.6px;width:67.6px;height:19.5px;background:#8db4e2;"></div>
<div style="position:absolute;left:150.95000000000002px;top:639.6px;width:117.89999999999995px;height:19.5px;background:#8db4e2;"></div>
<div style="position:absolute;left:269.95px;top:639.6px;width:74.89999999999998px;height:19.5px;background:#bfbfbf;"></div>
<div style="position:absolute;left:345.95px;top:639.6px;width:121.69999999999999px;height:19.5px;background:#bfbfbf;"></div>
<div style="position:absolute;left:468.75px;top:639.6px;width:84.10000000000002px;height:19.5px;background:#bfbfbf;"></div>
<div style="position:absolute;left:553.9499999999999px;top:639.6px;width:85.10000000000014px;height:19.5px;background:#c4d79b;"></div>
<div style="position:absolute;left:640.15px;top:639.6px;width:132.70000000000005px;height:19.5px;background:#c4d79b;"></div>
<div style="position:absolute;left:773.9499999999999px;top:639.6px;width:67.80000000000007px;height:19.5px;background:#c4d79b;"></div>
<div style="position:absolute;left:842.8499999999999px;top:639.6px;width:65.00000000000011px;height:19.5px;background:#c4d79b;"></div>
<div style="position:absolute;left:908.9499999999999px;top:639.6px;width:78.80000000000007px;height:19.5px;background:#c4d79b;"></div>
<div style="position:absolute;left:988.8499999999999px;top:639.6px;width:77.00000000000023px;height:19.5px;background:#c4d79b;"></div>
<div style="position:absolute;left:1066.95px;top:639.6px;width:74.90000000000009px;height:19.5px;background:#da9694;"></div>
<div style="position:absolute;left:1142.95px;top:639.6px;width:38.09999999999991px;height:19.5px;background:#da9694;"></div>
<div style="position:absolute;left:554px;top:639.6px;width:85px;height:19.5px;overflow:hidden"><span style="position:absolute;left:1.59px;top:4.42px;white-space:nowrap;line-height:1;font-family:'Liberation Sans', sans-serif;font-size:13.8px;font-weight:normal;font-style:normal;color:#111;transform-origin:0 0;transform:scaleX(0.9971);">Sécurité</span></div>
<div style="position:absolute;left:640.5px;top:639.6px;width:132px;height:19.5px;overflow:hidden"><span style="position:absolute;left:1.69px;top:4.42px;white-space:nowrap;line-height:1;font-family:'Liberation Sans', sans-serif;font-size:13.8px;font-weight:normal;font-style:normal;color:#111;transform-origin:0 0;transform:scaleX(1.0250);">Incendie</span></div>
<div style="position:absolute;left:909px;top:639.6px;width:79px;height:19.5px;overflow:hidden"><span style="position:absolute;left:30.16px;top:4.42px;white-space:nowrap;line-height:1;font-family:'Liberation Sans', sans-serif;font-size:13.8px;font-weight:normal;font-style:normal;color:#111;transform-origin:0 0;transform:scaleX(0.9421);">1,5</span></div>
<div style="position:absolute;left:989px;top:639.6px;width:77px;height:19.5px;overflow:hidden"><span style="position:absolute;left:69.19px;top:4.42px;white-space:nowrap;line-height:1;font-family:'Liberation Sans', sans-serif;font-size:13.8px;font-weight:normal;font-style:normal;color:#111;transform-origin:0 0;transform:scaleX(0.8034);">€</span></div>
<div style="position:absolute;left:102.21465076660989px;top:644.95px;width:27.68313458262351px;height:9.799999999999999px;background:#fff;border-radius:1px 1px 3px 2px;"></div>
<div style="position:absolute;left:108.3px;top:645.1px;width:20.8px;height:0;border-top:1.4px dashed rgba(20,20,20,.6)"></div>
<div style="position:absolute;left:183.9863713798978px;top:644.95px;width:51.107325383304925px;height:9.799999999999999px;background:#fff;border-radius:2px 2px 1px 1px;transform:skewY(0.0deg);"></div>
<div style="position:absolute;left:278.96081771720617px;top:644.65px;width:57.49574105621804px;height:10.399999999999999px;background:#fff;border-radius:2px 2px 1px 1px;transform:skewY(0.0deg);"></div>
<div style="position:absolute;left:351.3628620102215px;top:644.95px;width:108.60306643952299px;height:9.799999999999999px;background:#fff;border-radius:3px 2px 2px 1px;transform:skewY(-1.4deg);"></div>
<div style="position:absolute;left:481.2606473594549px;top:644.35px;width:68.14310051107327px;height:11.0px;background:#fff;border-radius:3px 2px 2px 1px;transform:skewY(-1.4deg);"></div>
<div style="position:absolute;left:844.8892674616695px;top:644.35px;width:42.58943781942071px;height:11.0px;background:#fff;border-radius:1px 2px 3px 1px;transform:skewY(0.7deg);"></div>
<div style="position:absolute;left:850.0px;top:644.5px;width:19.2px;height:0;border-top:1.4px dashed rgba(20,20,20,.6)"></div>
<div style="position:absolute;left:1015.2470187393526px;top:645.25px;width:46.84838160136292px;height:9.2px;background:#fff;border-radius:2px 1px 1px 2px;transform:skewY(1.4deg);"></div>
<div style="position:absolute;left:1025.6px;top:645.4px;width:25.8px;height:0;border-top:1.4px dashed rgba(20,20,20,.6)"></div>
<div style="position:absolute;left:17.150000000000002px;top:660.3000000000001px;width:64.0px;height:19.399999999999864px;background:#8db4e2;"></div>
<div style="position:absolute;left:82.25px;top:660.3000000000001px;width:67.6px;height:19.399999999999864px;background:#8db4e2;"></div>
<div style="position:absolute;left:150.95000000000002px;top:660.3000000000001px;width:117.89999999999995px;height:19.399999999999864px;background:#8db4e2;"></div>
<div style="position:absolute;left:269.95px;top:660.3000000000001px;width:74.89999999999998px;height:19.399999999999864px;background:#bfbfbf;"></div>
<div style="position:absolute;left:345.95px;top:660.3000000000001px;width:121.69999999999999px;height:19.399999999999864px;background:#bfbfbf;"></div>
<div style="position:absolute;left:468.75px;top:660.3000000000001px;width:84.10000000000002px;height:19.399999999999864px;background:#bfbfbf;"></div>
<div style="position:absolute;left:553.9499999999999px;top:660.3000000000001px;width:85.10000000000014px;height:19.399999999999864px;background:#c4d79b;"></div>
<div style="position:absolute;left:640.15px;top:660.3000000000001px;width:132.70000000000005px;height:19.399999999999864px;background:#c4d79b;"></div>
<div style="position:absolute;left:773.9499999999999px;top:660.3000000000001px;width:67.80000000000007px;height:19.399999999999864px;background:#c4d79b;"></div>
<div style="position:absolute;left:842.8499999999999px;top:660.3000000000001px;width:65.00000000000011px;height:19.399999999999864px;background:#c4d79b;"></div>
<div style="position:absolute;left:908.9499999999999px;top:660.3000000000001px;width:78.80000000000007px;height:19.399999999999864px;background:#c4d79b;"></div>
<div style="position:absolute;left:988.8499999999999px;top:660.3000000000001px;width:77.00000000000023px;height:19.399999999999864px;background:#c4d79b;"></div>
<div style="position:absolute;left:1066.95px;top:660.3000000000001px;width:74.90000000000009px;height:19.399999999999864px;background:#da9694;"></div>
<div style="position:absolute;left:1142.95px;top:660.3000000000001px;width:38.09999999999991px;height:19.399999999999864px;background:#da9694;"></div>
<div style="position:absolute;left:554px;top:660.3000000000001px;width:85px;height:19.399999999999864px;overflow:hidden"><span style="position:absolute;left:1.59px;top:4.32px;white-space:nowrap;line-height:1;font-family:'Liberation Sans', sans-serif;font-size:13.8px;font-weight:normal;font-style:normal;color:#111;transform-origin:0 0;transform:scaleX(0.9971);">Sécurité</span></div>
<div style="position:absolute;left:640.5px;top:660.3000000000001px;width:132px;height:19.399999999999864px;overflow:hidden"><span style="position:absolute;left:1.69px;top:4.32px;white-space:nowrap;line-height:1;font-family:'Liberation Sans', sans-serif;font-size:13.8px;font-weight:normal;font-style:normal;color:#111;transform-origin:0 0;transform:scaleX(0.9920);">Risques chimiques</span></div>
<div style="position:absolute;left:909px;top:660.3000000000001px;width:79px;height:19.399999999999864px;overflow:hidden"><span style="position:absolute;left:35.66px;top:4.32px;white-space:nowrap;line-height:1;font-family:'Liberation Sans', sans-serif;font-size:13.8px;font-weight:normal;font-style:normal;color:#111;transform-origin:0 0;transform:scaleX(0.9205);">7</span></div>
<div style="position:absolute;left:104.34412265758093px;top:665.8px;width:28.534923339011925px;height:10.399999999999999px;background:#fff;border-radius:3px 2px 2px 1px;"></div>
<div style="position:absolute;left:186.11584327086882px;top:665.8px;width:60.90289608177173px;height:10.399999999999999px;background:#fff;border-radius:2px 2px 1px 1px;transform:skewY(0.7deg);"></div>
<div style="position:absolute;left:277.68313458262355px;top:665.5px;width:58.773424190800654px;height:11.0px;background:#fff;border-radius:1px 2px 3px 1px;transform:skewY(1.4deg);"></div>
<div style="position:absolute;left:284.7px;top:665.6px;width:26.4px;height:0;border-top:1.4px dashed rgba(20,20,20,.6)"></div>
<div style="position:absolute;left:349.23339011925043px;top:666.1px;width:114.99148211243613px;height:9.799999999999999px;background:#fff;border-radius:3px 2px 2px 1px;transform:skewY(-0.7deg);"></div>
<div style="position:absolute;left:480.40885860306645px;top:666.4px;width:66.8654173764906px;height:9.2px;background:#fff;border-radius:1px 1px 3px 2px;transform:skewY(0.0deg);"></div>
<div style="position:absolute;left:495.1px;top:666.5px;width:50.1px;height:0;border-top:1.4px dashed rgba(20,20,20,.6)"></div>
<div style="position:absolute;left:843.6115843270869px;top:666.4px;width:50.25553662691652px;height:9.2px;background:#fff;border-radius:2px 1px 1px 2px;transform:skewY(-1.4deg);"></div>
<div style="position:absolute;left:854.7px;top:666.5px;width:27.6px;height:0;border-top:1.4px dashed rgba(20,20,20,.6)"></div>
<div style="position:absolute;left:1008.8586030664396px;top:666.4px;width:57.49574105621787px;height:9.2px;background:#fff;border-radius:2px 1px 1px 2px;transform:skewY(-1.4deg);"></div>
<div style="position:absolute;left:1021.5px;top:666.5px;width:31.6px;height:0;border-top:1.4px dashed rgba(20,20,20,.6)"></div>
<div style="position:absolute;left:17.150000000000002px;top:680.9px;width:64.0px;height:18.899999999999977px;background:#8db4e2;"></div>
<div style="position:absolute;left:82.25px;top:680.9px;width:67.6px;height:18.899999999999977px;background:#8db4e2;"></div>
<div style="position:absolute;left:150.95000000000002px;top:680.9px;width:117.89999999999995px;height:18.899999999999977px;background:#8db4e2;"></div>
<div style="position:absolute;left:269.95px;top:680.9px;width:74.89999999999998px;height:18.899999999999977px;background:#bfbfbf;"></div>
<div style="position:absolute;left:345.95px;top:680.9px;width:121.69999999999999px;height:18.899999999999977px;background:#bfbfbf;"></div>
<div style="position:absolute;left:468.75px;top:680.9px;width:84.10000000000002px;height:18.899999999999977px;background:#bfbfbf;"></div>
<div style="position:absolute;left:553.9499999999999px;top:680.9px;width:85.10000000000014px;height:18.899999999999977px;background:#c4d79b;"></div>
<div style="position:absolute;left:640.15px;top:680.9px;width:132.70000000000005px;height:18.899999999999977px;background:#c4d79b;"></div>
<div style="position:absolute;left:773.9499999999999px;top:680.9px;width:67.80000000000007px;height:18.899999999999977px;background:#c4d79b;"></div>
<div style="position:absolute;left:842.8499999999999px;top:680.9px;width:65.00000000000011px;height:18.899999999999977px;background:#c4d79b;"></div>
<div style="position:absolute;left:908.9499999999999px;top:680.9px;width:78.80000000000007px;height:18.899999999999977px;background:#c4d79b;"></div>
<div style="position:absolute;left:988.8499999999999px;top:680.9px;width:77.00000000000023px;height:18.899999999999977px;background:#c4d79b;"></div>
<div style="position:absolute;left:1066.95px;top:680.9px;width:74.90000000000009px;height:18.899999999999977px;background:#da9694;"></div>
<div style="position:absolute;left:1142.95px;top:680.9px;width:38.09999999999991px;height:18.899999999999977px;background:#da9694;"></div>
<div style="position:absolute;left:554px;top:680.9px;width:85px;height:18.899999999999977px;overflow:hidden"><span style="position:absolute;left:1.59px;top:3.82px;white-space:nowrap;line-height:1;font-family:'Liberation Sans', sans-serif;font-size:13.8px;font-weight:normal;font-style:normal;color:#111;transform-origin:0 0;transform:scaleX(0.9971);">Sécurité</span></div>
<div style="position:absolute;left:640.5px;top:680.9px;width:132px;height:18.899999999999977px;overflow:hidden"><span style="position:absolute;left:1.69px;top:3.82px;white-space:nowrap;line-height:1;font-family:'Liberation Sans', sans-serif;font-size:13.8px;font-weight:normal;font-style:normal;color:#111;transform-origin:0 0;transform:scaleX(1.0250);">Incendie</span></div>
<div style="position:absolute;left:909px;top:680.9px;width:79px;height:18.899999999999977px;overflow:hidden"><span style="position:absolute;left:30.16px;top:3.82px;white-space:nowrap;line-height:1;font-family:'Liberation Sans', sans-serif;font-size:13.8px;font-weight:normal;font-style:normal;color:#111;transform-origin:0 0;transform:scaleX(0.9421);">1,5</span></div>
<div style="position:absolute;left:989px;top:680.9px;width:77px;height:18.899999999999977px;overflow:hidden"><span style="position:absolute;left:69.19px;top:3.82px;white-space:nowrap;line-height:1;font-family:'Liberation Sans', sans-serif;font-size:13.8px;font-weight:normal;font-style:normal;color:#111;transform-origin:0 0;transform:scaleX(0.8034);">€</span></div>
<div style="position:absolute;left:102.21465076660989px;top:686.3499999999999px;width:26.83134582623508px;height:11.0px;background:#fff;border-radius:3px 2px 2px 1px;"></div>
<div style="position:absolute;left:186.11584327086882px;top:686.3499999999999px;width:51.10732538330495px;height:11.0px;background:#fff;border-radius:2px 1px 1px 2px;transform:skewY(-0.7deg);"></div>
<div style="position:absolute;left:197.4px;top:686.4px;width:28.1px;height:0;border-top:1.4px dashed rgba(20,20,20,.6)"></div>
<div style="position:absolute;left:278.96081771720617px;top:687.2499999999999px;width:57.49574105621804px;height:9.2px;background:#fff;border-radius:1px 1px 3px 2px;transform:skewY(0.7deg);"></div>
<div style="position:absolute;left:291.6px;top:687.3px;width:43.1px;height:0;border-top:1.4px dashed rgba(20,20,20,.6)"></div>
<div style="position:absolute;left:350.08517887563886px;top:686.3499999999999px;width:75.80919931856903px;height:11.0px;background:#fff;border-radius:1px 2px 3px 1px;transform:skewY(-1.4deg);"></div>
<div style="position:absolute;left:359.2px;top:686.4px;width:34.1px;height:0;border-top:1.4px dashed rgba(20,20,20,.6)"></div>
<div style="position:absolute;left:488.92674616695064px;top:686.6499999999999px;width:45.57069846678024px;height:10.399999999999999px;background:#fff;border-radius:1px 1px 3px 2px;transform:skewY(0.7deg);"></div>
<div style="position:absolute;left:499.0px;top:686.7px;width:34.2px;height:0;border-top:1.4px dashed rgba(20,20,20,.6)"></div>
<div style="position:absolute;left:840.6303236797274px;top:686.9499999999999px;width:46.8483816013628px;height:9.799999999999999px;background:#fff;border-radius:1px 2px 3px 1px;transform:skewY(-1.4deg);"></div>
<div style="position:absolute;left:846.3px;top:687.0px;width:21.1px;height:0;border-top:1.4px dashed rgba(20,20,20,.6)"></div>
<div style="position:absolute;left:1019.5059625212948px;top:686.6499999999999px;width:44.7189097103917px;height:10.399999999999999px;background:#fff;border-radius:2px 2px 1px 1px;transform:skewY(1.4deg);"></div>
<div style="position:absolute;left:17.150000000000002px;top:701.0px;width:64.0px;height:18.699999999999932px;background:#8db4e2;"></div>
<div style="position:absolute;left:82.25px;top:701.0px;width:67.6px;height:18.699999999999932px;background:#8db4e2;"></div>
<div style="position:absolute;left:150.95000000000002px;top:701.0px;width:117.89999999999995px;height:18.699999999999932px;background:#8db4e2;"></div>
<div style="position:absolute;left:269.95px;top:701.0px;width:74.89999999999998px;height:18.699999999999932px;background:#bfbfbf;"></div>
<div style="position:absolute;left:345.95px;top:701.0px;width:121.69999999999999px;height:18.699999999999932px;background:#bfbfbf;"></div>
<div style="position:absolute;left:468.75px;top:701.0px;width:84.10000000000002px;height:18.699999999999932px;background:#bfbfbf;"></div>
<div style="position:absolute;left:553.9499999999999px;top:701.0px;width:85.10000000000014px;height:18.699999999999932px;background:#c4d79b;"></div>
<div style="position:absolute;left:640.15px;top:701.0px;width:132.70000000000005px;height:18.699999999999932px;background:#c4d79b;"></div>
<div style="position:absolute;left:773.9499999999999px;top:701.0px;width:67.80000000000007px;height:18.699999999999932px;background:#c4d79b;"></div>
<div style="position:absolute;left:842.8499999999999px;top:701.0px;width:65.00000000000011px;height:18.699999999999932px;background:#c4d79b;"></div>
<div style="position:absolute;left:908.9499999999999px;top:701.0px;width:78.80000000000007px;height:18.699999999999932px;background:#c4d79b;"></div>
<div style="position:absolute;left:988.8499999999999px;top:701.0px;width:77.00000000000023px;height:18.699999999999932px;background:#c4d79b;"></div>
<div style="position:absolute;left:1066.95px;top:701.0px;width:74.90000000000009px;height:18.699999999999932px;background:#da9694;"></div>
<div style="position:absolute;left:1142.95px;top:701.0px;width:38.09999999999991px;height:18.699999999999932px;background:#da9694;"></div>
<div style="position:absolute;left:554px;top:701.0px;width:85px;height:18.699999999999932px;overflow:hidden"><span style="position:absolute;left:1.59px;top:3.62px;white-space:nowrap;line-height:1;font-family:'Liberation Sans', sans-serif;font-size:13.8px;font-weight:normal;font-style:normal;color:#111;transform-origin:0 0;transform:scaleX(0.9971);">Sécurité</span></div>
<div style="position:absolute;left:640.5px;top:701.0px;width:132px;height:18.699999999999932px;overflow:hidden"><span style="position:absolute;left:1.69px;top:3.62px;white-space:nowrap;line-height:1;font-family:'Liberation Sans', sans-serif;font-size:13.8px;font-weight:normal;font-style:normal;color:#111;transform-origin:0 0;transform:scaleX(0.9920);">Risques chimiques</span></div>
<div style="position:absolute;left:909px;top:701.0px;width:79px;height:18.699999999999932px;overflow:hidden"><span style="position:absolute;left:35.66px;top:3.62px;white-space:nowrap;line-height:1;font-family:'Liberation Sans', sans-serif;font-size:13.8px;font-weight:normal;font-style:normal;color:#111;transform-origin:0 0;transform:scaleX(0.9205);">7</span></div>
<div style="position:absolute;left:989px;top:701.0px;width:77px;height:18.699999999999932px;overflow:hidden"><span style="position:absolute;left:69.19px;top:3.62px;white-space:nowrap;line-height:1;font-family:'Liberation Sans', sans-serif;font-size:13.8px;font-weight:normal;font-style:normal;color:#111;transform-origin:0 0;transform:scaleX(0.8034);">€</span></div>
<div style="position:absolute;left:104.34412265758093px;top:706.2499999999999px;width:23.42419080068143px;height:9.2px;background:#fff;border-radius:2px 1px 1px 2px;"></div>
<div style="position:absolute;left:109.5px;top:706.3px;width:12.9px;height:0;border-top:1.4px dashed rgba(20,20,20,.6)"></div>
<div style="position:absolute;left:183.9863713798978px;top:706.2499999999999px;width:51.107325383304925px;height:9.2px;background:#fff;border-radius:1px 2px 3px 1px;transform:skewY(-0.7deg);"></div>
<div style="position:absolute;left:190.1px;top:706.3px;width:23.0px;height:0;border-top:1.4px dashed rgba(20,20,20,.6)"></div>
<div style="position:absolute;left:278.96081771720617px;top:705.9499999999999px;width:57.49574105621804px;height:9.799999999999999px;background:#fff;border-radius:1px 2px 3px 1px;transform:skewY(-0.7deg);"></div>
<div style="position:absolute;left:285.9px;top:706.0px;width:25.9px;height:0;border-top:1.4px dashed rgba(20,20,20,.6)"></div>
<div style="position:absolute;left:349.23339011925043px;top:705.3499999999999px;width:80.06814310051112px;height:11.0px;background:#fff;border-radius:2px 1px 1px 2px;transform:skewY(0.0deg);"></div>
<div style="position:absolute;left:366.8px;top:705.4px;width:44.0px;height:0;border-top:1.4px dashed rgba(20,20,20,.6)"></div>
<div style="position:absolute;left:487.649063032368px;top:705.3499999999999px;width:48.12606473594548px;height:11.0px;background:#fff;border-radius:2px 2px 1px 1px;transform:skewY(-1.4deg);"></div>
<div style="position:absolute;left:844.8892674616695px;top:705.6499999999999px;width:49.82964224872228px;height:10.399999999999999px;background:#fff;border-radius:2px 1px 1px 2px;transform:skewY(0.0deg);"></div>
<div style="position:absolute;left:855.9px;top:705.7px;width:27.4px;height:0;border-top:1.4px dashed rgba(20,20,20,.6)"></div>
<div style="position:absolute;left:1010.9880749574106px;top:705.6499999999999px;width:46.84838160136292px;height:10.399999999999999px;background:#fff;border-radius:3px 2px 2px 1px;transform:skewY(0.7deg);"></div>
<div style="position:absolute;left:17.150000000000002px;top:720.9px;width:64.0px;height:18.700000000000045px;background:#8db4e2;"></div>
<div style="position:absolute;left:82.25px;top:720.9px;width:67.6px;height:18.700000000000045px;background:#8db4e2;"></div>
<div style="position:absolute;left:150.95000000000002px;top:720.9px;width:117.89999999999995px;height:18.700000000000045px;background:#8db4e2;"></div>
<div style="position:absolute;left:269.95px;top:720.9px;width:74.89999999999998px;height:18.700000000000045px;background:#bfbfbf;"></div>
<div style="position:absolute;left:345.95px;top:720.9px;width:121.69999999999999px;height:18.700000000000045px;background:#bfbfbf;"></div>
<div style="position:absolute;left:468.75px;top:720.9px;width:84.10000000000002px;height:18.700000000000045px;background:#bfbfbf;"></div>
<div style="position:absolute;left:553.9499999999999px;top:720.9px;width:85.10000000000014px;height:18.700000000000045px;background:#c4d79b;"></div>
<div style="position:absolute;left:640.15px;top:720.9px;width:132.70000000000005px;height:18.700000000000045px;background:#c4d79b;"></div>
<div style="position:absolute;left:773.9499999999999px;top:720.9px;width:67.80000000000007px;height:18.700000000000045px;background:#c4d79b;"></div>
<div style="position:absolute;left:842.8499999999999px;top:720.9px;width:65.00000000000011px;height:18.700000000000045px;background:#c4d79b;"></div>
<div style="position:absolute;left:908.9499999999999px;top:720.9px;width:78.80000000000007px;height:18.700000000000045px;background:#c4d79b;"></div>
<div style="position:absolute;left:988.8499999999999px;top:720.9px;width:77.00000000000023px;height:18.700000000000045px;background:#c4d79b;"></div>
<div style="position:absolute;left:1066.95px;top:720.9px;width:74.90000000000009px;height:18.700000000000045px;background:#da9694;"></div>
<div style="position:absolute;left:1142.95px;top:720.9px;width:38.09999999999991px;height:18.700000000000045px;background:#da9694;"></div>
<div style="position:absolute;left:554px;top:720.9px;width:85px;height:18.700000000000045px;overflow:hidden"><span style="position:absolute;left:1.59px;top:3.62px;white-space:nowrap;line-height:1;font-family:'Liberation Sans', sans-serif;font-size:13.8px;font-weight:normal;font-style:normal;color:#111;transform-origin:0 0;transform:scaleX(0.9971);">Sécurité</span></div>
<div style="position:absolute;left:640.5px;top:720.9px;width:132px;height:18.700000000000045px;overflow:hidden"><span style="position:absolute;left:1.69px;top:3.62px;white-space:nowrap;line-height:1;font-family:'Liberation Sans', sans-serif;font-size:13.8px;font-weight:normal;font-style:normal;color:#111;transform-origin:0 0;transform:scaleX(0.7995);">SEBTR</span></div>
<div style="position:absolute;left:909px;top:720.9px;width:79px;height:18.700000000000045px;overflow:hidden"><span style="position:absolute;left:26.76px;top:3.62px;white-space:nowrap;line-height:1;font-family:'Liberation Sans', sans-serif;font-size:13.8px;font-weight:normal;font-style:normal;color:#111;transform-origin:0 0;transform:scaleX(0.9262);">10,5</span></div>
<div style="position:absolute;left:989px;top:720.9px;width:77px;height:18.700000000000045px;overflow:hidden"><span style="position:absolute;left:69.19px;top:3.62px;white-space:nowrap;line-height:1;font-family:'Liberation Sans', sans-serif;font-size:13.8px;font-weight:normal;font-style:normal;color:#111;transform-origin:0 0;transform:scaleX(0.8034);">€</span></div>
<div style="position:absolute;left:97.1039182282794px;top:726.65px;width:37.05281090289607px;height:9.2px;background:#fff;border-radius:2px 1px 1px 2px;transform:skewY(0.7deg);"></div>
<div style="position:absolute;left:105.3px;top:726.8px;width:20.4px;height:0;border-top:1.4px dashed rgba(20,20,20,.6)"></div>
<div style="position:absolute;left:187.39352640545147px;top:726.35px;width:46.84838160136286px;height:9.799999999999999px;background:#fff;border-radius:2px 1px 1px 2px;transform:skewY(0.7deg);"></div>
<div style="position:absolute;left:197.7px;top:726.5px;width:25.8px;height:0;border-top:1.4px dashed rgba(20,20,20,.6)"></div>
<div style="position:absolute;left:278.96081771720617px;top:726.05px;width:56.64395229982961px;height:10.399999999999999px;background:#fff;border-radius:3px 2px 2px 1px;transform:skewY(1.4deg);"></div>
<div style="position:absolute;left:351.3628620102215px;top:726.35px;width:46.84838160136286px;height:9.799999999999999px;background:#fff;border-radius:1px 2px 3px 1px;transform:skewY(0.0deg);"></div>
<div style="position:absolute;left:357.0px;top:726.5px;width:21.1px;height:0;border-top:1.4px dashed rgba(20,20,20,.6)"></div>
<div style="position:absolute;left:489.77853492333907px;top:726.65px;width:45.99659284497443px;height:9.2px;background:#fff;border-radius:1px 1px 3px 2px;transform:skewY(-1.4deg);"></div>
<div style="position:absolute;left:499.9px;top:726.8px;width:34.5px;height:0;border-top:1.4px dashed rgba(20,20,20,.6)"></div>
<div style="position:absolute;left:846.1669505962521px;top:725.75px;width:28.534923339011925px;height:11.0px;background:#fff;border-radius:1px 2px 3px 1px;"></div>
<div style="position:absolute;left:849.6px;top:725.9px;width:12.8px;height:0;border-top:1.4px dashed rgba(20,20,20,.6)"></div>
<div style="position:absolute;left:1002.4701873935264px;top:726.05px;width:58.34752981260635px;height:10.399999999999999px;background:#fff;border-radius:2px 1px 1px 2px;transform:skewY(0.7deg);"></div>
<div style="position:absolute;left:1015.3px;top:726.1px;width:32.1px;height:0;border-top:1.4px dashed rgba(20,20,20,.6)"></div>
<div style="position:absolute;left:17.150000000000002px;top:740.8000000000001px;width:64.0px;height:18.799999999999955px;background:#8db4e2;"></div>
<div style="position:absolute;left:82.25px;top:740.8000000000001px;width:67.6px;height:18.799999999999955px;background:#8db4e2;"></div>
<div style="position:absolute;left:150.95000000000002px;top:740.8000000000001px;width:117.89999999999995px;height:18.799999999999955px;background:#8db4e2;"></div>
<div style="position:absolute;left:269.95px;top:740.8000000000001px;width:74.89999999999998px;height:18.799999999999955px;background:#bfbfbf;"></div>
<div style="position:absolute;left:345.95px;top:740.8000000000001px;width:121.69999999999999px;height:18.799999999999955px;background:#bfbfbf;"></div>
<div style="position:absolute;left:468.75px;top:740.8000000000001px;width:84.10000000000002px;height:18.799999999999955px;background:#bfbfbf;"></div>
<div style="position:absolute;left:553.9499999999999px;top:740.8000000000001px;width:85.10000000000014px;height:18.799999999999955px;background:#c4d79b;"></div>
<div style="position:absolute;left:640.15px;top:740.8000000000001px;width:132.70000000000005px;height:18.799999999999955px;background:#c4d79b;"></div>
<div style="position:absolute;left:773.9499999999999px;top:740.8000000000001px;width:67.80000000000007px;height:18.799999999999955px;background:#c4d79b;"></div>
<div style="position:absolute;left:842.8499999999999px;top:740.8000000000001px;width:65.00000000000011px;height:18.799999999999955px;background:#c4d79b;"></div>
<div style="position:absolute;left:908.9499999999999px;top:740.8000000000001px;width:78.80000000000007px;height:18.799999999999955px;background:#c4d79b;"></div>
<div style="position:absolute;left:988.8499999999999px;top:740.8000000000001px;width:77.00000000000023px;height:18.799999999999955px;background:#c4d79b;"></div>
<div style="position:absolute;left:1066.95px;top:740.8000000000001px;width:74.90000000000009px;height:18.799999999999955px;background:#da9694;"></div>
<div style="position:absolute;left:1142.95px;top:740.8000000000001px;width:38.09999999999991px;height:18.799999999999955px;background:#da9694;"></div>
<div style="position:absolute;left:554px;top:740.8000000000001px;width:85px;height:18.799999999999955px;overflow:hidden"><span style="position:absolute;left:1.59px;top:3.72px;white-space:nowrap;line-height:1;font-family:'Liberation Sans', sans-serif;font-size:13.8px;font-weight:normal;font-style:normal;color:#111;transform-origin:0 0;transform:scaleX(0.9971);">Sécurité</span></div>
<div style="position:absolute;left:640.5px;top:740.8000000000001px;width:132px;height:18.799999999999955px;overflow:hidden"><span style="position:absolute;left:1.69px;top:3.72px;white-space:nowrap;line-height:1;font-family:'Liberation Sans', sans-serif;font-size:13.8px;font-weight:normal;font-style:normal;color:#111;transform-origin:0 0;transform:scaleX(0.9920);">Risques chimiques</span></div>
<div style="position:absolute;left:909px;top:740.8000000000001px;width:79px;height:18.799999999999955px;overflow:hidden"><span style="position:absolute;left:35.66px;top:3.72px;white-space:nowrap;line-height:1;font-family:'Liberation Sans', sans-serif;font-size:13.8px;font-weight:normal;font-style:normal;color:#111;transform-origin:0 0;transform:scaleX(0.9205);">7</span></div>
<div style="position:absolute;left:989px;top:740.8000000000001px;width:77px;height:18.799999999999955px;overflow:hidden"><span style="position:absolute;left:69.19px;top:3.72px;white-space:nowrap;line-height:1;font-family:'Liberation Sans', sans-serif;font-size:13.8px;font-weight:normal;font-style:normal;color:#111;transform-origin:0 0;transform:scaleX(0.8034);">€</span></div>
<div style="position:absolute;left:98.80749574105623px;top:746.5px;width:36.62691652470188px;height:10.399999999999999px;background:#fff;border-radius:2px 2px 1px 1px;transform:skewY(0.0deg);"></div>
<div style="position:absolute;left:186.11584327086882px;top:746.5px;width:45.144804088586056px;height:10.399999999999999px;background:#fff;border-radius:3px 2px 2px 1px;transform:skewY(-1.4deg);"></div>
<div style="position:absolute;left:277.68313458262355px;top:746.2px;width:63.03236797274275px;height:11.0px;background:#fff;border-radius:1px 1px 3px 2px;transform:skewY(-0.7deg);"></div>
<div style="position:absolute;left:291.6px;top:746.3px;width:47.3px;height:0;border-top:1.4px dashed rgba(20,20,20,.6)"></div>
<div style="position:absolute;left:350.08517887563886px;top:746.5px;width:66.43952299829641px;height:10.399999999999999px;background:#fff;border-radius:2px 1px 1px 2px;transform:skewY(1.4deg);"></div>
<div style="position:absolute;left:364.7px;top:746.6px;width:36.5px;height:0;border-top:1.4px dashed rgba(20,20,20,.6)"></div>
<div style="position:absolute;left:480.40885860306645px;top:747.1px;width:66.8654173764906px;height:9.2px;background:#fff;border-radius:2px 1px 1px 2px;transform:skewY(1.4deg);"></div>
<div style="position:absolute;left:495.1px;top:747.2px;width:36.8px;height:0;border-top:1.4px dashed rgba(20,20,20,.6)"></div>
<div style="position:absolute;left:844.8892674616695px;top:747.1px;width:48.12606473594542px;height:9.2px;background:#fff;border-radius:1px 2px 3px 1px;transform:skewY(0.7deg);"></div>
<div style="position:absolute;left:850.7px;top:747.2px;width:21.7px;height:0;border-top:1.4px dashed rgba(20,20,20,.6)"></div>
<div style="position:absolute;left:1008.0068143100511px;top:747.1px;width:49.829642248722394px;height:9.2px;background:#fff;border-radius:2px 2px 1px 1px;transform:skewY(0.0deg);"></div>
<div style="position:absolute;left:17.150000000000002px;top:760.8000000000001px;width:64.0px;height:18.999999999999886px;background:#8db4e2;"></div>
<div style="position:absolute;left:82.25px;top:760.8000000000001px;width:67.6px;height:18.999999999999886px;background:#8db4e2;"></div>
<div style="position:absolute;left:150.95000000000002px;top:760.8000000000001px;width:117.89999999999995px;height:18.999999999999886px;background:#8db4e2;"></div>
<div style="position:absolute;left:269.95px;top:760.8000000000001px;width:74.89999999999998px;height:18.999999999999886px;background:#bfbfbf;"></div>
<div style="position:absolute;left:345.95px;top:760.8000000000001px;width:121.69999999999999px;height:18.999999999999886px;background:#bfbfbf;"></div>
<div style="position:absolute;left:468.75px;top:760.8000000000001px;width:84.10000000000002px;height:18.999999999999886px;background:#bfbfbf;"></div>
<div style="position:absolute;left:553.9499999999999px;top:760.8000000000001px;width:85.10000000000014px;height:18.999999999999886px;background:#c4d79b;"></div>
<div style="position:absolute;left:640.15px;top:760.8000000000001px;width:132.70000000000005px;height:18.999999999999886px;background:#c4d79b;"></div>
<div style="position:absolute;left:773.9499999999999px;top:760.8000000000001px;width:67.80000000000007px;height:18.999999999999886px;background:#c4d79b;"></div>
<div style="position:absolute;left:842.8499999999999px;top:760.8000000000001px;width:65.00000000000011px;height:18.999999999999886px;background:#c4d79b;"></div>
<div style="position:absolute;left:908.9499999999999px;top:760.8000000000001px;width:78.80000000000007px;height:18.999999999999886px;background:#c4d79b;"></div>
<div style="position:absolute;left:988.8499999999999px;top:760.8000000000001px;width:77.00000000000023px;height:18.999999999999886px;background:#c4d79b;"></div>
<div style="position:absolute;left:1066.95px;top:760.8000000000001px;width:74.90000000000009px;height:18.999999999999886px;background:#da9694;"></div>
<div style="position:absolute;left:1142.95px;top:760.8000000000001px;width:38.09999999999991px;height:18.999999999999886px;background:#da9694;"></div>
<div style="position:absolute;left:554px;top:760.8000000000001px;width:85px;height:18.999999999999886px;overflow:hidden"><span style="position:absolute;left:1.59px;top:3.92px;white-space:nowrap;line-height:1;font-family:'Liberation Sans', sans-serif;font-size:13.8px;font-weight:normal;font-style:normal;color:#111;transform-origin:0 0;transform:scaleX(0.9971);">Sécurité</span></div>
<div style="position:absolute;left:640.5px;top:760.8000000000001px;width:132px;height:18.999999999999886px;overflow:hidden"><span style="position:absolute;left:1.69px;top:3.92px;white-space:nowrap;line-height:1;font-family:'Liberation Sans', sans-serif;font-size:13.8px;font-weight:normal;font-style:normal;color:#111;transform-origin:0 0;transform:scaleX(0.7995);">SEBTR</span></div>
<div style="position:absolute;left:909px;top:760.8000000000001px;width:79px;height:18.999999999999886px;overflow:hidden"><span style="position:absolute;left:26.76px;top:3.92px;white-space:nowrap;line-height:1;font-family:'Liberation Sans', sans-serif;font-size:13.8px;font-weight:normal;font-style:normal;color:#111;transform-origin:0 0;transform:scaleX(0.9262);">10,5</span></div>
<div style="position:absolute;left:989px;top:760.8000000000001px;width:77px;height:18.999999999999886px;overflow:hidden"><span style="position:absolute;left:69.19px;top:3.92px;white-space:nowrap;line-height:1;font-family:'Liberation Sans', sans-serif;font-size:13.8px;font-weight:normal;font-style:normal;color:#111;transform-origin:0 0;transform:scaleX(0.8034);">€</span></div>
<div style="position:absolute;left:98.80749574105623px;top:765.3px;width:38.330494037478715px;height:11.0px;background:#fff;border-radius:2px 1px 1px 2px;transform:skewY(-1.4deg);"></div>
<div style="position:absolute;left:107.2px;top:765.4px;width:21.1px;height:0;border-top:1.4px dashed rgba(20,20,20,.6)"></div>
<div style="position:absolute;left:187.39352640545147px;top:765.3px;width:44.71890971039181px;height:11.0px;background:#fff;border-radius:1px 2px 3px 1px;transform:skewY(1.4deg);"></div>
<div style="position:absolute;left:192.8px;top:765.4px;width:20.1px;height:0;border-top:1.4px dashed rgba(20,20,20,.6)"></div>
<div style="position:absolute;left:274.7018739352641px;top:766.1999999999999px;width:68.14310051107327px;height:9.2px;background:#fff;border-radius:3px 2px 2px 1px;transform:skewY(-0.7deg);"></div>
<div style="position:absolute;left:353.4923339011925px;top:765.3px;width:61.75468483816013px;height:11.0px;background:#fff;border-radius:2px 1px 1px 2px;transform:skewY(-1.4deg);"></div>
<div style="position:absolute;left:367.1px;top:765.4px;width:34.0px;height:0;border-top:1.4px dashed rgba(20,20,20,.6)"></div>
<div style="position:absolute;left:480.40885860306645px;top:765.9px;width:64.73594548551961px;height:9.799999999999999px;background:#fff;border-radius:1px 1px 3px 2px;transform:skewY(0.0deg);"></div>
<div style="position:absolute;left:494.7px;top:766.0px;width:48.6px;height:0;border-top:1.4px dashed rgba(20,20,20,.6)"></div>
<div style="position:absolute;left:843.6115843270869px;top:765.9px;width:33.21976149914815px;height:9.799999999999999px;background:#fff;border-radius:2px 1px 1px 2px;transform:skewY(-1.4deg);"></div>
<div style="position:absolute;left:850.9px;top:766.0px;width:18.3px;height:0;border-top:1.4px dashed rgba(20,20,20,.6)"></div>
<div style="position:absolute;left:1002.4701873935264px;top:766.1999999999999px;width:60.902896081771814px;height:9.2px;background:#fff;border-radius:1px 2px 3px 1px;transform:skewY(1.4deg);"></div>
<div style="position:absolute;left:1009.8px;top:766.3px;width:27.4px;height:0;border-top:1.4px dashed rgba(20,20,20,.6)"></div>
<div style="position:absolute;left:17.150000000000002px;top:781.0px;width:64.0px;height:18.799999999999955px;background:#8db4e2;"></div>
<div style="position:absolute;left:82.25px;top:781.0px;width:67.6px;height:18.799999999999955px;background:#8db4e2;"></div>
<div style="position:absolute;left:150.95000000000002px;top:781.0px;width:117.89999999999995px;height:18.799999999999955px;background:#8db4e2;"></div>
<div style="position:absolute;left:269.95px;top:781.0px;width:74.89999999999998px;height:18.799999999999955px;background:#bfbfbf;"></div>
<div style="position:absolute;left:345.95px;top:781.0px;width:121.69999999999999px;height:18.799999999999955px;background:#bfbfbf;"></div>
<div style="position:absolute;left:468.75px;top:781.0px;width:84.10000000000002px;height:18.799999999999955px;background:#bfbfbf;"></div>
<div style="position:absolute;left:553.9499999999999px;top:781.0px;width:85.10000000000014px;height:18.799999999999955px;background:#c4d79b;"></div>
<div style="position:absolute;left:640.15px;top:781.0px;width:132.70000000000005px;height:18.799999999999955px;background:#c4d79b;"></div>
<div style="position:absolute;left:773.9499999999999px;top:781.0px;width:67.80000000000007px;height:18.799999999999955px;background:#c4d79b;"></div>
<div style="position:absolute;left:842.8499999999999px;top:781.0px;width:65.00000000000011px;height:18.799999999999955px;background:#c4d79b;"></div>
<div style="position:absolute;left:908.9499999999999px;top:781.0px;width:78.80000000000007px;height:18.799999999999955px;background:#c4d79b;"></div>
<div style="position:absolute;left:988.8499999999999px;top:781.0px;width:77.00000000000023px;height:18.799999999999955px;background:#c4d79b;"></div>
<div style="position:absolute;left:1066.95px;top:781.0px;width:74.90000000000009px;height:18.799999999999955px;background:#da9694;"></div>
<div style="position:absolute;left:1142.95px;top:781.0px;width:38.09999999999991px;height:18.799999999999955px;background:#da9694;"></div>
<div style="position:absolute;left:554px;top:781.0px;width:85px;height:18.799999999999955px;overflow:hidden"><span style="position:absolute;left:1.59px;top:3.72px;white-space:nowrap;line-height:1;font-family:'Liberation Sans', sans-serif;font-size:13.8px;font-weight:normal;font-style:normal;color:#111;transform-origin:0 0;transform:scaleX(0.9971);">Sécurité</span></div>
<div style="position:absolute;left:640.5px;top:781.0px;width:132px;height:18.799999999999955px;overflow:hidden"><span style="position:absolute;left:1.69px;top:3.72px;white-space:nowrap;line-height:1;font-family:'Liberation Sans', sans-serif;font-size:13.8px;font-weight:normal;font-style:normal;color:#111;transform-origin:0 0;transform:scaleX(1.0250);">Incendie</span></div>
<div style="position:absolute;left:909px;top:781.0px;width:79px;height:18.799999999999955px;overflow:hidden"><span style="position:absolute;left:30.16px;top:3.72px;white-space:nowrap;line-height:1;font-family:'Liberation Sans', sans-serif;font-size:13.8px;font-weight:normal;font-style:normal;color:#111;transform-origin:0 0;transform:scaleX(0.9421);">1,5</span></div>
<div style="position:absolute;left:989px;top:781.0px;width:77px;height:18.799999999999955px;overflow:hidden"><span style="position:absolute;left:69.19px;top:3.72px;white-space:nowrap;line-height:1;font-family:'Liberation Sans', sans-serif;font-size:13.8px;font-weight:normal;font-style:normal;color:#111;transform-origin:0 0;transform:scaleX(0.8034);">€</span></div>
<div style="position:absolute;left:103.49233390119251px;top:786.8px;width:26.405451448040893px;height:9.2px;background:#fff;border-radius:1px 1px 3px 2px;"></div>
<div style="position:absolute;left:109.3px;top:786.9px;width:19.8px;height:0;border-top:1.4px dashed rgba(20,20,20,.6)"></div>
<div style="position:absolute;left:183.9863713798978px;top:786.8px;width:51.107325383304925px;height:9.2px;background:#fff;border-radius:1px 1px 3px 2px;transform:skewY(0.7deg);"></div>
<div style="position:absolute;left:195.2px;top:786.9px;width:38.3px;height:0;border-top:1.4px dashed rgba(20,20,20,.6)"></div>
<div style="position:absolute;left:278.96081771720617px;top:786.5px;width:57.49574105621804px;height:9.799999999999999px;background:#fff;border-radius:1px 1px 3px 2px;transform:skewY(0.7deg);"></div>
<div style="position:absolute;left:291.6px;top:786.6px;width:43.1px;height:0;border-top:1.4px dashed rgba(20,20,20,.6)"></div>
<div style="position:absolute;left:352.6405451448041px;top:786.8px;width:56.21805792163548px;height:9.2px;background:#fff;border-radius:3px 2px 2px 1px;transform:skewY(0.0deg);"></div>
<div style="position:absolute;left:484.66780238500854px;top:785.9px;width:57.06984667802391px;height:11.0px;background:#fff;border-radius:2px 2px 1px 1px;transform:skewY(1.4deg);"></div>
<div style="position:absolute;left:846.1669505962521px;top:786.1999999999999px;width:48.55195911413966px;height:10.399999999999999px;background:#fff;border-radius:2px 1px 1px 2px;transform:skewY(-0.7deg);"></div>
<div style="position:absolute;left:856.8px;top:786.3px;width:26.7px;height:0;border-top:1.4px dashed rgba(20,20,20,.6)"></div>
<div style="position:absolute;left:1012.2657580919932px;top:786.1999999999999px;width:45.5706984667803px;height:10.399999999999999px;background:#fff;border-radius:3px 2px 2px 1px;transform:skewY(0.0deg);"></div>
<div style="position:absolute;left:17.150000000000002px;top:801.0px;width:64.0px;height:18.799999999999955px;background:#8db4e2;"></div>
<div style="position:absolute;left:82.25px;top:801.0px;width:67.6px;height:18.799999999999955px;background:#8db4e2;"></div>
<div style="position:absolute;left:150.95000000000002px;top:801.0px;width:117.89999999999995px;height:18.799999999999955px;background:#8db4e2;"></div>
<div style="position:absolute;left:269.95px;top:801.0px;width:74.89999999999998px;height:18.799999999999955px;background:#bfbfbf;"></div>
<div style="position:absolute;left:345.95px;top:801.0px;width:121.69999999999999px;height:18.799999999999955px;background:#bfbfbf;"></div>
<div style="position:absolute;left:468.75px;top:801.0px;width:84.10000000000002px;height:18.799999999999955px;background:#bfbfbf;"></div>
<div style="position:absolute;left:553.9499999999999px;top:801.0px;width:85.10000000000014px;height:18.799999999999955px;background:#c4d79b;"></div>
<div style="position:absolute;left:640.15px;top:801.0px;width:132.70000000000005px;height:18.799999999999955px;background:#c4d79b;"></div>
<div style="position:absolute;left:773.9499999999999px;top:801.0px;width:67.80000000000007px;height:18.799999999999955px;background:#c4d79b;"></div>
<div style="position:absolute;left:842.8499999999999px;top:801.0px;width:65.00000000000011px;height:18.799999999999955px;background:#c4d79b;"></div>
<div style="position:absolute;left:908.9499999999999px;top:801.0px;width:78.80000000000007px;height:18.799999999999955px;background:#c4d79b;"></div>
<div style="position:absolute;left:988.8499999999999px;top:801.0px;width:77.00000000000023px;height:18.799999999999955px;background:#c4d79b;"></div>
<div style="position:absolute;left:1066.95px;top:801.0px;width:74.90000000000009px;height:18.799999999999955px;background:#da9694;"></div>
<div style="position:absolute;left:1142.95px;top:801.0px;width:38.09999999999991px;height:18.799999999999955px;background:#da9694;"></div>
<div style="position:absolute;left:554px;top:801.0px;width:85px;height:18.799999999999955px;overflow:hidden"><span style="position:absolute;left:1.59px;top:3.72px;white-space:nowrap;line-height:1;font-family:'Liberation Sans', sans-serif;font-size:13.8px;font-weight:normal;font-style:normal;color:#111;transform-origin:0 0;transform:scaleX(0.9971);">Sécurité</span></div>
<div style="position:absolute;left:640.5px;top:801.0px;width:132px;height:18.799999999999955px;overflow:hidden"><span style="position:absolute;left:1.69px;top:3.72px;white-space:nowrap;line-height:1;font-family:'Liberation Sans', sans-serif;font-size:13.8px;font-weight:normal;font-style:normal;color:#111;transform-origin:0 0;transform:scaleX(1.0250);">Incendie</span></div>
<div style="position:absolute;left:909px;top:801.0px;width:79px;height:18.799999999999955px;overflow:hidden"><span style="position:absolute;left:30.16px;top:3.72px;white-space:nowrap;line-height:1;font-family:'Liberation Sans', sans-serif;font-size:13.8px;font-weight:normal;font-style:normal;color:#111;transform-origin:0 0;transform:scaleX(0.9421);">1,5</span></div>
<div style="position:absolute;left:989px;top:801.0px;width:77px;height:18.799999999999955px;overflow:hidden"><span style="position:absolute;left:69.19px;top:3.72px;white-space:nowrap;line-height:1;font-family:'Liberation Sans', sans-serif;font-size:13.8px;font-weight:normal;font-style:normal;color:#111;transform-origin:0 0;transform:scaleX(0.8034);">€</span></div>
<div style="position:absolute;left:101.36286201022148px;top:807.0px;width:27.683134582623495px;height:9.799999999999999px;background:#fff;border-radius:1px 1px 3px 2px;"></div>
<div style="position:absolute;left:107.5px;top:807.1px;width:20.8px;height:0;border-top:1.4px dashed rgba(20,20,20,.6)"></div>
<div style="position:absolute;left:185.26405451448042px;top:807.0px;width:53.23679727427597px;height:9.799999999999999px;background:#fff;border-radius:3px 2px 2px 1px;transform:skewY(0.7deg);"></div>
<div style="position:absolute;left:280.2385008517888px;top:806.4px;width:56.21805792163542px;height:11.0px;background:#fff;border-radius:3px 2px 2px 1px;transform:skewY(0.7deg);"></div>
<div style="position:absolute;left:349.23339011925043px;top:807.3px;width:114.99148211243613px;height:9.2px;background:#fff;border-radius:2px 1px 1px 2px;transform:skewY(0.0deg);"></div>
<div style="position:absolute;left:374.5px;top:807.4px;width:63.2px;height:0;border-top:1.4px dashed rgba(20,20,20,.6)"></div>
<div style="position:absolute;left:485.519591141397px;top:807.3px;width:55.36626916524699px;height:9.2px;background:#fff;border-radius:3px 2px 2px 1px;transform:skewY(0.7deg);"></div>
<div style="position:absolute;left:847.0187393526405px;top:807.3px;width:48.97785349233391px;height:9.2px;background:#fff;border-radius:2px 2px 1px 1px;transform:skewY(-1.4deg);"></div>
<div style="position:absolute;left:1012.2657580919932px;top:806.4px;width:45.5706984667803px;height:11.0px;background:#fff;border-radius:2px 2px 1px 1px;transform:skewY(-1.4deg);"></div>
<div style="position:absolute;left:17.150000000000002px;top:821.0px;width:64.0px;height:18.799999999999955px;background:#8db4e2;"></div>
<div style="position:absolute;left:82.25px;top:821.0px;width:67.6px;height:18.799999999999955px;background:#8db4e2;"></div>
<div style="position:absolute;left:150.95000000000002px;top:821.0px;width:117.89999999999995px;height:18.799999999999955px;background:#8db4e2;"></div>
<div style="position:absolute;left:269.95px;top:821.0px;width:74.89999999999998px;height:18.799999999999955px;background:#bfbfbf;"></div>
<div style="position:absolute;left:345.95px;top:821.0px;width:121.69999999999999px;height:18.799999999999955px;background:#bfbfbf;"></div>
<div style="position:absolute;left:468.75px;top:821.0px;width:84.10000000000002px;height:18.799999999999955px;background:#bfbfbf;"></div>
<div style="position:absolute;left:553.9499999999999px;top:821.0px;width:85.10000000000014px;height:18.799999999999955px;background:#c4d79b;"></div>
<div style="position:absolute;left:640.15px;top:821.0px;width:132.70000000000005px;height:18.799999999999955px;background:#c4d79b;"></div>
<div style="position:absolute;left:773.9499999999999px;top:821.0px;width:67.80000000000007px;height:18.799999999999955px;background:#c4d79b;"></div>
<div style="position:absolute;left:842.8499999999999px;top:821.0px;width:65.00000000000011px;height:18.799999999999955px;background:#c4d79b;"></div>
<div style="position:absolute;left:908.9499999999999px;top:821.0px;width:78.80000000000007px;height:18.799999999999955px;background:#c4d79b;"></div>
<div style="position:absolute;left:988.8499999999999px;top:821.0px;width:77.00000000000023px;height:18.799999999999955px;background:#c4d79b;"></div>
<div style="position:absolute;left:1066.95px;top:821.0px;width:74.90000000000009px;height:18.799999999999955px;background:#da9694;"></div>
<div style="position:absolute;left:1142.95px;top:821.0px;width:38.09999999999991px;height:18.799999999999955px;background:#da9694;"></div>
<div style="position:absolute;left:554px;top:821.0px;width:85px;height:18.799999999999955px;overflow:hidden"><span style="position:absolute;left:1.59px;top:3.72px;white-space:nowrap;line-height:1;font-family:'Liberation Sans', sans-serif;font-size:13.8px;font-weight:normal;font-style:normal;color:#111;transform-origin:0 0;transform:scaleX(0.9971);">Sécurité</span></div>
<div style="position:absolute;left:640.5px;top:821.0px;width:132px;height:18.799999999999955px;overflow:hidden"><span style="position:absolute;left:1.69px;top:3.72px;white-space:nowrap;line-height:1;font-family:'Liberation Sans', sans-serif;font-size:13.8px;font-weight:normal;font-style:normal;color:#111;transform-origin:0 0;transform:scaleX(0.9919);">Gestes et postures</span></div>
<div style="position:absolute;left:909px;top:821.0px;width:79px;height:18.799999999999955px;overflow:hidden"><span style="position:absolute;left:35.66px;top:3.72px;white-space:nowrap;line-height:1;font-family:'Liberation Sans', sans-serif;font-size:13.8px;font-weight:normal;font-style:normal;color:#111;transform-origin:0 0;transform:scaleX(0.9205);">7</span></div>
<div style="position:absolute;left:989px;top:821.0px;width:77px;height:18.799999999999955px;overflow:hidden"><span style="position:absolute;left:69.19px;top:3.72px;white-space:nowrap;line-height:1;font-family:'Liberation Sans', sans-serif;font-size:13.8px;font-weight:normal;font-style:normal;color:#111;transform-origin:0 0;transform:scaleX(0.8034);">€</span></div>
<div style="position:absolute;left:98.80749574105623px;top:825.6999999999999px;width:37.478705281090285px;height:10.399999999999999px;background:#fff;border-radius:3px 2px 2px 1px;transform:skewY(1.4deg);"></div>
<div style="position:absolute;left:189.5229982964225px;top:825.4px;width:43.86712095400341px;height:11.0px;background:#fff;border-radius:1px 1px 3px 2px;transform:skewY(-1.4deg);"></div>
<div style="position:absolute;left:199.2px;top:825.5px;width:32.9px;height:0;border-top:1.4px dashed rgba(20,20,20,.6)"></div>
<div style="position:absolute;left:278.96081771720617px;top:825.4px;width:61.75468483816013px;height:11.0px;background:#fff;border-radius:3px 2px 2px 1px;transform:skewY(1.4deg);"></div>
<div style="position:absolute;left:349.23339011925043px;top:826.0px;width:68.14310051107327px;height:9.799999999999999px;background:#fff;border-radius:1px 1px 3px 2px;transform:skewY(-1.4deg);"></div>
<div style="position:absolute;left:364.2px;top:826.1px;width:51.1px;height:0;border-top:1.4px dashed rgba(20,20,20,.6)"></div>
<div style="position:absolute;left:479.13117546848383px;top:826.3px;width:62.60647359454862px;height:9.2px;background:#fff;border-radius:1px 1px 3px 2px;transform:skewY(-1.4deg);"></div>
<div style="position:absolute;left:492.9px;top:826.4px;width:47.0px;height:0;border-top:1.4px dashed rgba(20,20,20,.6)"></div>
<div style="position:absolute;left:846.1669505962521px;top:826.3px;width:41.31175468483809px;height:9.2px;background:#fff;border-radius:1px 2px 3px 1px;transform:skewY(0.0deg);"></div>
<div style="position:absolute;left:851.1px;top:826.4px;width:18.6px;height:0;border-top:1.4px dashed rgba(20,20,20,.6)"></div>
<div style="position:absolute;left:1008.8586030664396px;top:826.3px;width:53.23679727427589px;height:9.2px;background:#fff;border-radius:3px 2px 2px 1px;transform:skewY(1.4deg);"></div>
<div style="position:absolute;left:17.150000000000002px;top:841.0px;width:64.0px;height:18.799999999999955px;background:#8db4e2;"></div>
<div style="position:absolute;left:82.25px;top:841.0px;width:67.6px;height:18.799999999999955px;background:#8db4e2;"></div>
<div style="position:absolute;left:150.95000000000002px;top:841.0px;width:117.89999999999995px;height:18.799999999999955px;background:#8db4e2;"></div>
<div style="position:absolute;left:269.95px;top:841.0px;width:74.89999999999998px;height:18.799999999999955px;background:#bfbfbf;"></div>
<div style="position:absolute;left:345.95px;top:841.0px;width:121.69999999999999px;height:18.799999999999955px;background:#bfbfbf;"></div>
<div style="position:absolute;left:468.75px;top:841.0px;width:84.10000000000002px;height:18.799999999999955px;background:#bfbfbf;"></div>
<div style="position:absolute;left:553.9499999999999px;top:841.0px;width:85.10000000000014px;height:18.799999999999955px;background:#c4d79b;"></div>
<div style="position:absolute;left:640.15px;top:841.0px;width:132.70000000000005px;height:18.799999999999955px;background:#c4d79b;"></div>
<div style="position:absolute;left:773.9499999999999px;top:841.0px;width:67.80000000000007px;height:18.799999999999955px;background:#c4d79b;"></div>
<div style="position:absolute;left:842.8499999999999px;top:841.0px;width:65.00000000000011px;height:18.799999999999955px;background:#c4d79b;"></div>
<div style="position:absolute;left:908.9499999999999px;top:841.0px;width:78.80000000000007px;height:18.799999999999955px;background:#c4d79b;"></div>
<div style="position:absolute;left:988.8499999999999px;top:841.0px;width:77.00000000000023px;height:18.799999999999955px;background:#c4d79b;"></div>
<div style="position:absolute;left:1066.95px;top:841.0px;width:74.90000000000009px;height:18.799999999999955px;background:#da9694;"></div>
<div style="position:absolute;left:1142.95px;top:841.0px;width:38.09999999999991px;height:18.799999999999955px;background:#da9694;"></div>
<div style="position:absolute;left:554px;top:841.0px;width:85px;height:18.799999999999955px;overflow:hidden"><span style="position:absolute;left:1.59px;top:3.72px;white-space:nowrap;line-height:1;font-family:'Liberation Sans', sans-serif;font-size:13.8px;font-weight:normal;font-style:normal;color:#111;transform-origin:0 0;transform:scaleX(0.9971);">Sécurité</span></div>
<div style="position:absolute;left:640.5px;top:841.0px;width:132px;height:18.799999999999955px;overflow:hidden"><span style="position:absolute;left:1.69px;top:3.72px;white-space:nowrap;line-height:1;font-family:'Liberation Sans', sans-serif;font-size:13.8px;font-weight:normal;font-style:normal;color:#111;transform-origin:0 0;transform:scaleX(0.9919);">Gestes et postures</span></div>
<div style="position:absolute;left:909px;top:841.0px;width:79px;height:18.799999999999955px;overflow:hidden"><span style="position:absolute;left:35.66px;top:3.72px;white-space:nowrap;line-height:1;font-family:'Liberation Sans', sans-serif;font-size:13.8px;font-weight:normal;font-style:normal;color:#111;transform-origin:0 0;transform:scaleX(0.9205);">7</span></div>
<div style="position:absolute;left:98.80749574105623px;top:845.9px;width:36.62691652470188px;height:11.0px;background:#fff;border-radius:2px 2px 1px 1px;transform:skewY(0.0deg);"></div>
<div style="position:absolute;left:189.5229982964225px;top:846.8px;width:42.589437819420795px;height:9.2px;background:#fff;border-radius:1px 2px 3px 1px;transform:skewY(0.7deg);"></div>
<div style="position:absolute;left:194.6px;top:846.9px;width:19.2px;height:0;border-top:1.4px dashed rgba(20,20,20,.6)"></div>
<div style="position:absolute;left:275.9795570698467px;top:846.8px;width:60.477001703577514px;height:9.2px;background:#fff;border-radius:2px 1px 1px 2px;transform:skewY(1.4deg);"></div>
<div style="position:absolute;left:289.3px;top:846.9px;width:33.3px;height:0;border-top:1.4px dashed rgba(20,20,20,.6)"></div>
<div style="position:absolute;left:349.23339011925043px;top:846.1999999999999px;width:51.10732538330495px;height:10.399999999999999px;background:#fff;border-radius:1px 2px 3px 1px;transform:skewY(0.7deg);"></div>
<div style="position:absolute;left:355.4px;top:846.3px;width:23.0px;height:0;border-top:1.4px dashed rgba(20,20,20,.6)"></div>
<div style="position:absolute;left:490.63032367972744px;top:845.9px;width:41.737649063032336px;height:11.0px;background:#fff;border-radius:2px 1px 1px 2px;transform:skewY(1.4deg);"></div>
<div style="position:absolute;left:499.8px;top:846.0px;width:23.0px;height:0;border-top:1.4px dashed rgba(20,20,20,.6)"></div>
<div style="position:absolute;left:846.1669505962521px;top:846.5px;width:41.31175468483809px;height:9.799999999999999px;background:#fff;border-radius:3px 2px 2px 1px;transform:skewY(-1.4deg);"></div>
<div style="position:absolute;left:1012.2657580919932px;top:846.5px;width:54.08858603066426px;height:9.799999999999999px;background:#fff;border-radius:1px 1px 3px 2px;transform:skewY(-0.7deg);"></div>
<div style="position:absolute;left:1024.2px;top:846.6px;width:40.6px;height:0;border-top:1.4px dashed rgba(20,20,20,.6)"></div>
<div style="position:absolute;left:17.150000000000002px;top:861.0px;width:64.0px;height:18.799999999999955px;background:#8db4e2;"></div>
<div style="position:absolute;left:82.25px;top:861.0px;width:67.6px;height:18.799999999999955px;background:#8db4e2;"></div>
<div style="position:absolute;left:150.95000000000002px;top:861.0px;width:117.89999999999995px;height:18.799999999999955px;background:#8db4e2;"></div>
<div style="position:absolute;left:269.95px;top:861.0px;width:74.89999999999998px;height:18.799999999999955px;background:#bfbfbf;"></div>
<div style="position:absolute;left:345.95px;top:861.0px;width:121.69999999999999px;height:18.799999999999955px;background:#bfbfbf;"></div>
<div style="position:absolute;left:468.75px;top:861.0px;width:84.10000000000002px;height:18.799999999999955px;background:#bfbfbf;"></div>
<div style="position:absolute;left:553.9499999999999px;top:861.0px;width:85.10000000000014px;height:18.799999999999955px;background:#c4d79b;"></div>
<div style="position:absolute;left:640.15px;top:861.0px;width:132.70000000000005px;height:18.799999999999955px;background:#c4d79b;"></div>
<div style="position:absolute;left:773.9499999999999px;top:861.0px;width:67.80000000000007px;height:18.799999999999955px;background:#c4d79b;"></div>
<div style="position:absolute;left:842.8499999999999px;top:861.0px;width:65.00000000000011px;height:18.799999999999955px;background:#c4d79b;"></div>
<div style="position:absolute;left:908.9499999999999px;top:861.0px;width:78.80000000000007px;height:18.799999999999955px;background:#c4d79b;"></div>
<div style="position:absolute;left:988.8499999999999px;top:861.0px;width:77.00000000000023px;height:18.799999999999955px;background:#c4d79b;"></div>
<div style="position:absolute;left:1066.95px;top:861.0px;width:74.90000000000009px;height:18.799999999999955px;background:#da9694;"></div>
<div style="position:absolute;left:1142.95px;top:861.0px;width:38.09999999999991px;height:18.799999999999955px;background:#da9694;"></div>
<div style="position:absolute;left:554px;top:861.0px;width:85px;height:18.799999999999955px;overflow:hidden"><span style="position:absolute;left:1.59px;top:3.72px;white-space:nowrap;line-height:1;font-family:'Liberation Sans', sans-serif;font-size:13.8px;font-weight:normal;font-style:normal;color:#111;transform-origin:0 0;transform:scaleX(0.9971);">Sécurité</span></div>
<div style="position:absolute;left:640.5px;top:861.0px;width:132px;height:18.799999999999955px;overflow:hidden"><span style="position:absolute;left:1.69px;top:3.72px;white-space:nowrap;line-height:1;font-family:'Liberation Sans', sans-serif;font-size:13.8px;font-weight:normal;font-style:normal;color:#111;transform-origin:0 0;transform:scaleX(0.9920);">Risques chimiques</span></div>
<div style="position:absolute;left:909px;top:861.0px;width:79px;height:18.799999999999955px;overflow:hidden"><span style="position:absolute;left:35.66px;top:3.72px;white-space:nowrap;line-height:1;font-family:'Liberation Sans', sans-serif;font-size:13.8px;font-weight:normal;font-style:normal;color:#111;transform-origin:0 0;transform:scaleX(0.9205);">7</span></div>
<div style="position:absolute;left:989px;top:861.0px;width:77px;height:18.799999999999955px;overflow:hidden"><span style="position:absolute;left:69.19px;top:3.72px;white-space:nowrap;line-height:1;font-family:'Liberation Sans', sans-serif;font-size:13.8px;font-weight:normal;font-style:normal;color:#111;transform-origin:0 0;transform:scaleX(0.8034);">€</span></div>
<div style="position:absolute;left:95.82623509369677px;top:866.4px;width:40.45996592844975px;height:11.0px;background:#fff;border-radius:1px 1px 3px 2px;transform:skewY(0.0deg);"></div>
<div style="position:absolute;left:104.7px;top:866.5px;width:30.3px;height:0;border-top:1.4px dashed rgba(20,20,20,.6)"></div>
<div style="position:absolute;left:187.39352640545147px;top:867.3px;width:43.441226575809196px;height:9.2px;background:#fff;border-radius:1px 2px 3px 1px;transform:skewY(1.4deg);"></div>
<div style="position:absolute;left:192.6px;top:867.4px;width:19.5px;height:0;border-top:1.4px dashed rgba(20,20,20,.6)"></div>
<div style="position:absolute;left:275.9795570698467px;top:867.0px;width:60.477001703577514px;height:9.799999999999999px;background:#fff;border-radius:1px 1px 3px 2px;transform:skewY(0.0deg);"></div>
<div style="position:absolute;left:289.3px;top:867.1px;width:45.4px;height:0;border-top:1.4px dashed rgba(20,20,20,.6)"></div>
<div style="position:absolute;left:348.38160136286206px;top:866.4px;width:51.95911413969333px;height:11.0px;background:#fff;border-radius:2px 1px 1px 2px;transform:skewY(-1.4deg);"></div>
<div style="position:absolute;left:359.8px;top:866.5px;width:28.6px;height:0;border-top:1.4px dashed rgba(20,20,20,.6)"></div>
<div style="position:absolute;left:494.0374787052811px;top:867.3px;width:38.33049403747867px;height:9.2px;background:#fff;border-radius:3px 2px 2px 1px;transform:skewY(-0.7deg);"></div>
<div style="position:absolute;left:847.0187393526405px;top:866.4px;width:41.73764906303245px;height:11.0px;background:#fff;border-radius:1px 2px 3px 1px;transform:skewY(1.4deg);"></div>
<div style="position:absolute;left:852.0px;top:866.5px;width:18.8px;height:0;border-top:1.4px dashed rgba(20,20,20,.6)"></div>
<div style="position:absolute;left:1013.1175468483816px;top:866.6999999999999px;width:44.71890971039193px;height:10.399999999999999px;background:#fff;border-radius:2px 1px 1px 2px;transform:skewY(-1.4deg);"></div>
<div style="position:absolute;left:1023.0px;top:866.8px;width:24.6px;height:0;border-top:1.4px dashed rgba(20,20,20,.6)"></div>
<div style="position:absolute;left:17.150000000000002px;top:881.0px;width:64.0px;height:18.799999999999955px;background:#8db4e2;"></div>
<div style="position:absolute;left:82.25px;top:881.0px;width:67.6px;height:18.799999999999955px;background:#8db4e2;"></div>
<div style="position:absolute;left:150.95000000000002px;top:881.0px;width:117.89999999999995px;height:18.799999999999955px;background:#8db4e2;"></div>
<div style="position:absolute;left:269.95px;top:881.0px;width:74.89999999999998px;height:18.799999999999955px;background:#bfbfbf;"></div>
<div style="position:absolute;left:345.95px;top:881.0px;width:121.69999999999999px;height:18.799999999999955px;background:#bfbfbf;"></div>
<div style="position:absolute;left:468.75px;top:881.0px;width:84.10000000000002px;height:18.799999999999955px;background:#bfbfbf;"></div>
<div style="position:absolute;left:553.9499999999999px;top:881.0px;width:85.10000000000014px;height:18.799999999999955px;background:#c4d79b;"></div>
<div style="position:absolute;left:640.15px;top:881.0px;width:132.70000000000005px;height:18.799999999999955px;background:#c4d79b;"></div>
<div style="position:absolute;left:773.9499999999999px;top:881.0px;width:67.80000000000007px;height:18.799999999999955px;background:#c4d79b;"></div>
<div style="position:absolute;left:842.8499999999999px;top:881.0px;width:65.00000000000011px;height:18.799999999999955px;background:#c4d79b;"></div>
<div style="position:absolute;left:908.9499999999999px;top:881.0px;width:78.80000000000007px;height:18.799999999999955px;background:#c4d79b;"></div>
<div style="position:absolute;left:988.8499999999999px;top:881.0px;width:77.00000000000023px;height:18.799999999999955px;background:#c4d79b;"></div>
<div style="position:absolute;left:1066.95px;top:881.0px;width:74.90000000000009px;height:18.799999999999955px;background:#da9694;"></div>
<div style="position:absolute;left:1142.95px;top:881.0px;width:38.09999999999991px;height:18.799999999999955px;background:#da9694;"></div>
<div style="position:absolute;left:554px;top:881.0px;width:85px;height:18.799999999999955px;overflow:hidden"><span style="position:absolute;left:1.59px;top:3.72px;white-space:nowrap;line-height:1;font-family:'Liberation Sans', sans-serif;font-size:13.8px;font-weight:normal;font-style:normal;color:#111;transform-origin:0 0;transform:scaleX(0.9971);">Sécurité</span></div>
<div style="position:absolute;left:640.5px;top:881.0px;width:132px;height:18.799999999999955px;overflow:hidden"><span style="position:absolute;left:1.69px;top:3.72px;white-space:nowrap;line-height:1;font-family:'Liberation Sans', sans-serif;font-size:13.8px;font-weight:normal;font-style:normal;color:#111;transform-origin:0 0;transform:scaleX(0.9919);">Gestes et postures</span></div>
<div style="position:absolute;left:909px;top:881.0px;width:79px;height:18.799999999999955px;overflow:hidden"><span style="position:absolute;left:35.66px;top:3.72px;white-space:nowrap;line-height:1;font-family:'Liberation Sans', sans-serif;font-size:13.8px;font-weight:normal;font-style:normal;color:#111;transform-origin:0 0;transform:scaleX(0.9205);">7</span></div>
<div style="position:absolute;left:989px;top:881.0px;width:77px;height:18.799999999999955px;overflow:hidden"><span style="position:absolute;left:69.19px;top:3.72px;white-space:nowrap;line-height:1;font-family:'Liberation Sans', sans-serif;font-size:13.8px;font-weight:normal;font-style:normal;color:#111;transform-origin:0 0;transform:scaleX(0.8034);">€</span></div>
<div style="position:absolute;left:97.1039182282794px;top:886.3px;width:37.05281090289607px;height:9.2px;background:#fff;border-radius:3px 2px 2px 1px;transform:skewY(0.0deg);"></div>
<div style="position:absolute;left:187.39352640545147px;top:886.0px;width:45.99659284497443px;height:9.799999999999999px;background:#fff;border-radius:3px 2px 2px 1px;transform:skewY(0.0deg);"></div>
<div style="position:absolute;left:272.572402044293px;top:886.0px;width:68.14310051107327px;height:9.799999999999999px;background:#fff;border-radius:3px 2px 2px 1px;transform:skewY(0.0deg);"></div>
<div style="position:absolute;left:351.3628620102215px;top:886.0px;width:46.84838160136286px;height:9.799999999999999px;background:#fff;border-radius:2px 1px 1px 2px;transform:skewY(-0.7deg);"></div>
<div style="position:absolute;left:361.7px;top:886.1px;width:25.8px;height:0;border-top:1.4px dashed rgba(20,20,20,.6)"></div>
<div style="position:absolute;left:494.0374787052811px;top:886.0px;width:40.459965928449776px;height:9.799999999999999px;background:#fff;border-radius:2px 2px 1px 1px;transform:skewY(1.4deg);"></div>
<div style="position:absolute;left:844.8892674616695px;top:885.4px;width:49.82964224872228px;height:11.0px;background:#fff;border-radius:2px 2px 1px 1px;transform:skewY(1.4deg);"></div>
<div style="position:absolute;left:1010.9880749574106px;top:885.4px;width:51.1073253833049px;height:11.0px;background:#fff;border-radius:1px 2px 3px 1px;transform:skewY(-1.4deg);"></div>
<div style="position:absolute;left:1017.1px;top:885.5px;width:23.0px;height:0;border-top:1.4px dashed rgba(20,20,20,.6)"></div>
<div style="position:absolute;left:17.150000000000002px;top:901.0px;width:64.0px;height:18.899999999999977px;background:#8db4e2;"></div>
<div style="position:absolute;left:82.25px;top:901.0px;width:67.6px;height:18.899999999999977px;background:#8db4e2;"></div>
<div style="position:absolute;left:150.95000000000002px;top:901.0px;width:117.89999999999995px;height:18.899999999999977px;background:#8db4e2;"></div>
<div style="position:absolute;left:269.95px;top:901.0px;width:74.89999999999998px;height:18.899999999999977px;background:#bfbfbf;"></div>
<div style="position:absolute;left:345.95px;top:901.0px;width:121.69999999999999px;height:18.899999999999977px;background:#bfbfbf;"></div>
<div style="position:absolute;left:468.75px;top:901.0px;width:84.10000000000002px;height:18.899999999999977px;background:#bfbfbf;"></div>
<div style="position:absolute;left:553.9499999999999px;top:901.0px;width:85.10000000000014px;height:18.899999999999977px;background:#c4d79b;"></div>
<div style="position:absolute;left:640.15px;top:901.0px;width:132.70000000000005px;height:18.899999999999977px;background:#c4d79b;"></div>
<div style="position:absolute;left:773.9499999999999px;top:901.0px;width:67.80000000000007px;height:18.899999999999977px;background:#c4d79b;"></div>
<div style="position:absolute;left:842.8499999999999px;top:901.0px;width:65.00000000000011px;height:18.899999999999977px;background:#c4d79b;"></div>
<div style="position:absolute;left:908.9499999999999px;top:901.0px;width:78.80000000000007px;height:18.899999999999977px;background:#c4d79b;"></div>
<div style="position:absolute;left:988.8499999999999px;top:901.0px;width:77.00000000000023px;height:18.899999999999977px;background:#c4d79b;"></div>
<div style="position:absolute;left:1066.95px;top:901.0px;width:74.90000000000009px;height:18.899999999999977px;background:#da9694;"></div>
<div style="position:absolute;left:1142.95px;top:901.0px;width:38.09999999999991px;height:18.899999999999977px;background:#da9694;"></div>
<div style="position:absolute;left:554px;top:901.0px;width:85px;height:18.899999999999977px;overflow:hidden"><span style="position:absolute;left:1.59px;top:3.82px;white-space:nowrap;line-height:1;font-family:'Liberation Sans', sans-serif;font-size:13.8px;font-weight:normal;font-style:normal;color:#111;transform-origin:0 0;transform:scaleX(0.9971);">Sécurité</span></div>
<div style="position:absolute;left:640.5px;top:901.0px;width:132px;height:18.899999999999977px;overflow:hidden"><span style="position:absolute;left:1.69px;top:3.82px;white-space:nowrap;line-height:1;font-family:'Liberation Sans', sans-serif;font-size:13.8px;font-weight:normal;font-style:normal;color:#111;transform-origin:0 0;transform:scaleX(1.0250);">Incendie</span></div>
<div style="position:absolute;left:909px;top:901.0px;width:79px;height:18.899999999999977px;overflow:hidden"><span style="position:absolute;left:30.16px;top:3.82px;white-space:nowrap;line-height:1;font-family:'Liberation Sans', sans-serif;font-size:13.8px;font-weight:normal;font-style:normal;color:#111;transform-origin:0 0;transform:scaleX(0.9421);">1,5</span></div>
<div style="position:absolute;left:989px;top:901.0px;width:77px;height:18.899999999999977px;overflow:hidden"><span style="position:absolute;left:69.19px;top:3.82px;white-space:nowrap;line-height:1;font-family:'Liberation Sans', sans-serif;font-size:13.8px;font-weight:normal;font-style:normal;color:#111;transform-origin:0 0;transform:scaleX(0.8034);">€</span></div>
<div style="position:absolute;left:103.49233390119251px;top:906.25px;width:25.553662691652463px;height:10.399999999999999px;background:#fff;border-radius:1px 2px 3px 1px;"></div>
<div style="position:absolute;left:106.6px;top:906.4px;width:11.5px;height:0;border-top:1.4px dashed rgba(20,20,20,.6)"></div>
<div style="position:absolute;left:187.39352640545147px;top:906.25px;width:46.84838160136286px;height:10.399999999999999px;background:#fff;border-radius:2px 2px 1px 1px;transform:skewY(-1.4deg);"></div>
<div style="position:absolute;left:277.68313458262355px;top:905.95px;width:63.03236797274275px;height:11.0px;background:#fff;border-radius:2px 2px 1px 1px;transform:skewY(-1.4deg);"></div>
<div style="position:absolute;left:353.4923339011925px;top:906.25px;width:53.236797274276px;height:10.399999999999999px;background:#fff;border-radius:1px 2px 3px 1px;transform:skewY(-0.7deg);"></div>
<div style="position:absolute;left:359.9px;top:906.4px;width:24.0px;height:0;border-top:1.4px dashed rgba(20,20,20,.6)"></div>
<div style="position:absolute;left:496.16695059625215px;top:906.25px;width:34.071550255536636px;height:10.399999999999999px;background:#fff;border-radius:1px 1px 3px 2px;transform:skewY(1.4deg);"></div>
<div style="position:absolute;left:503.7px;top:906.4px;width:25.6px;height:0;border-top:1.4px dashed rgba(20,20,20,.6)"></div>
<div style="position:absolute;left:846.1669505962521px;top:906.85px;width:45.5706984667803px;height:9.2px;background:#fff;border-radius:1px 1px 3px 2px;transform:skewY(1.4deg);"></div>
<div style="position:absolute;left:856.2px;top:907.0px;width:34.2px;height:0;border-top:1.4px dashed rgba(20,20,20,.6)"></div>
<div style="position:absolute;left:1019.5059625212948px;top:906.5500000000001px;width:36.20102214650751px;height:9.799999999999999px;background:#fff;border-radius:2px 1px 1px 2px;transform:skewY(0.0deg);"></div>
<div style="position:absolute;left:1027.5px;top:906.7px;width:19.9px;height:0;border-top:1.4px dashed rgba(20,20,20,.6)"></div>
<div style="position:absolute;left:17.150000000000002px;top:921.1px;width:64.0px;height:18.899999999999977px;background:#8db4e2;"></div>
<div style="position:absolute;left:82.25px;top:921.1px;width:67.6px;height:18.899999999999977px;background:#8db4e2;"></div>
<div style="position:absolute;left:150.95000000000002px;top:921.1px;width:117.89999999999995px;height:18.899999999999977px;background:#8db4e2;"></div>
<div style="position:absolute;left:269.95px;top:921.1px;width:74.89999999999998px;height:18.899999999999977px;background:#bfbfbf;"></div>
<div style="position:absolute;left:345.95px;top:921.1px;width:121.69999999999999px;height:18.899999999999977px;background:#bfbfbf;"></div>
<div style="position:absolute;left:468.75px;top:921.1px;width:84.10000000000002px;height:18.899999999999977px;background:#bfbfbf;"></div>
<div style="position:absolute;left:553.9499999999999px;top:921.1px;width:85.10000000000014px;height:18.899999999999977px;background:#c4d79b;"></div>
<div style="position:absolute;left:640.15px;top:921.1px;width:132.70000000000005px;height:18.899999999999977px;background:#c4d79b;"></div>
<div style="position:absolute;left:773.9499999999999px;top:921.1px;width:67.80000000000007px;height:18.899999999999977px;background:#c4d79b;"></div>
<div style="position:absolute;left:842.8499999999999px;top:921.1px;width:65.00000000000011px;height:18.899999999999977px;background:#c4d79b;"></div>
<div style="position:absolute;left:908.9499999999999px;top:921.1px;width:78.80000000000007px;height:18.899999999999977px;background:#c4d79b;"></div>
<div style="position:absolute;left:988.8499999999999px;top:921.1px;width:77.00000000000023px;height:18.899999999999977px;background:#c4d79b;"></div>
<div style="position:absolute;left:1066.95px;top:921.1px;width:74.90000000000009px;height:18.899999999999977px;background:#da9694;"></div>
<div style="position:absolute;left:1142.95px;top:921.1px;width:38.09999999999991px;height:18.899999999999977px;background:#da9694;"></div>
<div style="position:absolute;left:554px;top:921.1px;width:85px;height:18.899999999999977px;overflow:hidden"><span style="position:absolute;left:1.59px;top:3.82px;white-space:nowrap;line-height:1;font-family:'Liberation Sans', sans-serif;font-size:13.8px;font-weight:normal;font-style:normal;color:#111;transform-origin:0 0;transform:scaleX(0.9971);">Sécurité</span></div>
<div style="position:absolute;left:640.5px;top:921.1px;width:132px;height:18.899999999999977px;overflow:hidden"><span style="position:absolute;left:1.69px;top:3.82px;white-space:nowrap;line-height:1;font-family:'Liberation Sans', sans-serif;font-size:13.8px;font-weight:normal;font-style:normal;color:#111;transform-origin:0 0;transform:scaleX(0.8915);">Recyclage SST</span></div>
<div style="position:absolute;left:909px;top:921.1px;width:79px;height:18.899999999999977px;overflow:hidden"><span style="position:absolute;left:35.66px;top:3.82px;white-space:nowrap;line-height:1;font-family:'Liberation Sans', sans-serif;font-size:13.8px;font-weight:normal;font-style:normal;color:#111;transform-origin:0 0;transform:scaleX(0.9205);">7</span></div>
<div style="position:absolute;left:989px;top:921.1px;width:77px;height:18.899999999999977px;overflow:hidden"><span style="position:absolute;left:69.19px;top:3.82px;white-space:nowrap;line-height:1;font-family:'Liberation Sans', sans-serif;font-size:13.8px;font-weight:normal;font-style:normal;color:#111;transform-origin:0 0;transform:scaleX(0.8034);">€</span></div>
<div style="position:absolute;left:100.08517887563885px;top:926.55px;width:28.960817717206126px;height:11.0px;background:#fff;border-radius:2px 2px 1px 1px;"></div>
<div style="position:absolute;left:185.26405451448042px;top:926.55px;width:58.34752981260647px;height:11.0px;background:#fff;border-radius:2px 2px 1px 1px;transform:skewY(-0.7deg);"></div>
<div style="position:absolute;left:276.8313458262351px;top:927.4499999999999px;width:59.625212947189084px;height:9.2px;background:#fff;border-radius:1px 2px 3px 1px;transform:skewY(0.0deg);"></div>
<div style="position:absolute;left:284.0px;top:927.5px;width:26.8px;height:0;border-top:1.4px dashed rgba(20,20,20,.6)"></div>
<div style="position:absolute;left:353.4923339011925px;top:926.55px;width:53.236797274276px;height:11.0px;background:#fff;border-radius:3px 2px 2px 1px;transform:skewY(1.4deg);"></div>
<div style="position:absolute;left:496.16695059625215px;top:926.55px;width:34.071550255536636px;height:11.0px;background:#fff;border-radius:1px 2px 3px 1px;transform:skewY(0.0deg);"></div>
<div style="position:absolute;left:500.3px;top:926.6px;width:15.3px;height:0;border-top:1.4px dashed rgba(20,20,20,.6)"></div>
<div style="position:absolute;left:846.1669505962521px;top:927.15px;width:32.79386712095402px;height:9.799999999999999px;background:#fff;border-radius:1px 2px 3px 1px;transform:skewY(0.0deg);"></div>
<div style="position:absolute;left:850.1px;top:927.2px;width:14.8px;height:0;border-top:1.4px dashed rgba(20,20,20,.6)"></div>
<div style="position:absolute;left:1010.9880749574106px;top:927.15px;width:46.84838160136292px;height:9.799999999999999px;background:#fff;border-radius:2px 2px 1px 1px;transform:skewY(-0.7deg);"></div>
<div style="position:absolute;left:17.150000000000002px;top:941.2px;width:64.0px;height:7.099999999999909px;background:#8db4e2;"></div>
<div style="position:absolute;left:82.25px;top:941.2px;width:67.6px;height:7.099999999999909px;background:#8db4e2;"></div>
<div style="position:absolute;left:150.95000000000002px;top:941.2px;width:117.89999999999995px;height:7.099999999999909px;background:#8db4e2;"></div>
<div style="position:absolute;left:269.95px;top:941.2px;width:74.89999999999998px;height:7.099999999999909px;background:#bfbfbf;"></div>
<div style="position:absolute;left:345.95px;top:941.2px;width:121.69999999999999px;height:7.099999999999909px;background:#bfbfbf;"></div>
<div style="position:absolute;left:468.75px;top:941.2px;width:84.10000000000002px;height:7.099999999999909px;background:#bfbfbf;"></div>
<div style="position:absolute;left:553.9499999999999px;top:941.2px;width:85.10000000000014px;height:7.099999999999909px;background:#c4d79b;"></div>
<div style="position:absolute;left:640.15px;top:941.2px;width:132.70000000000005px;height:7.099999999999909px;background:#c4d79b;"></div>
<div style="position:absolute;left:773.9499999999999px;top:941.2px;width:67.80000000000007px;height:7.099999999999909px;background:#c4d79b;"></div>
<div style="position:absolute;left:842.8499999999999px;top:941.2px;width:65.00000000000011px;height:7.099999999999909px;background:#c4d79b;"></div>
<div style="position:absolute;left:908.9499999999999px;top:941.2px;width:78.80000000000007px;height:7.099999999999909px;background:#c4d79b;"></div>
<div style="position:absolute;left:988.8499999999999px;top:941.2px;width:77.00000000000023px;height:7.099999999999909px;background:#c4d79b;"></div>
<div style="position:absolute;left:1066.95px;top:941.2px;width:74.90000000000009px;height:7.099999999999909px;background:#da9694;"></div>
<div style="position:absolute;left:1142.95px;top:941.2px;width:38.09999999999991px;height:7.099999999999909px;background:#da9694;"></div>
<div style="position:absolute;left:554px;top:941.2px;width:85px;height:7.099999999999909px;overflow:hidden"><span style="position:absolute;left:1.59px;top:3.72px;white-space:nowrap;line-height:1;font-family:'Liberation Sans', sans-serif;font-size:13.8px;font-weight:normal;font-style:normal;color:#111;transform-origin:0 0;transform:scaleX(0.9971);">Sécurité</span></div>
<div style="position:absolute;left:640.5px;top:941.2px;width:132px;height:7.099999999999909px;overflow:hidden"><span style="position:absolute;left:1.69px;top:3.72px;white-space:nowrap;line-height:1;font-family:'Liberation Sans', sans-serif;font-size:13.8px;font-weight:normal;font-style:normal;color:#111;transform-origin:0 0;transform:scaleX(0.9919);">Gestes et postures</span></div>
<div style="position:absolute;left:909px;top:941.2px;width:79px;height:7.099999999999909px;overflow:hidden"><span style="position:absolute;left:35.66px;top:3.72px;white-space:nowrap;line-height:1;font-family:'Liberation Sans', sans-serif;font-size:13.8px;font-weight:normal;font-style:normal;color:#111;transform-origin:0 0;transform:scaleX(0.9205);">7</span></div>
<div style="position:absolute;left:82.7px;top:941.2px;width:66.7px;height:7.099999999999909px;overflow:hidden"><span style="position:absolute;left:19.11px;top:3.72px;white-space:nowrap;line-height:1;font-family:'Liberation Sans', sans-serif;font-size:13.8px;font-weight:normal;font-style:normal;color:#111;transform-origin:0 0;transform:scaleX(1.0000);">STG</span></div>
<div style="position:absolute;left:151.4px;top:941.2px;width:116.99999999999997px;height:7.099999999999909px;overflow:hidden"><span style="position:absolute;left:25.26px;top:3.72px;white-space:nowrap;line-height:1;font-family:'Liberation Sans', sans-serif;font-size:13.8px;font-weight:normal;font-style:normal;color:#111;transform-origin:0 0;transform:scaleX(1.0000);">UNTERER</span></div>
<div style="position:absolute;left:270.4px;top:941.2px;width:74.0px;height:7.099999999999909px;overflow:hidden"><span style="position:absolute;left:5.90px;top:3.72px;white-space:nowrap;line-height:1;font-family:'Liberation Sans', sans-serif;font-size:13.8px;font-weight:normal;font-style:normal;color:#111;transform-origin:0 0;transform:scaleX(1.0000);">10059391</span></div>
<div style="position:absolute;left:346.4px;top:941.2px;width:120.80000000000001px;height:7.099999999999909px;overflow:hidden"><span style="position:absolute;left:2.19px;top:3.72px;white-space:nowrap;line-height:1;font-family:'Liberation Sans', sans-serif;font-size:13.8px;font-weight:normal;font-style:normal;color:#111;transform-origin:0 0;transform:scaleX(1.0000);">BRIAND</span></div>
<div style="position:absolute;left:469.2px;top:941.2px;width:83.19999999999999px;height:7.099999999999909px;overflow:hidden"><span style="position:absolute;left:21.75px;top:3.72px;white-space:nowrap;line-height:1;font-family:'Liberation Sans', sans-serif;font-size:13.8px;font-weight:normal;font-style:normal;color:#111;transform-origin:0 0;transform:scaleX(1.0000);">Simon</span></div>
<div style="position:absolute;left:843.3px;top:941.2px;width:64.10000000000002px;height:7.099999999999909px;overflow:hidden"><span style="position:absolute;left:2.29px;top:3.72px;white-space:nowrap;line-height:1;font-family:'Liberation Sans', sans-serif;font-size:13.8px;font-weight:normal;font-style:normal;color:#111;transform-origin:0 0;transform:scaleX(1.0000);">AFAUR</span></div>
<div style="position:absolute;left:989.3px;top:941.2px;width:76.10000000000014px;height:7.099999999999909px;overflow:hidden"><span style="position:absolute;left:21.90px;top:3.72px;white-space:nowrap;line-height:1;font-family:'Liberation Sans', sans-serif;font-size:13.8px;font-weight:normal;font-style:normal;color:#111;transform-origin:0 0;transform:scaleX(1.0000);">124,00 €</span></div>
<div style="position:absolute;left:1067.4px;top:941.2px;width:74.0px;height:7.099999999999909px;overflow:hidden"><span style="position:absolute;left:22.79px;top:3.72px;white-space:nowrap;line-height:1;font-family:'Liberation Sans', sans-serif;font-size:13.8px;font-weight:normal;font-style:normal;color:#111;transform-origin:0 0;transform:scaleX(1.0000);">Plan</span></div>
<div style="position:absolute;left:1143.4px;top:941.2px;width:36.59999999999991px;height:7.099999999999909px;overflow:hidden"><span style="position:absolute;left:3.19px;top:3.72px;white-space:nowrap;line-height:1;font-family:'Liberation Sans', sans-serif;font-size:13.8px;font-weight:normal;font-style:normal;color:#111;transform-origin:0 0;transform:scaleX(1.0000);">Confir</span></div>
<span style="position:absolute;left:460.21px;top:644.70px;white-space:nowrap;line-height:1;font-family:'Liberation Sans', sans-serif;font-size:13px;font-weight:normal;font-style:normal;color:#333;transform-origin:0 0;transform:scaleX(0.6757);">Y</span>
<span style="position:absolute;left:460.21px;top:665.30px;white-space:nowrap;line-height:1;font-family:'Liberation Sans', sans-serif;font-size:13px;font-weight:normal;font-style:normal;color:#333;transform-origin:0 0;transform:scaleX(0.6757);">Y</span>
<div style="position:absolute;left:15.600000000000001px;top:576.6px;width:67.3px;height:22.2px;border:2px solid #217346"></div>
<svg style="position:absolute;left:18.5px;top:579px;" width="6" height="6" viewBox="0 0 6 6"><path d="M0 0H5.5L0 5.5Z" fill="#217346"/></svg>
<div style="position:absolute;left:77.4px;top:593.6px;width:6.6px;height:6.6px;background:#217346;border:1px solid #fff;box-sizing:content-box"></div>
<div style="position:absolute;left:84.2px;top:578.6px;width:29.3px;height:28.8px;background:#fbfbfb;border:1px solid #d9d9d9"></div>
<svg style="position:absolute;left:89px;top:582px;" width="20" height="20" viewBox="0 0 20 20"><path d="M10 .6L19.4 10L10 19.4L.6 10Z" fill="#f2c16e"/><rect x="9" y="4.6" width="2" height="7.4" fill="#5a5a5a"/><rect x="9" y="13.4" width="2" height="2.2" fill="#5a5a5a"/></svg>
<div style="position:absolute;left:0px;top:948.3px;width:1181px;height:34px;background:#e6e6e6;"></div>
<div style="position:absolute;left:0px;top:947.8px;width:1181px;height:1.1px;background:#a0a0a0;"></div>
<svg style="position:absolute;left:19.8px;top:959.2px;" width="7" height="10.6" viewBox="0 0 7 10.6"><path d="M6.6 0V10.6L0 5.3Z" fill="#c2c2c2"/></svg>
<svg style="position:absolute;left:54.8px;top:959.2px;" width="7" height="10.6" viewBox="0 0 7 10.6"><path d="M.2 0V10.6L6.8 5.3Z" fill="#c2c2c2"/></svg>
<div style="position:absolute;left:108.8px;top:952.4px;width:1.2px;height:25.6px;background:#8a8a8a;"></div>
<div style="position:absolute;left:111.8px;top:951.2px;width:210.2px;height:27.7px;background:#558ed5;"></div>
<span style="position:absolute;left:129.42px;top:954.05px;white-space:nowrap;line-height:1;font-family:'Liberation Sans', sans-serif;font-size:19.2px;font-weight:normal;font-style:normal;color:#111;transform-origin:0 0;transform:scaleX(1.0050);">Plan 2019 consolidé</span>
<div style="position:absolute;left:324.3px;top:948px;width:92.5px;height:31px;background:linear-gradient(#fff,#fff 60%,#f1f4f8);border-left:1px solid #c6c6c6;border-right:1px solid #c6c6c6;border-bottom:2.2px solid #217346"></div>
<span style="position:absolute;left:336.02px;top:954.05px;white-space:nowrap;line-height:1;font-family:'Liberation Sans', sans-serif;font-size:19.2px;font-weight:bold;font-style:normal;color:#217346;transform-origin:0 0;transform:scaleX(0.9927);">Service</span>
<span style="position:absolute;left:433.62px;top:954.05px;white-space:nowrap;line-height:1;font-family:'Liberation Sans', sans-serif;font-size:19.2px;font-weight:normal;font-style:normal;color:#444;transform-origin:0 0;transform:scaleX(0.9611);">Tableaux IRP</span>
<span style="position:absolute;left:578.12px;top:954.05px;white-space:nowrap;line-height:1;font-family:'Liberation Sans', sans-serif;font-size:19.2px;font-weight:normal;font-style:normal;color:#444;transform-origin:0 0;transform:scaleX(1.0048);">Graphiques</span>
<span style="position:absolute;left:710.82px;top:954.05px;white-space:nowrap;line-height:1;font-family:'Liberation Sans', sans-serif;font-size:19.2px;font-weight:normal;font-style:normal;color:#444;transform-origin:0 0;transform:scaleX(1.0120);">Indicateurs</span>
<span style="position:absolute;left:842.82px;top:954.05px;white-space:nowrap;line-height:1;font-family:'Liberation Sans', sans-serif;font-size:19.2px;font-weight:normal;font-style:normal;color:#444;transform-origin:0 0;transform:scaleX(0.9926);">Calcul Indicateurs</span>
<span style="position:absolute;left:1029.82px;top:954.05px;white-space:nowrap;line-height:1;font-family:'Liberation Sans', sans-serif;font-size:19.2px;font-weight:normal;font-style:normal;color:#444;transform-origin:0 0;transform:scaleX(0.9840);">Tables</span>
<span style="position:absolute;left:1114.42px;top:954.05px;white-space:nowrap;line-height:1;font-family:'Liberation Sans', sans-serif;font-size:19.2px;font-weight:normal;font-style:normal;color:#444;transform-origin:0 0;transform:scaleX(1.0218);">DATA</span>
<div style="position:absolute;left:563.0px;top:952.4px;width:1.2px;height:25px;background:#ababab;"></div>
<div style="position:absolute;left:693.8px;top:952.4px;width:1.2px;height:25px;background:#ababab;"></div>
<div style="position:absolute;left:822.8px;top:952.4px;width:1.2px;height:25px;background:#ababab;"></div>
<div style="position:absolute;left:1014.9px;top:952.4px;width:1.2px;height:25px;background:#ababab;"></div>
<div style="position:absolute;left:1099.9px;top:952.4px;width:1.2px;height:25px;background:#ababab;"></div>
<div style="position:absolute;left:1177.9px;top:952.4px;width:1.2px;height:25px;background:#ababab;"></div>
<div style="position:absolute;left:0px;top:981.8px;width:1181px;height:12px;background:#f3f3f3;"></div>
<div style="position:absolute;left:0px;top:981.6px;width:1181px;height:1.1px;background:#c8c8c8;"></div>
<div style="position:absolute;left:18px;top:991.6px;width:1.3px;height:2px;background:#555;"></div>
<div style="position:absolute;left:101px;top:991.6px;width:1.3px;height:2px;background:#555;"></div>
<div style="position:absolute;left:122px;top:991.6px;width:1.3px;height:2px;background:#555;"></div>
<div style="position:absolute;left:128px;top:991.6px;width:1.3px;height:2px;background:#555;"></div>
<div style="position:absolute;left:174.5px;top:988.6px;width:6.5px;height:5px;background:#6a6a6a;border-radius:3px 3px 0 0"></div>
<div style="position:absolute;left:183px;top:990px;width:10.5px;height:3px;background:#6a6a6a;"></div>
</div></body></html>
